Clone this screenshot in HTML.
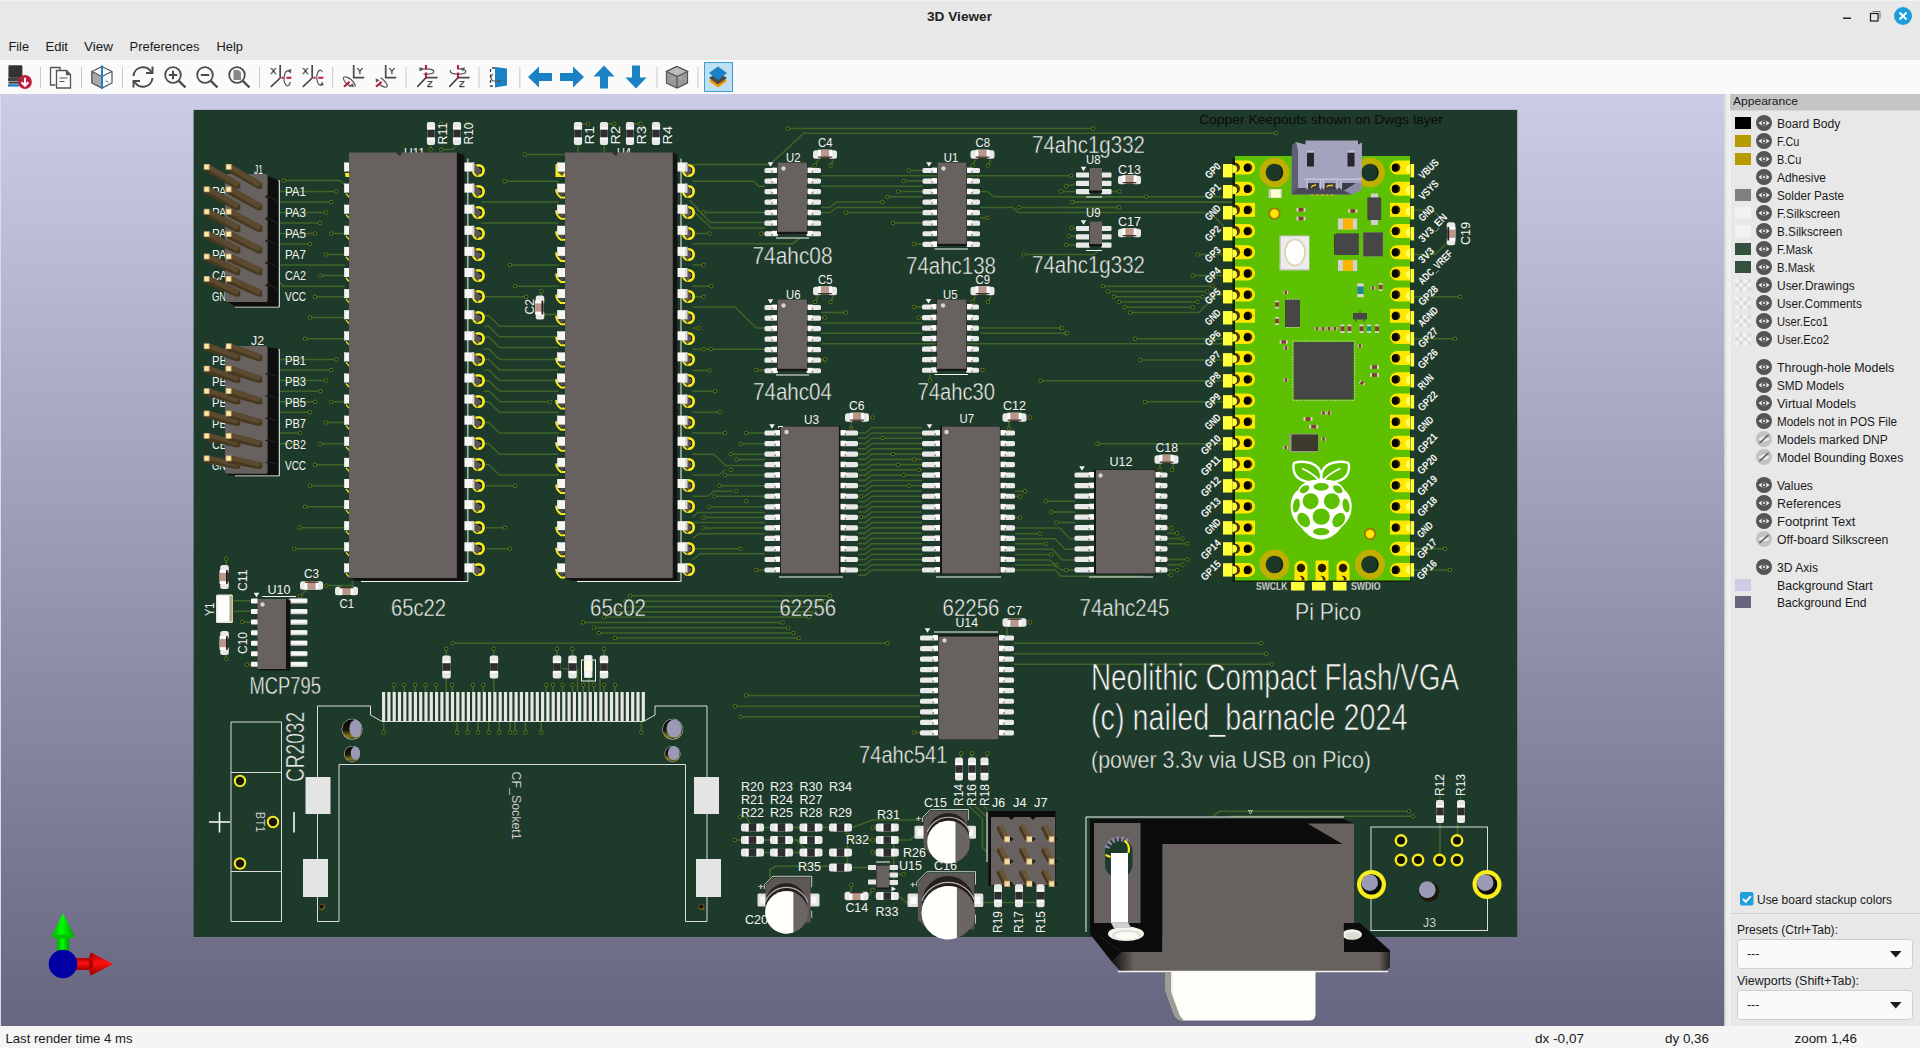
<!DOCTYPE html><html><head><meta charset="utf-8"><title>3D Viewer</title><style>
*{box-sizing:border-box}
html,body{margin:0;padding:0}
body{width:1920px;height:1048px;overflow:hidden;position:relative;background:#e8e8e8;font-family:"Liberation Sans",sans-serif;color:#1e1e1e}
#all{position:absolute;left:0;top:0}
.pt{font-size:12.3px;fill:#1a1a1a;font-family:"Liberation Sans",sans-serif}
.mt{font-size:13.2px;fill:#1a1a1a;font-family:"Liberation Sans",sans-serif}
</style></head><body><svg id="all" width="1920" height="1048" viewBox="0 0 1920 1048"><defs><linearGradient id="bg" x1="0" y1="0" x2="0" y2="1"><stop offset="0" stop-color="#ccccE6"/><stop offset="1" stop-color="#666680"/></linearGradient><clipPath id="cv"><rect x="1" y="94" width="1723.500" height="932"/></clipPath></defs>
<rect x="0" y="0" width="1920" height="60" fill="#e8e8e8"/><rect x="0" y="0" width="1920" height="1" fill="#f2f2f2"/><text x="959.500" y="20.800" text-anchor="middle" font-weight="700" font-size="13px" fill="#222" font-family="Liberation Sans,sans-serif" textLength="65" lengthAdjust="spacingAndGlyphs">3D Viewer</text><rect x="1843" y="17.500" width="8" height="1.400" fill="#1a1a1a"/><rect x="1870.500" y="13.500" width="7.500" height="7.500" fill="none" stroke="#1a1a1a" stroke-width="1.200"/><path d="M1872.500,11.500h7.500v7.500" fill="none" stroke="#555" stroke-width="0.800"/><circle cx="1903" cy="16" r="9" fill="#1f9ede"/><path d="M1899.500,12.500l7,7M1906.500,12.500l-7,7" stroke="#fff" stroke-width="2"/><text x="8.4" y="50.600" class="mt" textLength="20.6" lengthAdjust="spacingAndGlyphs">File</text><text x="45.4" y="50.600" class="mt" textLength="22.6" lengthAdjust="spacingAndGlyphs">Edit</text><text x="84" y="50.600" class="mt" textLength="29" lengthAdjust="spacingAndGlyphs">View</text><text x="129.5" y="50.600" class="mt" textLength="70" lengthAdjust="spacingAndGlyphs">Preferences</text><text x="216.5" y="50.600" class="mt" textLength="26.5" lengthAdjust="spacingAndGlyphs">Help</text><rect x="0" y="60" width="1920" height="34" fill="#fafafa"/><rect x="40.0" y="67" width="1" height="21" fill="#c8c8c8"/><rect x="81.0" y="67" width="1" height="21" fill="#c8c8c8"/><rect x="122.0" y="67" width="1" height="21" fill="#c8c8c8"/><rect x="259.0" y="67" width="1" height="21" fill="#c8c8c8"/><rect x="332.2" y="67" width="1" height="21" fill="#c8c8c8"/><rect x="405.5" y="67" width="1" height="21" fill="#c8c8c8"/><rect x="478.5" y="67" width="1" height="21" fill="#c8c8c8"/><rect x="519.3" y="67" width="1" height="21" fill="#c8c8c8"/><rect x="656.5" y="67" width="1" height="21" fill="#c8c8c8"/><rect x="697.5" y="67" width="1" height="21" fill="#c8c8c8"/><g transform="translate(8,65)"><rect x="0.400" y="0.200" width="14" height="12.500" rx="1.200" fill="#333"/><rect x="0" y="12.500" width="15" height="4" rx="1" fill="#444"/><rect x="0.500" y="17" width="13" height="1.600" fill="#333"/><rect x="0" y="19.200" width="11" height="2.400" fill="#1a81c4"/><circle cx="17" cy="17" r="6.900" fill="#c01c3c"/><path d="M17,12.800v7.500M13.600,17.200l3.400,3.500l3.400,-3.500" stroke="#fff" stroke-width="2" fill="none"/></g><g transform="translate(49,65)" fill="#fafafa" stroke="#555" stroke-width="1.3"><path d="M1.5,2.5h9.5v3M1.5,2.5v17.5h5"/><path d="M7.5,5.5h10l4,4v13.500h-14z"/><path d="M17.5,5.500v4h4" fill="#555"/><path d="M10.500,13h8M10.500,16.500h5" stroke-width="1.2"/></g><g transform="translate(90,65)"><path d="M12,1.500L22,6.500V18L12,23L2,18V6.500Z" fill="#fafafa" stroke="#555" stroke-width="1.2"/><path d="M2,6.500L12,11.500V23L2,18Z" fill="#aaa" stroke="#555" stroke-width="1.2"/><path d="M12,11.500L22,6.500" stroke="#555" stroke-width="1.2"/><path d="M12,0.500V24" stroke="#1a81c4" stroke-width="2"/><path d="M15.500,16l3,1" stroke="#555" stroke-width="0.8"/></g><g transform="translate(131,65)" fill="none" stroke="#4a4a4a" stroke-width="2"><path d="M2.500,11A9.500,9.500 0 0 1 20.500,7.500"/><path d="M21.500,1.500v6.500h-6.500" /><path d="M21.500,13A9.500,9.500 0 0 1 3.500,16.500"/><path d="M2.500,22.500v-6.500h6.500"/></g><g transform="translate(163,65)" fill="none" stroke="#4a4a4a"><circle cx="10" cy="10" r="7.800" stroke-width="1.8"/><path d="M15.800,15.800L22.500,22.500" stroke-width="2.4"/><path d="M10,5.800v8.400M5.800,10h8.400" stroke-width="2"/></g><g transform="translate(195,65)" fill="none" stroke="#4a4a4a"><circle cx="10" cy="10" r="7.800" stroke-width="1.8"/><path d="M15.800,15.800L22.500,22.500" stroke-width="2.4"/><path d="M5.800,10h8.400" stroke-width="2"/></g><g transform="translate(227,65)" fill="none" stroke="#4a4a4a"><circle cx="10" cy="10" r="7.800" stroke-width="1.8"/><path d="M15.800,15.800L22.500,22.500" stroke-width="2.4"/><path d="M6.500,5h5l2.500,2.500v7.500h-7.500z" fill="#888" stroke="none"/></g><g transform="translate(269,65)"><path d="M11.200,0V13L1.800,21.800" stroke="#4a4a4a" stroke-width="1.700" fill="none"/><path d="M12.500,12.800h2.200M17.400,12.800h5" stroke="#c01c3c" stroke-width="1.900"/><path d="M19.800,6.500 A3.300,7.500 0 1 0 21.300,17" stroke="#555" stroke-width="1.200" fill="none"/><path d="M18.300,5.200l3.600,3.400l0.400,-4.600z" fill="#555"/><text x="1.200" y="8.700" font-size="9.300" font-weight="400" fill="#333" stroke="#333" stroke-width="0.250" font-family="Liberation Sans,sans-serif">X</text></g><g transform="translate(301,65)"><path d="M11.200,0V13L1.800,21.800" stroke="#4a4a4a" stroke-width="1.700" fill="none"/><path d="M12.500,12.800h2.200M17.400,12.800h5" stroke="#c01c3c" stroke-width="1.900"/><path d="M21.300,6.800 A3.300,7.500 0 1 0 20.500,19.500" stroke="#555" stroke-width="1.200" fill="none"/><path d="M18.800,20.800l4,-0.600l-1.600,-3.600z" fill="#555"/><text x="1.200" y="8.700" font-size="9.300" font-weight="400" fill="#333" stroke="#333" stroke-width="0.250" font-family="Liberation Sans,sans-serif">X</text></g><g transform="translate(341,65)"><path d="M12.700,0V12.700H23.200" stroke="#4a4a4a" stroke-width="1.700" fill="none"/><ellipse cx="8.300" cy="17" rx="7.300" ry="3" transform="rotate(40 8.300 17)" stroke="#555" stroke-width="1.200" fill="none" stroke-dasharray="34 9" stroke-dashoffset="-4"/><path d="M8.500,20.200l4.200,2.200l-0.400,-4.200z" fill="#555"/><path d="M8.600,16.700L3,21.800" stroke="#c01c3c" stroke-width="2.200"/><text x="15.800" y="8.700" font-size="9.300" font-weight="400" fill="#333" stroke="#333" stroke-width="0.250" font-family="Liberation Sans,sans-serif">Y</text></g><g transform="translate(373,65)"><path d="M12.700,0V12.700H23.200" stroke="#4a4a4a" stroke-width="1.700" fill="none"/><ellipse cx="8.300" cy="17" rx="7.300" ry="3" transform="rotate(40 8.300 17)" stroke="#555" stroke-width="1.200" fill="none" stroke-dasharray="30 13" stroke-dashoffset="-22"/><path d="M2.600,13.200l0.400,4.200l3.600,-2.200z" fill="#555"/><path d="M8.600,16.700L3,21.800" stroke="#c01c3c" stroke-width="2.200"/><text x="15.800" y="8.700" font-size="9.300" font-weight="400" fill="#333" stroke="#333" stroke-width="0.250" font-family="Liberation Sans,sans-serif">Y</text></g><g transform="translate(415,65)"><path d="M11,12.700H22.500M11,12.700L2.300,21.800" stroke="#4a4a4a" stroke-width="1.700" fill="none"/><ellipse cx="11" cy="6.500" rx="7.800" ry="2.700" stroke="#555" stroke-width="1.200" fill="none" stroke-dasharray="36 8" stroke-dashoffset="-19"/><path d="M3.800,2.600l4.400,0.400l-2.200,3.400z" fill="#555"/><path d="M11,0V4.500M11,7.500V13.500" stroke="#c01c3c" stroke-width="2.100"/><text x="12" y="22.400" font-size="9.300" font-weight="400" fill="#333" stroke="#333" stroke-width="0.250" font-family="Liberation Sans,sans-serif">Z</text></g><g transform="translate(447,65)"><path d="M11,12.700H22.500M11,12.700L2.300,21.800" stroke="#4a4a4a" stroke-width="1.700" fill="none"/><ellipse cx="11" cy="6.500" rx="7.800" ry="2.700" stroke="#555" stroke-width="1.200" fill="none" stroke-dasharray="36 8" stroke-dashoffset="-27"/><path d="M18.200,2.600l-4.400,0.400l2.200,3.400z" fill="#555"/><path d="M11,0V4.500M11,7.500V13.500" stroke="#c01c3c" stroke-width="2.100"/><text x="12" y="22.400" font-size="9.300" font-weight="400" fill="#333" stroke="#333" stroke-width="0.250" font-family="Liberation Sans,sans-serif">Z</text></g><g transform="translate(487,65)"><path d="M8,3H3.500V21H8" fill="none" stroke="#444" stroke-width="1.3" stroke-dasharray="3 2.500"/><path d="M8,2L20,3.500V20.500L8,22.500Z" fill="#1a81c4"/><path d="M6,9a4,4 0 0 0 0,7h6" stroke="#555" stroke-width="1.2" fill="none"/><path d="M11,14l3,2l-3,2z" fill="#555"/></g><path d="M528,77l11,-10.500v6.500h13v8h-13v6.500z" fill="#1a81c4"/><path d="M584,77l-11,-10.500v6.500h-13v8h13v6.500z" fill="#1a81c4"/><path d="M604,65.500l10.500,11h-6.500v12h-8v-12h-6.500z" fill="#1a81c4"/><path d="M636,88.500l10.500,-11h-6.500v-12h-8v12h-6.500z" fill="#1a81c4"/><g transform="translate(665,65)"><path d="M12,1.500L22.500,6.500V18L12,23L1.500,18V6.500Z" fill="#999" stroke="#555" stroke-width="1.2"/><path d="M12,1.500L22.500,6.500L12,11.500L1.500,6.500Z" fill="#bbb" stroke="#555" stroke-width="1.2"/><path d="M12,11.500V23" stroke="#555" stroke-width="1.2"/><path d="M12,4v4M7,14l4,-2M17,14l-4,-2" stroke="#ccc" stroke-width="0.6"/></g><rect x="704.500" y="62.500" width="28" height="29" fill="#bde0f3" stroke="#3d9bd6" stroke-width="1"/><g transform="translate(706,65)"><path d="M12,10L21,16L12,22.500L3,16Z" fill="#f29100"/><path d="M12,7L21,13L12,19.500L3,13Z" fill="#4a4a4a"/><path d="M12,1.500L21,8L12,15L3,8Z" fill="#1a81c4"/></g><rect x="1724" y="94" width="196" height="932" fill="#e8e8e8"/><rect x="1724" y="94" width="6" height="932" fill="#ececec"/><rect x="1724.500" y="94" width="1" height="932" fill="#d2d2d2"/><rect x="1729" y="94" width="1.500" height="932" fill="#f4f4f4"/><rect x="1730" y="94" width="190" height="16.500" fill="#c4c4c4"/><text x="1733" y="104.700" font-size="11.5px" fill="#1a1a1a" font-family="Liberation Sans,sans-serif" textLength="65" lengthAdjust="spacingAndGlyphs">Appearance</text><rect x="1735" y="117" width="16" height="12" fill="#000"/><g transform="translate(1764,123)"><circle r="8" fill="#555"/><path d="M-5.6,0 Q0,-5.2 5.6,0 Q0,5.2 -5.6,0Z" fill="#f4f4f4"/><circle r="2.5" fill="#555"/><circle r="1.1" fill="#f4f4f4"/></g><text x="1777" y="127.5" class="pt" textLength="63.4" lengthAdjust="spacingAndGlyphs">Board Body</text><rect x="1735" y="135" width="16" height="12" fill="#b39b00"/><g transform="translate(1764,141)"><circle r="8" fill="#555"/><path d="M-5.6,0 Q0,-5.2 5.6,0 Q0,5.2 -5.6,0Z" fill="#f4f4f4"/><circle r="2.5" fill="#555"/><circle r="1.1" fill="#f4f4f4"/></g><text x="1777" y="145.5" class="pt" textLength="22.2" lengthAdjust="spacingAndGlyphs">F.Cu</text><rect x="1735" y="153" width="16" height="12" fill="#b39b00"/><g transform="translate(1764,159)"><circle r="8" fill="#555"/><path d="M-5.6,0 Q0,-5.2 5.6,0 Q0,5.2 -5.6,0Z" fill="#f4f4f4"/><circle r="2.5" fill="#555"/><circle r="1.1" fill="#f4f4f4"/></g><text x="1777" y="163.5" class="pt" textLength="24.2" lengthAdjust="spacingAndGlyphs">B.Cu</text><g transform="translate(1764,177)"><circle r="8" fill="#555"/><path d="M-5.6,0 Q0,-5.2 5.6,0 Q0,5.2 -5.6,0Z" fill="#f4f4f4"/><circle r="2.5" fill="#555"/><circle r="1.1" fill="#f4f4f4"/></g><text x="1777" y="181.5" class="pt" textLength="49" lengthAdjust="spacingAndGlyphs">Adhesive</text><rect x="1735" y="189" width="16" height="12" fill="#808080"/><g transform="translate(1764,195)"><circle r="8" fill="#555"/><path d="M-5.6,0 Q0,-5.2 5.6,0 Q0,5.2 -5.6,0Z" fill="#f4f4f4"/><circle r="2.5" fill="#555"/><circle r="1.1" fill="#f4f4f4"/></g><text x="1777" y="199.5" class="pt" textLength="67" lengthAdjust="spacingAndGlyphs">Solder Paste</text><rect x="1735" y="207" width="16" height="12" fill="#f2f2f2"/><g transform="translate(1764,213)"><circle r="8" fill="#555"/><path d="M-5.6,0 Q0,-5.2 5.6,0 Q0,5.2 -5.6,0Z" fill="#f4f4f4"/><circle r="2.5" fill="#555"/><circle r="1.1" fill="#f4f4f4"/></g><text x="1777" y="217.5" class="pt" textLength="63.1" lengthAdjust="spacingAndGlyphs">F.Silkscreen</text><rect x="1735" y="225" width="16" height="12" fill="#f2f2f2"/><g transform="translate(1764,231)"><circle r="8" fill="#555"/><path d="M-5.6,0 Q0,-5.2 5.6,0 Q0,5.2 -5.6,0Z" fill="#f4f4f4"/><circle r="2.5" fill="#555"/><circle r="1.1" fill="#f4f4f4"/></g><text x="1777" y="235.5" class="pt" textLength="65.2" lengthAdjust="spacingAndGlyphs">B.Silkscreen</text><rect x="1735" y="243" width="16" height="12" fill="#355241"/><g transform="translate(1764,249)"><circle r="8" fill="#555"/><path d="M-5.6,0 Q0,-5.2 5.6,0 Q0,5.2 -5.6,0Z" fill="#f4f4f4"/><circle r="2.5" fill="#555"/><circle r="1.1" fill="#f4f4f4"/></g><text x="1777" y="253.5" class="pt" textLength="35.6" lengthAdjust="spacingAndGlyphs">F.Mask</text><rect x="1735" y="261" width="16" height="12" fill="#355241"/><g transform="translate(1764,267)"><circle r="8" fill="#555"/><path d="M-5.6,0 Q0,-5.2 5.6,0 Q0,5.2 -5.6,0Z" fill="#f4f4f4"/><circle r="2.5" fill="#555"/><circle r="1.1" fill="#f4f4f4"/></g><text x="1777" y="271.5" class="pt" textLength="37.6" lengthAdjust="spacingAndGlyphs">B.Mask</text><rect x="1735" y="279" width="16" height="12" fill="#f2f2f2"/><rect x="1735" y="283" width="4" height="4" fill="#dcdcdc"/><rect x="1739" y="279" width="4" height="4" fill="#dcdcdc"/><rect x="1739" y="287" width="4" height="4" fill="#dcdcdc"/><rect x="1743" y="283" width="4" height="4" fill="#dcdcdc"/><rect x="1747" y="279" width="4" height="4" fill="#dcdcdc"/><rect x="1747" y="287" width="4" height="4" fill="#dcdcdc"/><g transform="translate(1764,285)"><circle r="8" fill="#555"/><path d="M-5.6,0 Q0,-5.2 5.6,0 Q0,5.2 -5.6,0Z" fill="#f4f4f4"/><circle r="2.5" fill="#555"/><circle r="1.1" fill="#f4f4f4"/></g><text x="1777" y="289.5" class="pt" textLength="77.8" lengthAdjust="spacingAndGlyphs">User.Drawings</text><rect x="1735" y="297" width="16" height="12" fill="#f2f2f2"/><rect x="1735" y="301" width="4" height="4" fill="#dcdcdc"/><rect x="1739" y="297" width="4" height="4" fill="#dcdcdc"/><rect x="1739" y="305" width="4" height="4" fill="#dcdcdc"/><rect x="1743" y="301" width="4" height="4" fill="#dcdcdc"/><rect x="1747" y="297" width="4" height="4" fill="#dcdcdc"/><rect x="1747" y="305" width="4" height="4" fill="#dcdcdc"/><g transform="translate(1764,303)"><circle r="8" fill="#555"/><path d="M-5.6,0 Q0,-5.2 5.6,0 Q0,5.2 -5.6,0Z" fill="#f4f4f4"/><circle r="2.5" fill="#555"/><circle r="1.1" fill="#f4f4f4"/></g><text x="1777" y="307.5" class="pt" textLength="84.8" lengthAdjust="spacingAndGlyphs">User.Comments</text><rect x="1735" y="315" width="16" height="12" fill="#f2f2f2"/><rect x="1735" y="319" width="4" height="4" fill="#dcdcdc"/><rect x="1739" y="315" width="4" height="4" fill="#dcdcdc"/><rect x="1739" y="323" width="4" height="4" fill="#dcdcdc"/><rect x="1743" y="319" width="4" height="4" fill="#dcdcdc"/><rect x="1747" y="315" width="4" height="4" fill="#dcdcdc"/><rect x="1747" y="323" width="4" height="4" fill="#dcdcdc"/><g transform="translate(1764,321)"><circle r="8" fill="#555"/><path d="M-5.6,0 Q0,-5.2 5.6,0 Q0,5.2 -5.6,0Z" fill="#f4f4f4"/><circle r="2.5" fill="#555"/><circle r="1.1" fill="#f4f4f4"/></g><text x="1777" y="325.5" class="pt" textLength="51.3" lengthAdjust="spacingAndGlyphs">User.Eco1</text><rect x="1735" y="333" width="16" height="12" fill="#f2f2f2"/><rect x="1735" y="337" width="4" height="4" fill="#dcdcdc"/><rect x="1739" y="333" width="4" height="4" fill="#dcdcdc"/><rect x="1739" y="341" width="4" height="4" fill="#dcdcdc"/><rect x="1743" y="337" width="4" height="4" fill="#dcdcdc"/><rect x="1747" y="333" width="4" height="4" fill="#dcdcdc"/><rect x="1747" y="341" width="4" height="4" fill="#dcdcdc"/><g transform="translate(1764,339)"><circle r="8" fill="#555"/><path d="M-5.6,0 Q0,-5.2 5.6,0 Q0,5.2 -5.6,0Z" fill="#f4f4f4"/><circle r="2.5" fill="#555"/><circle r="1.1" fill="#f4f4f4"/></g><text x="1777" y="343.5" class="pt" textLength="52" lengthAdjust="spacingAndGlyphs">User.Eco2</text><g transform="translate(1764,367)"><circle r="8" fill="#555"/><path d="M-5.6,0 Q0,-5.2 5.6,0 Q0,5.2 -5.6,0Z" fill="#f4f4f4"/><circle r="2.5" fill="#555"/><circle r="1.1" fill="#f4f4f4"/></g><text x="1777" y="371.5" class="pt" textLength="117.3" lengthAdjust="spacingAndGlyphs">Through-hole Models</text><g transform="translate(1764,385)"><circle r="8" fill="#555"/><path d="M-5.6,0 Q0,-5.2 5.6,0 Q0,5.2 -5.6,0Z" fill="#f4f4f4"/><circle r="2.5" fill="#555"/><circle r="1.1" fill="#f4f4f4"/></g><text x="1777" y="389.5" class="pt" textLength="67" lengthAdjust="spacingAndGlyphs">SMD Models</text><g transform="translate(1764,403)"><circle r="8" fill="#555"/><path d="M-5.6,0 Q0,-5.2 5.6,0 Q0,5.2 -5.6,0Z" fill="#f4f4f4"/><circle r="2.5" fill="#555"/><circle r="1.1" fill="#f4f4f4"/></g><text x="1777" y="407.5" class="pt" textLength="78.9" lengthAdjust="spacingAndGlyphs">Virtual Models</text><g transform="translate(1764,421)"><circle r="8" fill="#555"/><path d="M-5.6,0 Q0,-5.2 5.6,0 Q0,5.2 -5.6,0Z" fill="#f4f4f4"/><circle r="2.5" fill="#555"/><circle r="1.1" fill="#f4f4f4"/></g><text x="1777" y="425.5" class="pt" textLength="120.1" lengthAdjust="spacingAndGlyphs">Models not in POS File</text><g transform="translate(1764,439)"><circle r="8" fill="#c2c2c2"/><path d="M-5.6,0 Q0,-5.2 5.6,0 Q0,5.2 -5.6,0Z" fill="#efefef"/><path d="M-4.6,4.2 L4.6,-4.2" stroke="#666" stroke-width="1.6"/></g><text x="1777" y="443.5" class="pt" textLength="110.8" lengthAdjust="spacingAndGlyphs">Models marked DNP</text><g transform="translate(1764,457)"><circle r="8" fill="#c2c2c2"/><path d="M-5.6,0 Q0,-5.2 5.6,0 Q0,5.2 -5.6,0Z" fill="#efefef"/><path d="M-4.6,4.2 L4.6,-4.2" stroke="#666" stroke-width="1.6"/></g><text x="1777" y="461.5" class="pt" textLength="126.3" lengthAdjust="spacingAndGlyphs">Model Bounding Boxes</text><g transform="translate(1764,485)"><circle r="8" fill="#555"/><path d="M-5.6,0 Q0,-5.2 5.6,0 Q0,5.2 -5.6,0Z" fill="#f4f4f4"/><circle r="2.5" fill="#555"/><circle r="1.1" fill="#f4f4f4"/></g><text x="1777" y="489.5" class="pt" textLength="35.8" lengthAdjust="spacingAndGlyphs">Values</text><g transform="translate(1764,503)"><circle r="8" fill="#555"/><path d="M-5.6,0 Q0,-5.2 5.6,0 Q0,5.2 -5.6,0Z" fill="#f4f4f4"/><circle r="2.5" fill="#555"/><circle r="1.1" fill="#f4f4f4"/></g><text x="1777" y="507.5" class="pt" textLength="63.9" lengthAdjust="spacingAndGlyphs">References</text><g transform="translate(1764,521)"><circle r="8" fill="#555"/><path d="M-5.6,0 Q0,-5.2 5.6,0 Q0,5.2 -5.6,0Z" fill="#f4f4f4"/><circle r="2.5" fill="#555"/><circle r="1.1" fill="#f4f4f4"/></g><text x="1777" y="525.5" class="pt" textLength="78.4" lengthAdjust="spacingAndGlyphs">Footprint Text</text><g transform="translate(1764,539)"><circle r="8" fill="#c2c2c2"/><path d="M-5.6,0 Q0,-5.2 5.6,0 Q0,5.2 -5.6,0Z" fill="#efefef"/><path d="M-4.6,4.2 L4.6,-4.2" stroke="#666" stroke-width="1.6"/></g><text x="1777" y="543.5" class="pt" textLength="111.3" lengthAdjust="spacingAndGlyphs">Off-board Silkscreen</text><g transform="translate(1764,567)"><circle r="8" fill="#555"/><path d="M-5.6,0 Q0,-5.2 5.6,0 Q0,5.2 -5.6,0Z" fill="#f4f4f4"/><circle r="2.5" fill="#555"/><circle r="1.1" fill="#f4f4f4"/></g><text x="1777" y="571.5" class="pt" textLength="41" lengthAdjust="spacingAndGlyphs">3D Axis</text><rect x="1735" y="579" width="16" height="12" fill="#cccce6"/><text x="1777" y="589.5" class="pt" textLength="95.6" lengthAdjust="spacingAndGlyphs">Background Start</text><rect x="1735" y="596" width="16" height="12" fill="#666680"/><text x="1777" y="606.5" class="pt" textLength="89.4" lengthAdjust="spacingAndGlyphs">Background End</text><rect x="1740" y="892" width="13.500" height="13.500" rx="2" fill="#1f9ede"/><path d="M1743,899l2.800,2.800l5,-5.600" stroke="#fff" stroke-width="2" fill="none"/><text x="1757" y="903.500" class="pt" textLength="135" lengthAdjust="spacingAndGlyphs">Use board stackup colors</text><rect x="1730" y="913" width="190" height="1" fill="#d2d2d2"/><text x="1737" y="933.800" class="pt" textLength="101" lengthAdjust="spacingAndGlyphs">Presets (Ctrl+Tab):</text><rect x="1737.500" y="939.500" width="175" height="29" rx="3" fill="#fafafa" stroke="#cfcfcf"/><text x="1747" y="958" class="pt">---</text><path d="M1890,951h11.500l-5.750,6.500z" fill="#1a1a1a"/><text x="1737" y="984.800" class="pt" textLength="122" lengthAdjust="spacingAndGlyphs">Viewports (Shift+Tab):</text><rect x="1737.500" y="990.500" width="175" height="29" rx="3" fill="#fafafa" stroke="#cfcfcf"/><text x="1747" y="1009" class="pt">---</text><path d="M1890,1002h11.500l-5.750,6.500z" fill="#1a1a1a"/><rect x="0" y="1026" width="1920" height="22" fill="#f5f5f5"/><text x="5.500" y="1042.500" class="mt" textLength="127" lengthAdjust="spacingAndGlyphs">Last render time 4 ms</text><text x="1535" y="1042.500" class="mt" textLength="49" lengthAdjust="spacingAndGlyphs">dx -0,07</text><text x="1665" y="1042.500" class="mt" textLength="44" lengthAdjust="spacingAndGlyphs">dy 0,36</text><text x="1794.500" y="1042.500" class="mt" textLength="62.500" lengthAdjust="spacingAndGlyphs">zoom 1,46</text>
<rect x="0" y="94" width="1" height="932" fill="#dcdcdc"/>
<g clip-path="url(#cv)" font-family="Liberation Sans,sans-serif">
<rect x="1" y="94" width="1723.500" height="932" fill="url(#bg)"/>
<rect x="193.6" y="109.9" width="1323.6" height="827.1" fill="#1e3a2b" />
<path d="M283.75,180.5 L340,180.5 L345,185" fill="none" stroke="#3f6428" stroke-width="1.6" stroke-linejoin="round"/><circle cx="283.75" cy="180.5" r="2.2" fill="#4f6b22" /><circle cx="283.75" cy="180.5" r="1.1" fill="#0c0c04" /><path d="M280,191.5 L336.25,191.5" fill="none" stroke="#3f6428" stroke-width="1.6" stroke-linejoin="round"/><circle cx="336.25" cy="191.5" r="2.2" fill="#4f6b22" /><circle cx="336.25" cy="191.5" r="1.1" fill="#0c0c04" /><path d="M280,202 L331.25,202" fill="none" stroke="#3f6428" stroke-width="1.6" stroke-linejoin="round"/><circle cx="331.25" cy="202" r="2.2" fill="#4f6b22" /><circle cx="331.25" cy="202" r="1.1" fill="#0c0c04" /><path d="M280,212.5 L326.25,212.5" fill="none" stroke="#3f6428" stroke-width="1.6" stroke-linejoin="round"/><circle cx="326.25" cy="212.5" r="2.2" fill="#4f6b22" /><circle cx="326.25" cy="212.5" r="1.1" fill="#0c0c04" /><path d="M280,223 L320,223" fill="none" stroke="#3f6428" stroke-width="1.6" stroke-linejoin="round"/><circle cx="320" cy="223" r="2.2" fill="#4f6b22" /><circle cx="320" cy="223" r="1.1" fill="#0c0c04" /><path d="M280,233.5 L315,233.5" fill="none" stroke="#3f6428" stroke-width="1.6" stroke-linejoin="round"/><circle cx="315" cy="233.5" r="2.2" fill="#4f6b22" /><circle cx="315" cy="233.5" r="1.1" fill="#0c0c04" /><path d="M280,244 L310,244" fill="none" stroke="#3f6428" stroke-width="1.6" stroke-linejoin="round"/><circle cx="310" cy="244" r="2.2" fill="#4f6b22" /><circle cx="310" cy="244" r="1.1" fill="#0c0c04" /><path d="M331.25,233.5 L345,233.5" fill="none" stroke="#3f6428" stroke-width="1.6" stroke-linejoin="round"/><circle cx="331.25" cy="233.5" r="2.2" fill="#4f6b22" /><circle cx="331.25" cy="233.5" r="1.1" fill="#0c0c04" /><path d="M325.75,254.5 L345,254.5" fill="none" stroke="#3f6428" stroke-width="1.6" stroke-linejoin="round"/><circle cx="325.75" cy="254.5" r="2.2" fill="#4f6b22" /><circle cx="325.75" cy="254.5" r="1.1" fill="#0c0c04" /><path d="M320,275.5 L345,275.5" fill="none" stroke="#3f6428" stroke-width="1.6" stroke-linejoin="round"/><circle cx="320" cy="275.5" r="2.2" fill="#4f6b22" /><circle cx="320" cy="275.5" r="1.1" fill="#0c0c04" /><path d="M315,296.75 L345,296.75" fill="none" stroke="#3f6428" stroke-width="1.6" stroke-linejoin="round"/><circle cx="315" cy="296.75" r="2.2" fill="#4f6b22" /><circle cx="315" cy="296.75" r="1.1" fill="#0c0c04" /><path d="M310,317.5 L345,317.5" fill="none" stroke="#3f6428" stroke-width="1.6" stroke-linejoin="round"/><circle cx="310" cy="317.5" r="2.2" fill="#4f6b22" /><circle cx="310" cy="317.5" r="1.1" fill="#0c0c04" /><path d="M305,338.75 L345,338.75" fill="none" stroke="#3f6428" stroke-width="1.6" stroke-linejoin="round"/><circle cx="305" cy="338.75" r="2.2" fill="#4f6b22" /><circle cx="305" cy="338.75" r="1.1" fill="#0c0c04" /><path d="M280,265 L345,265" fill="none" stroke="#3f6428" stroke-width="1.6" stroke-linejoin="round"/><path d="M280,282.5 L283,286.25 L345,286.25" fill="none" stroke="#3f6428" stroke-width="1.6" stroke-linejoin="round"/><path d="M525,154.5 L566.25,154.5" fill="none" stroke="#3f6428" stroke-width="1.6" stroke-linejoin="round"/><circle cx="525" cy="154.5" r="2.2" fill="#4f6b22" /><circle cx="525" cy="154.5" r="1.1" fill="#0c0c04" /><path d="M504.5,181.25 L558.75,181.25" fill="none" stroke="#3f6428" stroke-width="1.6" stroke-linejoin="round"/><circle cx="504.5" cy="181.25" r="2.2" fill="#4f6b22" /><circle cx="504.5" cy="181.25" r="1.1" fill="#0c0c04" /><path d="M481.25,202 L558.75,202" fill="none" stroke="#3f6428" stroke-width="1.6" stroke-linejoin="round"/><path d="M481.25,223 L558.75,223" fill="none" stroke="#3f6428" stroke-width="1.6" stroke-linejoin="round"/><path d="M510,265 L558.75,265" fill="none" stroke="#3f6428" stroke-width="1.6" stroke-linejoin="round"/><circle cx="510" cy="265" r="2.2" fill="#4f6b22" /><circle cx="510" cy="265" r="1.1" fill="#0c0c04" /><path d="M515,286.25 L558.75,286.25" fill="none" stroke="#3f6428" stroke-width="1.6" stroke-linejoin="round"/><circle cx="515" cy="286.25" r="2.2" fill="#4f6b22" /><circle cx="515" cy="286.25" r="1.1" fill="#0c0c04" /><path d="M483.75,296.75 L526.25,296.75" fill="none" stroke="#3f6428" stroke-width="1.6" stroke-linejoin="round"/><circle cx="526.25" cy="296.75" r="2.2" fill="#4f6b22" /><circle cx="526.25" cy="296.75" r="1.1" fill="#0c0c04" /><path d="M541.25,291.25 L541.25,297.5" fill="none" stroke="#3f6428" stroke-width="1.6" stroke-linejoin="round"/><circle cx="541.25" cy="291.25" r="2.2" fill="#4f6b22" /><circle cx="541.25" cy="291.25" r="1.1" fill="#0c0c04" /><path d="M543.75,314.5 L558.75,314.5" fill="none" stroke="#3f6428" stroke-width="1.6" stroke-linejoin="round"/><path d="M430.75,149.5 L430.75,145" fill="none" stroke="#3f6428" stroke-width="1.6" stroke-linejoin="round"/><circle cx="430.75" cy="149.5" r="2.2" fill="#4f6b22" /><circle cx="430.75" cy="149.5" r="1.1" fill="#0c0c04" /><path d="M441.25,149.5 L452.5,149.5 L456.75,145" fill="none" stroke="#3f6428" stroke-width="1.6" stroke-linejoin="round"/><circle cx="441.25" cy="149.5" r="2.2" fill="#4f6b22" /><circle cx="441.25" cy="149.5" r="1.1" fill="#0c0c04" /><path d="M441.25,123.75 L441.25,123.75" fill="none" stroke="#3f6428" stroke-width="1.6" stroke-linejoin="round"/><circle cx="441.25" cy="123.75" r="2.2" fill="#4f6b22" /><circle cx="441.25" cy="123.75" r="1.1" fill="#0c0c04" /><path d="M467.5,123.75 L467.5,123.75" fill="none" stroke="#3f6428" stroke-width="1.6" stroke-linejoin="round"/><circle cx="467.5" cy="123.75" r="2.2" fill="#4f6b22" /><circle cx="467.5" cy="123.75" r="1.1" fill="#0c0c04" /><path d="M588,123.75 L578,123.75" fill="none" stroke="#3f6428" stroke-width="1.6" stroke-linejoin="round"/><circle cx="588" cy="123.75" r="2.2" fill="#4f6b22" /><circle cx="588" cy="123.75" r="1.1" fill="#0c0c04" /><path d="M614.25,123.75 L604.25,123.75" fill="none" stroke="#3f6428" stroke-width="1.6" stroke-linejoin="round"/><circle cx="614.25" cy="123.75" r="2.2" fill="#4f6b22" /><circle cx="614.25" cy="123.75" r="1.1" fill="#0c0c04" /><path d="M640.5,123.75 L630.5,123.75" fill="none" stroke="#3f6428" stroke-width="1.6" stroke-linejoin="round"/><circle cx="640.5" cy="123.75" r="2.2" fill="#4f6b22" /><circle cx="640.5" cy="123.75" r="1.1" fill="#0c0c04" /><path d="M578,145 L578,152.5" fill="none" stroke="#3f6428" stroke-width="1.6" stroke-linejoin="round"/><path d="M604.25,145 L604.25,152.5" fill="none" stroke="#3f6428" stroke-width="1.6" stroke-linejoin="round"/><path d="M483.75,315.75 L488.75,315.75 L499.5,326.25 L558.75,326.25" fill="none" stroke="#3f6428" stroke-width="1.6" stroke-linejoin="round"/><path d="M483.75,326.25 L488.75,326.25 L499.5,336.75 L558.75,336.75" fill="none" stroke="#3f6428" stroke-width="1.6" stroke-linejoin="round"/><path d="M483.75,337 L488.75,337 L499.5,347.5 L558.75,347.5" fill="none" stroke="#3f6428" stroke-width="1.6" stroke-linejoin="round"/><path d="M483.75,349 L488.75,349 L499.5,359.5 L558.75,359.5" fill="none" stroke="#3f6428" stroke-width="1.6" stroke-linejoin="round"/><path d="M483.75,359.5 L488.75,359.5 L499.5,370 L558.75,370" fill="none" stroke="#3f6428" stroke-width="1.6" stroke-linejoin="round"/><path d="M483.75,370 L488.75,370 L499.5,380.5 L558.75,380.5" fill="none" stroke="#3f6428" stroke-width="1.6" stroke-linejoin="round"/><path d="M483.75,380.75 L488.75,380.75 L499.5,391.25 L558.75,391.25" fill="none" stroke="#3f6428" stroke-width="1.6" stroke-linejoin="round"/><path d="M483.75,401.75 L488.75,401.75 L499.5,412.25 L558.75,412.25" fill="none" stroke="#3f6428" stroke-width="1.6" stroke-linejoin="round"/><path d="M483.75,422.5 L488.75,422.5 L499.5,433 L558.75,433" fill="none" stroke="#3f6428" stroke-width="1.6" stroke-linejoin="round"/><path d="M483.75,443.75 L488.75,443.75 L499.5,454.25 L558.75,454.25" fill="none" stroke="#3f6428" stroke-width="1.6" stroke-linejoin="round"/><path d="M483.75,464.5 L488.75,464.5 L499.5,475 L558.75,475" fill="none" stroke="#3f6428" stroke-width="1.6" stroke-linejoin="round"/><path d="M483.75,391.25 L489.5,391.25 L500,401.75 L550,401.75" fill="none" stroke="#3f6428" stroke-width="1.6" stroke-linejoin="round"/><circle cx="550" cy="401.75" r="2.2" fill="#4f6b22" /><circle cx="550" cy="401.75" r="1.1" fill="#0c0c04" /><path d="M486.25,485.75 L515,485.75" fill="none" stroke="#3f6428" stroke-width="1.6" stroke-linejoin="round"/><circle cx="515" cy="485.75" r="2.2" fill="#4f6b22" /><circle cx="515" cy="485.75" r="1.1" fill="#0c0c04" /><path d="M486.25,527.75 L505,527.75" fill="none" stroke="#3f6428" stroke-width="1.6" stroke-linejoin="round"/><circle cx="505" cy="527.75" r="2.2" fill="#4f6b22" /><circle cx="505" cy="527.75" r="1.1" fill="#0c0c04" /><path d="M486.25,548.75 L510,548.75" fill="none" stroke="#3f6428" stroke-width="1.6" stroke-linejoin="round"/><circle cx="510" cy="548.75" r="2.2" fill="#4f6b22" /><circle cx="510" cy="548.75" r="1.1" fill="#0c0c04" /><path d="M280,359.5 L336.25,359.5" fill="none" stroke="#3f6428" stroke-width="1.6" stroke-linejoin="round"/><circle cx="336.25" cy="359.5" r="2.2" fill="#4f6b22" /><circle cx="336.25" cy="359.5" r="1.1" fill="#0c0c04" /><path d="M280,370 L331.25,370" fill="none" stroke="#3f6428" stroke-width="1.6" stroke-linejoin="round"/><circle cx="331.25" cy="370" r="2.2" fill="#4f6b22" /><circle cx="331.25" cy="370" r="1.1" fill="#0c0c04" /><path d="M280,380.5 L326.25,380.5" fill="none" stroke="#3f6428" stroke-width="1.6" stroke-linejoin="round"/><circle cx="326.25" cy="380.5" r="2.2" fill="#4f6b22" /><circle cx="326.25" cy="380.5" r="1.1" fill="#0c0c04" /><path d="M280,391.25 L320.5,391.25" fill="none" stroke="#3f6428" stroke-width="1.6" stroke-linejoin="round"/><circle cx="320.5" cy="391.25" r="2.2" fill="#4f6b22" /><circle cx="320.5" cy="391.25" r="1.1" fill="#0c0c04" /><path d="M280,401.75 L315,401.75" fill="none" stroke="#3f6428" stroke-width="1.6" stroke-linejoin="round"/><circle cx="315" cy="401.75" r="2.2" fill="#4f6b22" /><circle cx="315" cy="401.75" r="1.1" fill="#0c0c04" /><path d="M280,412.25 L310,412.25" fill="none" stroke="#3f6428" stroke-width="1.6" stroke-linejoin="round"/><circle cx="310" cy="412.25" r="2.2" fill="#4f6b22" /><circle cx="310" cy="412.25" r="1.1" fill="#0c0c04" /><path d="M280,433 L300,433" fill="none" stroke="#3f6428" stroke-width="1.6" stroke-linejoin="round"/><circle cx="300" cy="433" r="2.2" fill="#4f6b22" /><circle cx="300" cy="433" r="1.1" fill="#0c0c04" /><path d="M280,443.75 L294.25,443.75" fill="none" stroke="#3f6428" stroke-width="1.6" stroke-linejoin="round"/><circle cx="294.25" cy="443.75" r="2.2" fill="#4f6b22" /><circle cx="294.25" cy="443.75" r="1.1" fill="#0c0c04" /><path d="M331.25,401.75 L345,401.75" fill="none" stroke="#3f6428" stroke-width="1.6" stroke-linejoin="round"/><circle cx="331.25" cy="401.75" r="2.2" fill="#4f6b22" /><circle cx="331.25" cy="401.75" r="1.1" fill="#0c0c04" /><path d="M325.75,422.5 L345,422.5" fill="none" stroke="#3f6428" stroke-width="1.6" stroke-linejoin="round"/><circle cx="325.75" cy="422.5" r="2.2" fill="#4f6b22" /><circle cx="325.75" cy="422.5" r="1.1" fill="#0c0c04" /><path d="M320,443.75 L345,443.75" fill="none" stroke="#3f6428" stroke-width="1.6" stroke-linejoin="round"/><circle cx="320" cy="443.75" r="2.2" fill="#4f6b22" /><circle cx="320" cy="443.75" r="1.1" fill="#0c0c04" /><path d="M315,464.75 L345,464.75" fill="none" stroke="#3f6428" stroke-width="1.6" stroke-linejoin="round"/><circle cx="315" cy="464.75" r="2.2" fill="#4f6b22" /><circle cx="315" cy="464.75" r="1.1" fill="#0c0c04" /><path d="M310,485.75 L345,485.75" fill="none" stroke="#3f6428" stroke-width="1.6" stroke-linejoin="round"/><circle cx="310" cy="485.75" r="2.2" fill="#4f6b22" /><circle cx="310" cy="485.75" r="1.1" fill="#0c0c04" /><path d="M305,506.75 L345,506.75" fill="none" stroke="#3f6428" stroke-width="1.6" stroke-linejoin="round"/><circle cx="305" cy="506.75" r="2.2" fill="#4f6b22" /><circle cx="305" cy="506.75" r="1.1" fill="#0c0c04" /><path d="M299.5,527.75 L345,527.75" fill="none" stroke="#3f6428" stroke-width="1.6" stroke-linejoin="round"/><circle cx="299.5" cy="527.75" r="2.2" fill="#4f6b22" /><circle cx="299.5" cy="527.75" r="1.1" fill="#0c0c04" /><path d="M294.25,548.75 L345,548.75" fill="none" stroke="#3f6428" stroke-width="1.6" stroke-linejoin="round"/><circle cx="294.25" cy="548.75" r="2.2" fill="#4f6b22" /><circle cx="294.25" cy="548.75" r="1.1" fill="#0c0c04" /><path d="M226.25,558.75 L226.25,565.5" fill="none" stroke="#3f6428" stroke-width="1.6" stroke-linejoin="round"/><circle cx="226.25" cy="558.75" r="2.2" fill="#4f6b22" /><circle cx="226.25" cy="558.75" r="1.1" fill="#0c0c04" /><path d="M320,585.5 L352.5,585.5 L352.5,581.25" fill="none" stroke="#3f6428" stroke-width="1.6" stroke-linejoin="round"/><path d="M300,596.25 L307.5,588.75 L320,586.25" fill="none" stroke="#3f6428" stroke-width="1.6" stroke-linejoin="round"/><circle cx="300" cy="596.25" r="2.2" fill="#4f6b22" /><circle cx="300" cy="596.25" r="1.1" fill="#0c0c04" /><path d="M326.25,585.5 L326.25,585.5" fill="none" stroke="#3f6428" stroke-width="1.6" stroke-linejoin="round"/><circle cx="326.25" cy="585.5" r="2.2" fill="#4f6b22" /><circle cx="326.25" cy="585.5" r="1.1" fill="#0c0c04" /><path d="M233.75,600.75 L252.5,600.75" fill="none" stroke="#3f6428" stroke-width="1.6" stroke-linejoin="round"/><path d="M233.75,611.25 L252.5,611.25" fill="none" stroke="#3f6428" stroke-width="1.6" stroke-linejoin="round"/><path d="M242,622 L252.5,622" fill="none" stroke="#3f6428" stroke-width="1.6" stroke-linejoin="round"/><circle cx="242" cy="622" r="2.2" fill="#4f6b22" /><circle cx="242" cy="622" r="1.1" fill="#0c0c04" /><path d="M226.25,658.75 L226.25,653.75" fill="none" stroke="#3f6428" stroke-width="1.6" stroke-linejoin="round"/><circle cx="226.25" cy="658.75" r="2.2" fill="#4f6b22" /><circle cx="226.25" cy="658.75" r="1.1" fill="#0c0c04" /><path d="M247,664.5 L252.5,664.5" fill="none" stroke="#3f6428" stroke-width="1.6" stroke-linejoin="round"/><circle cx="247" cy="664.5" r="2.2" fill="#4f6b22" /><circle cx="247" cy="664.5" r="1.1" fill="#0c0c04" /><path d="M788,128.5 L1093,128.5" fill="none" stroke="#3f6428" stroke-width="1.6" stroke-linejoin="round"/><circle cx="788" cy="128.5" r="2.2" fill="#4f6b22" /><circle cx="788" cy="128.5" r="1.1" fill="#0c0c04" /><circle cx="1093" cy="128.5" r="2.2" fill="#4f6b22" /><circle cx="1093" cy="128.5" r="1.1" fill="#0c0c04" /><path d="M692.5,164.5 L770,164.5 L803.75,133.25 L1276.25,133.25" fill="none" stroke="#3f6428" stroke-width="1.6" stroke-linejoin="round"/><circle cx="1276.25" cy="133.25" r="2.2" fill="#4f6b22" /><circle cx="1276.25" cy="133.25" r="1.1" fill="#0c0c04" /><path d="M692.5,181.25 L753.75,181.25 L758.75,186.25 L765,186.25" fill="none" stroke="#3f6428" stroke-width="1.6" stroke-linejoin="round"/><path d="M689.5,200 L710,222.5 L765,222.5" fill="none" stroke="#3f6428" stroke-width="1.6" stroke-linejoin="round"/><path d="M689.5,207.5 L711.25,228 L765,228" fill="none" stroke="#3f6428" stroke-width="1.6" stroke-linejoin="round"/><path d="M703.75,212.5 L765,212.5" fill="none" stroke="#3f6428" stroke-width="1.6" stroke-linejoin="round"/><circle cx="703.75" cy="212.5" r="2.2" fill="#4f6b22" /><circle cx="703.75" cy="212.5" r="1.1" fill="#0c0c04" /><path d="M692.5,233.5 L709.5,233.5" fill="none" stroke="#3f6428" stroke-width="1.6" stroke-linejoin="round"/><circle cx="709.5" cy="233.5" r="2.2" fill="#4f6b22" /><circle cx="709.5" cy="233.5" r="1.1" fill="#0c0c04" /><path d="M761.25,233.5 L765,233.5" fill="none" stroke="#3f6428" stroke-width="1.6" stroke-linejoin="round"/><circle cx="761.25" cy="233.5" r="2.2" fill="#4f6b22" /><circle cx="761.25" cy="233.5" r="1.1" fill="#0c0c04" /><path d="M692.5,243.75 L792.5,243.75 L800,238" fill="none" stroke="#3f6428" stroke-width="1.6" stroke-linejoin="round"/><path d="M692.5,265 L703.75,265" fill="none" stroke="#3f6428" stroke-width="1.6" stroke-linejoin="round"/><circle cx="703.75" cy="265" r="2.2" fill="#4f6b22" /><circle cx="703.75" cy="265" r="1.1" fill="#0c0c04" /><path d="M692.5,286.25 L711.25,286.25" fill="none" stroke="#3f6428" stroke-width="1.6" stroke-linejoin="round"/><circle cx="711.25" cy="286.25" r="2.2" fill="#4f6b22" /><circle cx="711.25" cy="286.25" r="1.1" fill="#0c0c04" /><path d="M692.5,296.75 L703.75,296.75" fill="none" stroke="#3f6428" stroke-width="1.6" stroke-linejoin="round"/><circle cx="703.75" cy="296.75" r="2.2" fill="#4f6b22" /><circle cx="703.75" cy="296.75" r="1.1" fill="#0c0c04" /><path d="M692.5,307 L735,307 L756.25,328 L765,328" fill="none" stroke="#3f6428" stroke-width="1.6" stroke-linejoin="round"/><path d="M692.5,328 L698.75,328" fill="none" stroke="#3f6428" stroke-width="1.6" stroke-linejoin="round"/><circle cx="698.75" cy="328" r="2.2" fill="#4f6b22" /><circle cx="698.75" cy="328" r="1.1" fill="#0c0c04" /><path d="M692.5,349.25 L765,349.25" fill="none" stroke="#3f6428" stroke-width="1.6" stroke-linejoin="round"/><path d="M703.75,349.25 L703.75,349.25" fill="none" stroke="#3f6428" stroke-width="1.6" stroke-linejoin="round"/><circle cx="703.75" cy="349.25" r="2.2" fill="#4f6b22" /><circle cx="703.75" cy="349.25" r="1.1" fill="#0c0c04" /><path d="M710.75,349.25 L710.75,349.25" fill="none" stroke="#3f6428" stroke-width="1.6" stroke-linejoin="round"/><circle cx="710.75" cy="349.25" r="2.2" fill="#4f6b22" /><circle cx="710.75" cy="349.25" r="1.1" fill="#0c0c04" /><path d="M821.25,175.75 L1071.25,175.75" fill="none" stroke="#3f6428" stroke-width="1.6" stroke-linejoin="round"/><circle cx="1071.25" cy="175.75" r="2.2" fill="#4f6b22" /><circle cx="1071.25" cy="175.75" r="1.1" fill="#0c0c04" /><path d="M821.25,186.25 L922.5,186.25" fill="none" stroke="#3f6428" stroke-width="1.6" stroke-linejoin="round"/><path d="M908.75,170.5 L922.5,170.5" fill="none" stroke="#3f6428" stroke-width="1.6" stroke-linejoin="round"/><circle cx="908.75" cy="170.5" r="2.2" fill="#4f6b22" /><circle cx="908.75" cy="170.5" r="1.1" fill="#0c0c04" /><path d="M903.75,181 L922.5,181" fill="none" stroke="#3f6428" stroke-width="1.6" stroke-linejoin="round"/><circle cx="903.75" cy="181" r="2.2" fill="#4f6b22" /><circle cx="903.75" cy="181" r="1.1" fill="#0c0c04" /><path d="M898.25,191.5 L922.5,191.5" fill="none" stroke="#3f6428" stroke-width="1.6" stroke-linejoin="round"/><circle cx="898.25" cy="191.5" r="2.2" fill="#4f6b22" /><circle cx="898.25" cy="191.5" r="1.1" fill="#0c0c04" /><path d="M887.5,196.75 L922.5,196.75" fill="none" stroke="#3f6428" stroke-width="1.6" stroke-linejoin="round"/><circle cx="887.5" cy="196.75" r="2.2" fill="#4f6b22" /><circle cx="887.5" cy="196.75" r="1.1" fill="#0c0c04" /><path d="M845.75,212.5 L922.5,212.5" fill="none" stroke="#3f6428" stroke-width="1.6" stroke-linejoin="round"/><circle cx="845.75" cy="212.5" r="2.2" fill="#4f6b22" /><circle cx="845.75" cy="212.5" r="1.1" fill="#0c0c04" /><path d="M893,223 L922.5,223" fill="none" stroke="#3f6428" stroke-width="1.6" stroke-linejoin="round"/><circle cx="893" cy="223" r="2.2" fill="#4f6b22" /><circle cx="893" cy="223" r="1.1" fill="#0c0c04" /><path d="M913.75,244 L922.5,244" fill="none" stroke="#3f6428" stroke-width="1.6" stroke-linejoin="round"/><circle cx="913.75" cy="244" r="2.2" fill="#4f6b22" /><circle cx="913.75" cy="244" r="1.1" fill="#0c0c04" /><path d="M821.25,207.5 L830,207.5 L836.25,202 L882.5,202" fill="none" stroke="#3f6428" stroke-width="1.6" stroke-linejoin="round"/><circle cx="882.5" cy="202" r="2.2" fill="#4f6b22" /><circle cx="882.5" cy="202" r="1.1" fill="#0c0c04" /><path d="M821.25,212.5 L830,212.5 L836.25,207.5 L922.5,207.5" fill="none" stroke="#3f6428" stroke-width="1.6" stroke-linejoin="round"/><path d="M815,165.5 L818,160" fill="none" stroke="#3f6428" stroke-width="1.6" stroke-linejoin="round"/><circle cx="815" cy="165.5" r="2.2" fill="#4f6b22" /><circle cx="815" cy="165.5" r="1.1" fill="#0c0c04" /><path d="M830.5,165.5 L833.5,160" fill="none" stroke="#3f6428" stroke-width="1.6" stroke-linejoin="round"/><circle cx="830.5" cy="165.5" r="2.2" fill="#4f6b22" /><circle cx="830.5" cy="165.5" r="1.1" fill="#0c0c04" /><path d="M972.5,165.5 L975.5,160" fill="none" stroke="#3f6428" stroke-width="1.6" stroke-linejoin="round"/><circle cx="972.5" cy="165.5" r="2.2" fill="#4f6b22" /><circle cx="972.5" cy="165.5" r="1.1" fill="#0c0c04" /><path d="M988,165.5 L991,160" fill="none" stroke="#3f6428" stroke-width="1.6" stroke-linejoin="round"/><circle cx="988" cy="165.5" r="2.2" fill="#4f6b22" /><circle cx="988" cy="165.5" r="1.1" fill="#0c0c04" /><path d="M815,302 L818,296.5" fill="none" stroke="#3f6428" stroke-width="1.6" stroke-linejoin="round"/><circle cx="815" cy="302" r="2.2" fill="#4f6b22" /><circle cx="815" cy="302" r="1.1" fill="#0c0c04" /><path d="M830.5,302 L833.5,296.5" fill="none" stroke="#3f6428" stroke-width="1.6" stroke-linejoin="round"/><circle cx="830.5" cy="302" r="2.2" fill="#4f6b22" /><circle cx="830.5" cy="302" r="1.1" fill="#0c0c04" /><path d="M972.5,302 L975.5,296.5" fill="none" stroke="#3f6428" stroke-width="1.6" stroke-linejoin="round"/><circle cx="972.5" cy="302" r="2.2" fill="#4f6b22" /><circle cx="972.5" cy="302" r="1.1" fill="#0c0c04" /><path d="M988,302 L991,296.5" fill="none" stroke="#3f6428" stroke-width="1.6" stroke-linejoin="round"/><circle cx="988" cy="302" r="2.2" fill="#4f6b22" /><circle cx="988" cy="302" r="1.1" fill="#0c0c04" /><path d="M980,191.5 L987.5,191.5 L993.75,196.75 L1290,196.75" fill="none" stroke="#3f6428" stroke-width="1.6" stroke-linejoin="round"/><path d="M980,207.5 L1012.5,207.5 L1018.75,212.5 L1210,212.5 L1225,227.5 L1250,227.5" fill="none" stroke="#3f6428" stroke-width="1.6" stroke-linejoin="round"/><path d="M1019.25,207.5 L1118.75,207.5" fill="none" stroke="#3f6428" stroke-width="1.6" stroke-linejoin="round"/><circle cx="1019.25" cy="207.5" r="2.2" fill="#4f6b22" /><circle cx="1019.25" cy="207.5" r="1.1" fill="#0c0c04" /><circle cx="1118.75" cy="207.5" r="2.2" fill="#4f6b22" /><circle cx="1118.75" cy="207.5" r="1.1" fill="#0c0c04" /><path d="M1072.5,202 L1250,202" fill="none" stroke="#3f6428" stroke-width="1.6" stroke-linejoin="round"/><circle cx="1072.5" cy="202" r="2.2" fill="#4f6b22" /><circle cx="1072.5" cy="202" r="1.1" fill="#0c0c04" /><path d="M987.5,217.75 L980,217.75" fill="none" stroke="#3f6428" stroke-width="1.6" stroke-linejoin="round"/><circle cx="987.5" cy="217.75" r="2.2" fill="#4f6b22" /><circle cx="987.5" cy="217.75" r="1.1" fill="#0c0c04" /><path d="M1066.25,186.25 L1076.25,183.75" fill="none" stroke="#3f6428" stroke-width="1.6" stroke-linejoin="round"/><circle cx="1066.25" cy="186.25" r="2.2" fill="#4f6b22" /><circle cx="1066.25" cy="186.25" r="1.1" fill="#0c0c04" /><path d="M1061.25,191.5 L1076.25,191.5" fill="none" stroke="#3f6428" stroke-width="1.6" stroke-linejoin="round"/><circle cx="1061.25" cy="191.5" r="2.2" fill="#4f6b22" /><circle cx="1061.25" cy="191.5" r="1.1" fill="#0c0c04" /><path d="M1119.5,191.5 L1110,191.5" fill="none" stroke="#3f6428" stroke-width="1.6" stroke-linejoin="round"/><circle cx="1119.5" cy="191.5" r="2.2" fill="#4f6b22" /><circle cx="1119.5" cy="191.5" r="1.1" fill="#0c0c04" /><path d="M1071.75,228.25 L1077,228.25" fill="none" stroke="#3f6428" stroke-width="1.6" stroke-linejoin="round"/><circle cx="1071.75" cy="228.25" r="2.2" fill="#4f6b22" /><circle cx="1071.75" cy="228.25" r="1.1" fill="#0c0c04" /><path d="M1069.25,236.25 L1077,236.25" fill="none" stroke="#3f6428" stroke-width="1.6" stroke-linejoin="round"/><circle cx="1069.25" cy="236.25" r="2.2" fill="#4f6b22" /><circle cx="1069.25" cy="236.25" r="1.1" fill="#0c0c04" /><path d="M1066.25,245 L1077,245" fill="none" stroke="#3f6428" stroke-width="1.6" stroke-linejoin="round"/><circle cx="1066.25" cy="245" r="2.2" fill="#4f6b22" /><circle cx="1066.25" cy="245" r="1.1" fill="#0c0c04" /><path d="M1023.75,254.5 L1093.75,254.5 L1100,249.25" fill="none" stroke="#3f6428" stroke-width="1.6" stroke-linejoin="round"/><circle cx="1023.75" cy="254.5" r="2.2" fill="#4f6b22" /><circle cx="1023.75" cy="254.5" r="1.1" fill="#0c0c04" /><path d="M821.25,312.5 L845.75,312.5" fill="none" stroke="#3f6428" stroke-width="1.6" stroke-linejoin="round"/><circle cx="845.75" cy="312.5" r="2.2" fill="#4f6b22" /><circle cx="845.75" cy="312.5" r="1.1" fill="#0c0c04" /><path d="M821.25,317.5 L825,317.5" fill="none" stroke="#3f6428" stroke-width="1.6" stroke-linejoin="round"/><circle cx="825" cy="317.5" r="2.2" fill="#4f6b22" /><circle cx="825" cy="317.5" r="1.1" fill="#0c0c04" /><path d="M821.25,323 L922.5,323" fill="none" stroke="#3f6428" stroke-width="1.6" stroke-linejoin="round"/><path d="M821.25,333.25 L922.5,333.25" fill="none" stroke="#3f6428" stroke-width="1.6" stroke-linejoin="round"/><path d="M821.25,343.75 L1223.75,343.75" fill="none" stroke="#3f6428" stroke-width="1.6" stroke-linejoin="round"/><path d="M821.25,360 L825,360" fill="none" stroke="#3f6428" stroke-width="1.6" stroke-linejoin="round"/><circle cx="825" cy="360" r="2.2" fill="#4f6b22" /><circle cx="825" cy="360" r="1.1" fill="#0c0c04" /><path d="M913.75,307 L922.5,307" fill="none" stroke="#3f6428" stroke-width="1.6" stroke-linejoin="round"/><circle cx="913.75" cy="307" r="2.2" fill="#4f6b22" /><circle cx="913.75" cy="307" r="1.1" fill="#0c0c04" /><path d="M918.75,317.5 L922.5,317.5" fill="none" stroke="#3f6428" stroke-width="1.6" stroke-linejoin="round"/><circle cx="918.75" cy="317.5" r="2.2" fill="#4f6b22" /><circle cx="918.75" cy="317.5" r="1.1" fill="#0c0c04" /><path d="M980,328 L1061.25,328" fill="none" stroke="#3f6428" stroke-width="1.6" stroke-linejoin="round"/><circle cx="1061.25" cy="328" r="2.2" fill="#4f6b22" /><circle cx="1061.25" cy="328" r="1.1" fill="#0c0c04" /><path d="M980,333.25 L1066.25,333.25" fill="none" stroke="#3f6428" stroke-width="1.6" stroke-linejoin="round"/><circle cx="1066.25" cy="333.25" r="2.2" fill="#4f6b22" /><circle cx="1066.25" cy="333.25" r="1.1" fill="#0c0c04" /><path d="M1060,196.75 L1146.25,196.75" fill="none" stroke="#3f6428" stroke-width="1.6" stroke-linejoin="round"/><circle cx="1146.25" cy="196.75" r="2.2" fill="#4f6b22" /><circle cx="1146.25" cy="196.75" r="1.1" fill="#0c0c04" /><path d="M1060,207.5 L1119.25,207.5" fill="none" stroke="#3f6428" stroke-width="1.6" stroke-linejoin="round"/><circle cx="1119.25" cy="207.5" r="2.2" fill="#4f6b22" /><circle cx="1119.25" cy="207.5" r="1.1" fill="#0c0c04" /><path d="M1072,202 L1232.5,202" fill="none" stroke="#3f6428" stroke-width="1.6" stroke-linejoin="round"/><circle cx="1072" cy="202" r="2.2" fill="#4f6b22" /><circle cx="1072" cy="202" r="1.1" fill="#0c0c04" /><path d="M1197.5,254.5 L1223.75,254.5" fill="none" stroke="#3f6428" stroke-width="1.6" stroke-linejoin="round"/><circle cx="1197.5" cy="254.5" r="2.2" fill="#4f6b22" /><circle cx="1197.5" cy="254.5" r="1.1" fill="#0c0c04" /><path d="M1192.5,275.5 L1223.75,275.5" fill="none" stroke="#3f6428" stroke-width="1.6" stroke-linejoin="round"/><circle cx="1192.5" cy="275.5" r="2.2" fill="#4f6b22" /><circle cx="1192.5" cy="275.5" r="1.1" fill="#0c0c04" /><path d="M1103,286.25 L1212.5,286.25" fill="none" stroke="#3f6428" stroke-width="1.6" stroke-linejoin="round"/><circle cx="1103" cy="286.25" r="2.2" fill="#4f6b22" /><circle cx="1103" cy="286.25" r="1.1" fill="#0c0c04" /><circle cx="1212.5" cy="286.25" r="2.2" fill="#4f6b22" /><circle cx="1212.5" cy="286.25" r="1.1" fill="#0c0c04" /><path d="M1108.25,291.5 L1207.5,291.5" fill="none" stroke="#3f6428" stroke-width="1.6" stroke-linejoin="round"/><circle cx="1108.25" cy="291.5" r="2.2" fill="#4f6b22" /><circle cx="1108.25" cy="291.5" r="1.1" fill="#0c0c04" /><circle cx="1207.5" cy="291.5" r="2.2" fill="#4f6b22" /><circle cx="1207.5" cy="291.5" r="1.1" fill="#0c0c04" /><path d="M1113.75,296.75 L1202.5,296.75" fill="none" stroke="#3f6428" stroke-width="1.6" stroke-linejoin="round"/><circle cx="1113.75" cy="296.75" r="2.2" fill="#4f6b22" /><circle cx="1113.75" cy="296.75" r="1.1" fill="#0c0c04" /><circle cx="1202.5" cy="296.75" r="2.2" fill="#4f6b22" /><circle cx="1202.5" cy="296.75" r="1.1" fill="#0c0c04" /><path d="M1119.25,302 L1197.5,302" fill="none" stroke="#3f6428" stroke-width="1.6" stroke-linejoin="round"/><circle cx="1119.25" cy="302" r="2.2" fill="#4f6b22" /><circle cx="1119.25" cy="302" r="1.1" fill="#0c0c04" /><circle cx="1197.5" cy="302" r="2.2" fill="#4f6b22" /><circle cx="1197.5" cy="302" r="1.1" fill="#0c0c04" /><path d="M1124.5,307.25 L1192.5,307.25" fill="none" stroke="#3f6428" stroke-width="1.6" stroke-linejoin="round"/><circle cx="1124.5" cy="307.25" r="2.2" fill="#4f6b22" /><circle cx="1124.5" cy="307.25" r="1.1" fill="#0c0c04" /><circle cx="1192.5" cy="307.25" r="2.2" fill="#4f6b22" /><circle cx="1192.5" cy="307.25" r="1.1" fill="#0c0c04" /><path d="M1130,312.5 L1198.75,312.5 L1216.25,295 L1223.75,295" fill="none" stroke="#3f6428" stroke-width="1.6" stroke-linejoin="round"/><circle cx="1130" cy="312.5" r="2.2" fill="#4f6b22" /><circle cx="1130" cy="312.5" r="1.1" fill="#0c0c04" /><path d="M1135,338.75 L1223.75,338.75" fill="none" stroke="#3f6428" stroke-width="1.6" stroke-linejoin="round"/><circle cx="1135" cy="338.75" r="2.2" fill="#4f6b22" /><circle cx="1135" cy="338.75" r="1.1" fill="#0c0c04" /><path d="M1140,360 L1223.75,360" fill="none" stroke="#3f6428" stroke-width="1.6" stroke-linejoin="round"/><circle cx="1140" cy="360" r="2.2" fill="#4f6b22" /><circle cx="1140" cy="360" r="1.1" fill="#0c0c04" /><path d="M1062,328 L1062,328" fill="none" stroke="#3f6428" stroke-width="1.6" stroke-linejoin="round"/><circle cx="1062" cy="328" r="2.2" fill="#4f6b22" /><circle cx="1062" cy="328" r="1.1" fill="#0c0c04" /><path d="M1067,333.25 L1067,333.25" fill="none" stroke="#3f6428" stroke-width="1.6" stroke-linejoin="round"/><circle cx="1067" cy="333.25" r="2.2" fill="#4f6b22" /><circle cx="1067" cy="333.25" r="1.1" fill="#0c0c04" /><path d="M1413.75,210 L1432.5,210 L1440,217.5" fill="none" stroke="#3f6428" stroke-width="1.6" stroke-linejoin="round"/><path d="M1413.75,254.5 L1435,254.5 L1451.25,238.75" fill="none" stroke="#3f6428" stroke-width="1.6" stroke-linejoin="round"/><path d="M1413.75,296.75 L1460,296.75" fill="none" stroke="#3f6428" stroke-width="1.6" stroke-linejoin="round"/><circle cx="1460" cy="296.75" r="2.2" fill="#4f6b22" /><circle cx="1460" cy="296.75" r="1.1" fill="#0c0c04" /><path d="M1413.75,338.75 L1455,338.75" fill="none" stroke="#3f6428" stroke-width="1.6" stroke-linejoin="round"/><circle cx="1455" cy="338.75" r="2.2" fill="#4f6b22" /><circle cx="1455" cy="338.75" r="1.1" fill="#0c0c04" /><path d="M692.5,370.5 L709.5,370.5" fill="none" stroke="#3f6428" stroke-width="1.6" stroke-linejoin="round"/><circle cx="709.5" cy="370.5" r="2.2" fill="#4f6b22" /><circle cx="709.5" cy="370.5" r="1.1" fill="#0c0c04" /><path d="M692.5,391.25 L715,391.25" fill="none" stroke="#3f6428" stroke-width="1.6" stroke-linejoin="round"/><circle cx="715" cy="391.25" r="2.2" fill="#4f6b22" /><circle cx="715" cy="391.25" r="1.1" fill="#0c0c04" /><path d="M692.5,412.25 L720,412.25" fill="none" stroke="#3f6428" stroke-width="1.6" stroke-linejoin="round"/><circle cx="720" cy="412.25" r="2.2" fill="#4f6b22" /><circle cx="720" cy="412.25" r="1.1" fill="#0c0c04" /><path d="M692.5,433 L725,433" fill="none" stroke="#3f6428" stroke-width="1.6" stroke-linejoin="round"/><circle cx="725" cy="433" r="2.2" fill="#4f6b22" /><circle cx="725" cy="433" r="1.1" fill="#0c0c04" /><path d="M692.5,548.75 L740.5,548.75" fill="none" stroke="#3f6428" stroke-width="1.6" stroke-linejoin="round"/><circle cx="740.5" cy="548.75" r="2.2" fill="#4f6b22" /><circle cx="740.5" cy="548.75" r="1.1" fill="#0c0c04" /><path d="M746.25,433 L765,433" fill="none" stroke="#3f6428" stroke-width="1.6" stroke-linejoin="round"/><circle cx="746.25" cy="433" r="2.2" fill="#4f6b22" /><circle cx="746.25" cy="433" r="1.1" fill="#0c0c04" /><path d="M740.5,443.75 L765,443.75" fill="none" stroke="#3f6428" stroke-width="1.6" stroke-linejoin="round"/><circle cx="740.5" cy="443.75" r="2.2" fill="#4f6b22" /><circle cx="740.5" cy="443.75" r="1.1" fill="#0c0c04" /><path d="M730.75,454.25 L765,454.25" fill="none" stroke="#3f6428" stroke-width="1.6" stroke-linejoin="round"/><circle cx="730.75" cy="454.25" r="2.2" fill="#4f6b22" /><circle cx="730.75" cy="454.25" r="1.1" fill="#0c0c04" /><path d="M736.25,459.5 L765,459.5" fill="none" stroke="#3f6428" stroke-width="1.6" stroke-linejoin="round"/><circle cx="736.25" cy="459.5" r="2.2" fill="#4f6b22" /><circle cx="736.25" cy="459.5" r="1.1" fill="#0c0c04" /><path d="M692.5,454.25 L713.75,454.25 L725.5,465.5 L765,465.5" fill="none" stroke="#3f6428" stroke-width="1.6" stroke-linejoin="round"/><path d="M692.5,475 L718.75,475 L725.5,469.5" fill="none" stroke="#3f6428" stroke-width="1.6" stroke-linejoin="round"/><path d="M730.75,470 L730.75,470" fill="none" stroke="#3f6428" stroke-width="1.6" stroke-linejoin="round"/><circle cx="730.75" cy="470" r="2.2" fill="#4f6b22" /><circle cx="730.75" cy="470" r="1.1" fill="#0c0c04" /><path d="M725,475 L765,475" fill="none" stroke="#3f6428" stroke-width="1.6" stroke-linejoin="round"/><circle cx="725" cy="475" r="2.2" fill="#4f6b22" /><circle cx="725" cy="475" r="1.1" fill="#0c0c04" /><path d="M719.5,485.75 L765,485.75" fill="none" stroke="#3f6428" stroke-width="1.6" stroke-linejoin="round"/><circle cx="719.5" cy="485.75" r="2.2" fill="#4f6b22" /><circle cx="719.5" cy="485.75" r="1.1" fill="#0c0c04" /><path d="M736.25,491.25 L736.25,491.25" fill="none" stroke="#3f6428" stroke-width="1.6" stroke-linejoin="round"/><circle cx="736.25" cy="491.25" r="2.2" fill="#4f6b22" /><circle cx="736.25" cy="491.25" r="1.1" fill="#0c0c04" /><path d="M692.5,496.25 L707.5,496.25 L713.75,491.25 L732.5,491.25" fill="none" stroke="#3f6428" stroke-width="1.6" stroke-linejoin="round"/><path d="M714.5,496.25 L765,496.25" fill="none" stroke="#3f6428" stroke-width="1.6" stroke-linejoin="round"/><circle cx="714.5" cy="496.25" r="2.2" fill="#4f6b22" /><circle cx="714.5" cy="496.25" r="1.1" fill="#0c0c04" /><path d="M746.25,501.25 L746.25,501.25" fill="none" stroke="#3f6428" stroke-width="1.6" stroke-linejoin="round"/><circle cx="746.25" cy="501.25" r="2.2" fill="#4f6b22" /><circle cx="746.25" cy="501.25" r="1.1" fill="#0c0c04" /><path d="M709.25,506.75 L765,506.75" fill="none" stroke="#3f6428" stroke-width="1.6" stroke-linejoin="round"/><circle cx="709.25" cy="506.75" r="2.2" fill="#4f6b22" /><circle cx="709.25" cy="506.75" r="1.1" fill="#0c0c04" /><path d="M692.5,517.5 L697.5,512.5 L765,512.5" fill="none" stroke="#3f6428" stroke-width="1.6" stroke-linejoin="round"/><path d="M703.75,517.5 L765,517.5" fill="none" stroke="#3f6428" stroke-width="1.6" stroke-linejoin="round"/><circle cx="703.75" cy="517.5" r="2.2" fill="#4f6b22" /><circle cx="703.75" cy="517.5" r="1.1" fill="#0c0c04" /><path d="M692.5,522.5 L765,522.5" fill="none" stroke="#3f6428" stroke-width="1.6" stroke-linejoin="round"/><path d="M703.75,528 L765,528" fill="none" stroke="#3f6428" stroke-width="1.6" stroke-linejoin="round"/><circle cx="703.75" cy="528" r="2.2" fill="#4f6b22" /><circle cx="703.75" cy="528" r="1.1" fill="#0c0c04" /><path d="M692.5,538.75 L698.75,533.75 L765,533.75" fill="none" stroke="#3f6428" stroke-width="1.6" stroke-linejoin="round"/><path d="M692.5,560 L700,553.75 L765,553.75" fill="none" stroke="#3f6428" stroke-width="1.6" stroke-linejoin="round"/><path d="M756.25,570 L765,570" fill="none" stroke="#3f6428" stroke-width="1.6" stroke-linejoin="round"/><circle cx="756.25" cy="570" r="2.2" fill="#4f6b22" /><circle cx="756.25" cy="570" r="1.1" fill="#0c0c04" /><path d="M756.25,370 L765,370" fill="none" stroke="#3f6428" stroke-width="1.6" stroke-linejoin="round"/><circle cx="756.25" cy="370" r="2.2" fill="#4f6b22" /><circle cx="756.25" cy="370" r="1.1" fill="#0c0c04" /><path d="M825,359.5 L821.25,359.5" fill="none" stroke="#3f6428" stroke-width="1.6" stroke-linejoin="round"/><circle cx="825" cy="359.5" r="2.2" fill="#4f6b22" /><circle cx="825" cy="359.5" r="1.1" fill="#0c0c04" /><path d="M982.5,370 L978.75,370" fill="none" stroke="#3f6428" stroke-width="1.6" stroke-linejoin="round"/><circle cx="982.5" cy="370" r="2.2" fill="#4f6b22" /><circle cx="982.5" cy="370" r="1.1" fill="#0c0c04" /><path d="M930,380.5 L930,373.75" fill="none" stroke="#3f6428" stroke-width="1.6" stroke-linejoin="round"/><circle cx="930" cy="380.5" r="2.2" fill="#4f6b22" /><circle cx="930" cy="380.5" r="1.1" fill="#0c0c04" /><path d="M858,433 L865.5,433 L871.5,427.75 L922,427.75" fill="none" stroke="#3f6428" stroke-width="1.6" stroke-linejoin="round"/><path d="M858,438.25 L865.5,438.25 L871.5,433 L922,433" fill="none" stroke="#3f6428" stroke-width="1.6" stroke-linejoin="round"/><path d="M858,443.54 L865.5,443.54 L871.5,438.29 L922,438.29" fill="none" stroke="#3f6428" stroke-width="1.6" stroke-linejoin="round"/><path d="M858,448.79 L865.5,448.79 L871.5,443.54 L922,443.54" fill="none" stroke="#3f6428" stroke-width="1.6" stroke-linejoin="round"/><path d="M858,454.08 L865.5,454.08 L871.5,448.83 L922,448.83" fill="none" stroke="#3f6428" stroke-width="1.6" stroke-linejoin="round"/><path d="M858,459.33 L865.5,459.33 L871.5,454.08 L922,454.08" fill="none" stroke="#3f6428" stroke-width="1.6" stroke-linejoin="round"/><path d="M858,464.62 L865.5,464.62 L871.5,459.37 L922,459.37" fill="none" stroke="#3f6428" stroke-width="1.6" stroke-linejoin="round"/><path d="M858,469.87 L865.5,469.87 L871.5,464.62 L922,464.62" fill="none" stroke="#3f6428" stroke-width="1.6" stroke-linejoin="round"/><path d="M858,475.16 L865.5,475.16 L871.5,469.91 L922,469.91" fill="none" stroke="#3f6428" stroke-width="1.6" stroke-linejoin="round"/><path d="M858,480.41 L865.5,480.41 L871.5,475.16 L922,475.16" fill="none" stroke="#3f6428" stroke-width="1.6" stroke-linejoin="round"/><path d="M858,485.7 L865.5,485.7 L871.5,480.45 L922,480.45" fill="none" stroke="#3f6428" stroke-width="1.6" stroke-linejoin="round"/><path d="M858,490.95 L865.5,490.95 L871.5,485.7 L922,485.7" fill="none" stroke="#3f6428" stroke-width="1.6" stroke-linejoin="round"/><path d="M858,496.24 L865.5,496.24 L871.5,490.99 L922,490.99" fill="none" stroke="#3f6428" stroke-width="1.6" stroke-linejoin="round"/><path d="M858,501.49 L865.5,501.49 L871.5,496.24 L922,496.24" fill="none" stroke="#3f6428" stroke-width="1.6" stroke-linejoin="round"/><path d="M858,506.78 L865.5,506.78 L871.5,501.53 L922,501.53" fill="none" stroke="#3f6428" stroke-width="1.6" stroke-linejoin="round"/><path d="M858,512.03 L865.5,512.03 L871.5,506.78 L922,506.78" fill="none" stroke="#3f6428" stroke-width="1.6" stroke-linejoin="round"/><path d="M858,517.32 L865.5,517.32 L871.5,512.07 L922,512.07" fill="none" stroke="#3f6428" stroke-width="1.6" stroke-linejoin="round"/><path d="M858,522.57 L865.5,522.57 L871.5,517.32 L922,517.32" fill="none" stroke="#3f6428" stroke-width="1.6" stroke-linejoin="round"/><path d="M858,527.86 L865.5,527.86 L871.5,522.61 L922,522.61" fill="none" stroke="#3f6428" stroke-width="1.6" stroke-linejoin="round"/><path d="M858,533.11 L865.5,533.11 L871.5,527.86 L922,527.86" fill="none" stroke="#3f6428" stroke-width="1.6" stroke-linejoin="round"/><path d="M858,538.4 L865.5,538.4 L871.5,533.15 L922,533.15" fill="none" stroke="#3f6428" stroke-width="1.6" stroke-linejoin="round"/><path d="M858,543.65 L865.5,543.65 L871.5,538.4 L922,538.4" fill="none" stroke="#3f6428" stroke-width="1.6" stroke-linejoin="round"/><path d="M858,548.94 L865.5,548.94 L871.5,543.69 L922,543.69" fill="none" stroke="#3f6428" stroke-width="1.6" stroke-linejoin="round"/><path d="M858,554.19 L865.5,554.19 L871.5,548.94 L922,548.94" fill="none" stroke="#3f6428" stroke-width="1.6" stroke-linejoin="round"/><path d="M858,559.48 L865.5,559.48 L871.5,554.23 L922,554.23" fill="none" stroke="#3f6428" stroke-width="1.6" stroke-linejoin="round"/><path d="M858,564.73 L865.5,564.73 L871.5,559.48 L922,559.48" fill="none" stroke="#3f6428" stroke-width="1.6" stroke-linejoin="round"/><path d="M858,570.02 L865.5,570.02 L871.5,564.77 L922,564.77" fill="none" stroke="#3f6428" stroke-width="1.6" stroke-linejoin="round"/><path d="M858,575.27 L865.5,575.27 L871.5,570.02 L922,570.02" fill="none" stroke="#3f6428" stroke-width="1.6" stroke-linejoin="round"/><path d="M882.5,438 L882.5,438" fill="none" stroke="#3f6428" stroke-width="1.6" stroke-linejoin="round"/><circle cx="882.5" cy="438" r="2.2" fill="#4f6b22" /><circle cx="882.5" cy="438" r="1.1" fill="#0c0c04" /><path d="M893,454.25 L893,454.25" fill="none" stroke="#3f6428" stroke-width="1.6" stroke-linejoin="round"/><circle cx="893" cy="454.25" r="2.2" fill="#4f6b22" /><circle cx="893" cy="454.25" r="1.1" fill="#0c0c04" /><path d="M898.25,465 L898.25,465" fill="none" stroke="#3f6428" stroke-width="1.6" stroke-linejoin="round"/><circle cx="898.25" cy="465" r="2.2" fill="#4f6b22" /><circle cx="898.25" cy="465" r="1.1" fill="#0c0c04" /><path d="M903.75,475 L903.75,475" fill="none" stroke="#3f6428" stroke-width="1.6" stroke-linejoin="round"/><circle cx="903.75" cy="475" r="2.2" fill="#4f6b22" /><circle cx="903.75" cy="475" r="1.1" fill="#0c0c04" /><path d="M909.25,485.75 L909.25,485.75" fill="none" stroke="#3f6428" stroke-width="1.6" stroke-linejoin="round"/><circle cx="909.25" cy="485.75" r="2.2" fill="#4f6b22" /><circle cx="909.25" cy="485.75" r="1.1" fill="#0c0c04" /><path d="M914.25,459.5 L914.25,459.5" fill="none" stroke="#3f6428" stroke-width="1.6" stroke-linejoin="round"/><circle cx="914.25" cy="459.5" r="2.2" fill="#4f6b22" /><circle cx="914.25" cy="459.5" r="1.1" fill="#0c0c04" /><path d="M918.75,470 L918.75,470" fill="none" stroke="#3f6428" stroke-width="1.6" stroke-linejoin="round"/><circle cx="918.75" cy="470" r="2.2" fill="#4f6b22" /><circle cx="918.75" cy="470" r="1.1" fill="#0c0c04" /><path d="M861.25,496.25 L861.25,496.25" fill="none" stroke="#3f6428" stroke-width="1.6" stroke-linejoin="round"/><circle cx="861.25" cy="496.25" r="2.2" fill="#4f6b22" /><circle cx="861.25" cy="496.25" r="1.1" fill="#0c0c04" /><path d="M861.25,517 L861.25,517" fill="none" stroke="#3f6428" stroke-width="1.6" stroke-linejoin="round"/><circle cx="861.25" cy="517" r="2.2" fill="#4f6b22" /><circle cx="861.25" cy="517" r="1.1" fill="#0c0c04" /><path d="M872.5,417.5 L872.5,417.5" fill="none" stroke="#3f6428" stroke-width="1.6" stroke-linejoin="round"/><circle cx="872.5" cy="417.5" r="2.2" fill="#4f6b22" /><circle cx="872.5" cy="417.5" r="1.1" fill="#0c0c04" /><path d="M1030,417.5 L1030,417.5" fill="none" stroke="#3f6428" stroke-width="1.6" stroke-linejoin="round"/><circle cx="1030" cy="417.5" r="2.2" fill="#4f6b22" /><circle cx="1030" cy="417.5" r="1.1" fill="#0c0c04" /><path d="M851.25,428 L851.25,428" fill="none" stroke="#3f6428" stroke-width="1.6" stroke-linejoin="round"/><circle cx="851.25" cy="428" r="2.2" fill="#4f6b22" /><circle cx="851.25" cy="428" r="1.1" fill="#0c0c04" /><path d="M1008.75,428 L1008.75,428" fill="none" stroke="#3f6428" stroke-width="1.6" stroke-linejoin="round"/><circle cx="1008.75" cy="428" r="2.2" fill="#4f6b22" /><circle cx="1008.75" cy="428" r="1.1" fill="#0c0c04" /><path d="M851.25,428 L851.25,421.25" fill="none" stroke="#3f6428" stroke-width="1.6" stroke-linejoin="round"/><path d="M1008.75,428 L1008.75,421.25" fill="none" stroke="#3f6428" stroke-width="1.6" stroke-linejoin="round"/><path d="M1015,491.25 L1025,491.25" fill="none" stroke="#3f6428" stroke-width="1.6" stroke-linejoin="round"/><circle cx="1025" cy="491.25" r="2.2" fill="#4f6b22" /><circle cx="1025" cy="491.25" r="1.1" fill="#0c0c04" /><path d="M1015,496.25 L1020,496.25" fill="none" stroke="#3f6428" stroke-width="1.6" stroke-linejoin="round"/><circle cx="1020" cy="496.25" r="2.2" fill="#4f6b22" /><circle cx="1020" cy="496.25" r="1.1" fill="#0c0c04" /><path d="M1015,517.5 L1020,517.5" fill="none" stroke="#3f6428" stroke-width="1.6" stroke-linejoin="round"/><circle cx="1020" cy="517.5" r="2.2" fill="#4f6b22" /><circle cx="1020" cy="517.5" r="1.1" fill="#0c0c04" /><path d="M1015,533.75 L1040,533.75" fill="none" stroke="#3f6428" stroke-width="1.6" stroke-linejoin="round"/><circle cx="1040" cy="533.75" r="2.2" fill="#4f6b22" /><circle cx="1040" cy="533.75" r="1.1" fill="#0c0c04" /><path d="M1015,543.75 L1046.25,543.75" fill="none" stroke="#3f6428" stroke-width="1.6" stroke-linejoin="round"/><circle cx="1046.25" cy="543.75" r="2.2" fill="#4f6b22" /><circle cx="1046.25" cy="543.75" r="1.1" fill="#0c0c04" /><path d="M1015,554.5 L1051.25,554.5" fill="none" stroke="#3f6428" stroke-width="1.6" stroke-linejoin="round"/><circle cx="1051.25" cy="554.5" r="2.2" fill="#4f6b22" /><circle cx="1051.25" cy="554.5" r="1.1" fill="#0c0c04" /><path d="M1015,565 L1056.25,565" fill="none" stroke="#3f6428" stroke-width="1.6" stroke-linejoin="round"/><circle cx="1056.25" cy="565" r="2.2" fill="#4f6b22" /><circle cx="1056.25" cy="565" r="1.1" fill="#0c0c04" /><path d="M1015,528 L1060,528 L1070,538.75 L1075,538.75" fill="none" stroke="#3f6428" stroke-width="1.6" stroke-linejoin="round"/><path d="M1015,538.75 L1055,538.75 L1065,549.25 L1075,549.25" fill="none" stroke="#3f6428" stroke-width="1.6" stroke-linejoin="round"/><path d="M1015,549.25 L1052.5,549.25 L1062.5,560 L1075,560" fill="none" stroke="#3f6428" stroke-width="1.6" stroke-linejoin="round"/><path d="M1015,560 L1050,560 L1061.25,570 L1075,570" fill="none" stroke="#3f6428" stroke-width="1.6" stroke-linejoin="round"/><path d="M1015,570 L1055,570 L1061.25,576.25 L1142.5,576.25" fill="none" stroke="#3f6428" stroke-width="1.6" stroke-linejoin="round"/><path d="M1066.25,570 L1066.25,570" fill="none" stroke="#3f6428" stroke-width="1.6" stroke-linejoin="round"/><circle cx="1066.25" cy="570" r="2.2" fill="#4f6b22" /><circle cx="1066.25" cy="570" r="1.1" fill="#0c0c04" /><path d="M1045.75,501.25 L1075,501.25" fill="none" stroke="#3f6428" stroke-width="1.6" stroke-linejoin="round"/><circle cx="1045.75" cy="501.25" r="2.2" fill="#4f6b22" /><circle cx="1045.75" cy="501.25" r="1.1" fill="#0c0c04" /><path d="M1051.25,512 L1075,512" fill="none" stroke="#3f6428" stroke-width="1.6" stroke-linejoin="round"/><circle cx="1051.25" cy="512" r="2.2" fill="#4f6b22" /><circle cx="1051.25" cy="512" r="1.1" fill="#0c0c04" /><path d="M1056.25,522.5 L1075,522.5" fill="none" stroke="#3f6428" stroke-width="1.6" stroke-linejoin="round"/><circle cx="1056.25" cy="522.5" r="2.2" fill="#4f6b22" /><circle cx="1056.25" cy="522.5" r="1.1" fill="#0c0c04" /><path d="M1040.5,380.75 L1223.75,380.75" fill="none" stroke="#3f6428" stroke-width="1.6" stroke-linejoin="round"/><circle cx="1040.5" cy="380.75" r="2.2" fill="#4f6b22" /><circle cx="1040.5" cy="380.75" r="1.1" fill="#0c0c04" /><path d="M1098,443.75 L1098,443.75" fill="none" stroke="#3f6428" stroke-width="1.6" stroke-linejoin="round"/><circle cx="1098" cy="443.75" r="2.2" fill="#4f6b22" /><circle cx="1098" cy="443.75" r="1.1" fill="#0c0c04" /><path d="M1145,401.75 L1223.75,401.75" fill="none" stroke="#3f6428" stroke-width="1.6" stroke-linejoin="round"/><circle cx="1145" cy="401.75" r="2.2" fill="#4f6b22" /><circle cx="1145" cy="401.75" r="1.1" fill="#0c0c04" /><path d="M1097.5,443.75 L1223.75,443.75" fill="none" stroke="#3f6428" stroke-width="1.6" stroke-linejoin="round"/><circle cx="1097.5" cy="443.75" r="2.2" fill="#4f6b22" /><circle cx="1097.5" cy="443.75" r="1.1" fill="#0c0c04" /><path d="M1167.5,528 L1171.25,528" fill="none" stroke="#3f6428" stroke-width="1.6" stroke-linejoin="round"/><circle cx="1171.25" cy="528" r="2.2" fill="#4f6b22" /><circle cx="1171.25" cy="528" r="1.1" fill="#0c0c04" /><path d="M1167.5,533.25 L1177,533.25" fill="none" stroke="#3f6428" stroke-width="1.6" stroke-linejoin="round"/><circle cx="1177" cy="533.25" r="2.2" fill="#4f6b22" /><circle cx="1177" cy="533.25" r="1.1" fill="#0c0c04" /><path d="M1167.5,538.5 L1182.5,538.5" fill="none" stroke="#3f6428" stroke-width="1.6" stroke-linejoin="round"/><circle cx="1182.5" cy="538.5" r="2.2" fill="#4f6b22" /><circle cx="1182.5" cy="538.5" r="1.1" fill="#0c0c04" /><path d="M1167.5,543.75 L1187.5,543.75" fill="none" stroke="#3f6428" stroke-width="1.6" stroke-linejoin="round"/><circle cx="1187.5" cy="543.75" r="2.2" fill="#4f6b22" /><circle cx="1187.5" cy="543.75" r="1.1" fill="#0c0c04" /><path d="M1167.5,559.5 L1187.5,559.5" fill="none" stroke="#3f6428" stroke-width="1.6" stroke-linejoin="round"/><circle cx="1187.5" cy="559.5" r="2.2" fill="#4f6b22" /><circle cx="1187.5" cy="559.5" r="1.1" fill="#0c0c04" /><path d="M1167.5,564.75 L1182.5,564.75" fill="none" stroke="#3f6428" stroke-width="1.6" stroke-linejoin="round"/><circle cx="1182.5" cy="564.75" r="2.2" fill="#4f6b22" /><circle cx="1182.5" cy="564.75" r="1.1" fill="#0c0c04" /><path d="M1167.5,570 L1177,570" fill="none" stroke="#3f6428" stroke-width="1.6" stroke-linejoin="round"/><circle cx="1177" cy="570" r="2.2" fill="#4f6b22" /><circle cx="1177" cy="570" r="1.1" fill="#0c0c04" /><path d="M1167.5,575 L1171.25,575" fill="none" stroke="#3f6428" stroke-width="1.6" stroke-linejoin="round"/><circle cx="1171.25" cy="575" r="2.2" fill="#4f6b22" /><circle cx="1171.25" cy="575" r="1.1" fill="#0c0c04" /><path d="M1160,470 L1160,463.75" fill="none" stroke="#3f6428" stroke-width="1.6" stroke-linejoin="round"/><circle cx="1160" cy="470" r="2.2" fill="#4f6b22" /><circle cx="1160" cy="470" r="1.1" fill="#0c0c04" /><path d="M1172,470 L1173.75,463.75" fill="none" stroke="#3f6428" stroke-width="1.6" stroke-linejoin="round"/><circle cx="1172" cy="470" r="2.2" fill="#4f6b22" /><circle cx="1172" cy="470" r="1.1" fill="#0c0c04" /><path d="M1413.75,548.75 L1445,548.75" fill="none" stroke="#3f6428" stroke-width="1.6" stroke-linejoin="round"/><circle cx="1445" cy="548.75" r="2.2" fill="#4f6b22" /><circle cx="1445" cy="548.75" r="1.1" fill="#0c0c04" /><path d="M1413.75,570 L1450,570" fill="none" stroke="#3f6428" stroke-width="1.6" stroke-linejoin="round"/><circle cx="1450" cy="570" r="2.2" fill="#4f6b22" /><circle cx="1450" cy="570" r="1.1" fill="#0c0c04" /><path d="M1066.25,570 L1073.75,570" fill="none" stroke="#3f6428" stroke-width="1.6" stroke-linejoin="round"/><circle cx="1066.25" cy="570" r="2.2" fill="#4f6b22" /><circle cx="1066.25" cy="570" r="1.1" fill="#0c0c04" /><path d="M630,595.8 L830,595.8" fill="none" stroke="#3f6428" stroke-width="1.6" stroke-linejoin="round"/><circle cx="630" cy="595.8" r="2.2" fill="#4f6b22" /><circle cx="630" cy="595.8" r="1.1" fill="#0c0c04" /><circle cx="830" cy="595.8" r="2.2" fill="#4f6b22" /><circle cx="830" cy="595.8" r="1.1" fill="#0c0c04" /><path d="M625.4,601.25 L825,601.25" fill="none" stroke="#3f6428" stroke-width="1.6" stroke-linejoin="round"/><circle cx="625.4" cy="601.25" r="2.2" fill="#4f6b22" /><circle cx="625.4" cy="601.25" r="1.1" fill="#0c0c04" /><circle cx="825" cy="601.25" r="2.2" fill="#4f6b22" /><circle cx="825" cy="601.25" r="1.1" fill="#0c0c04" /><path d="M620,606.7 L820,606.7" fill="none" stroke="#3f6428" stroke-width="1.6" stroke-linejoin="round"/><circle cx="620" cy="606.7" r="2.2" fill="#4f6b22" /><circle cx="620" cy="606.7" r="1.1" fill="#0c0c04" /><circle cx="820" cy="606.7" r="2.2" fill="#4f6b22" /><circle cx="820" cy="606.7" r="1.1" fill="#0c0c04" /><path d="M609,611.9 L814.6,611.9" fill="none" stroke="#3f6428" stroke-width="1.6" stroke-linejoin="round"/><circle cx="609" cy="611.9" r="2.2" fill="#4f6b22" /><circle cx="609" cy="611.9" r="1.1" fill="#0c0c04" /><circle cx="814.6" cy="611.9" r="2.2" fill="#4f6b22" /><circle cx="814.6" cy="611.9" r="1.1" fill="#0c0c04" /><path d="M604,617 L809,617" fill="none" stroke="#3f6428" stroke-width="1.6" stroke-linejoin="round"/><circle cx="604" cy="617" r="2.2" fill="#4f6b22" /><circle cx="604" cy="617" r="1.1" fill="#0c0c04" /><circle cx="809" cy="617" r="2.2" fill="#4f6b22" /><circle cx="809" cy="617" r="1.1" fill="#0c0c04" /><path d="M583,622.5 L782.7,622.5" fill="none" stroke="#3f6428" stroke-width="1.6" stroke-linejoin="round"/><circle cx="583" cy="622.5" r="2.2" fill="#4f6b22" /><circle cx="583" cy="622.5" r="1.1" fill="#0c0c04" /><circle cx="782.7" cy="622.5" r="2.2" fill="#4f6b22" /><circle cx="782.7" cy="622.5" r="1.1" fill="#0c0c04" /><path d="M593.75,627.7 L788,627.7" fill="none" stroke="#3f6428" stroke-width="1.6" stroke-linejoin="round"/><circle cx="593.75" cy="627.7" r="2.2" fill="#4f6b22" /><circle cx="593.75" cy="627.7" r="1.1" fill="#0c0c04" /><circle cx="788" cy="627.7" r="2.2" fill="#4f6b22" /><circle cx="788" cy="627.7" r="1.1" fill="#0c0c04" /><path d="M599,633 L793.5,633" fill="none" stroke="#3f6428" stroke-width="1.6" stroke-linejoin="round"/><circle cx="599" cy="633" r="2.2" fill="#4f6b22" /><circle cx="599" cy="633" r="1.1" fill="#0c0c04" /><circle cx="793.5" cy="633" r="2.2" fill="#4f6b22" /><circle cx="793.5" cy="633" r="1.1" fill="#0c0c04" /><path d="M615,638 L798.75,638" fill="none" stroke="#3f6428" stroke-width="1.6" stroke-linejoin="round"/><circle cx="615" cy="638" r="2.2" fill="#4f6b22" /><circle cx="615" cy="638" r="1.1" fill="#0c0c04" /><circle cx="798.75" cy="638" r="2.2" fill="#4f6b22" /><circle cx="798.75" cy="638" r="1.1" fill="#0c0c04" /><path d="M452.5,643.25 L887.5,643.25" fill="none" stroke="#3f6428" stroke-width="1.6" stroke-linejoin="round"/><circle cx="452.5" cy="643.25" r="2.2" fill="#4f6b22" /><circle cx="452.5" cy="643.25" r="1.1" fill="#0c0c04" /><circle cx="887.5" cy="643.25" r="2.2" fill="#4f6b22" /><circle cx="887.5" cy="643.25" r="1.1" fill="#0c0c04" /><path d="M746.25,695.5 L920,695.5" fill="none" stroke="#3f6428" stroke-width="1.6" stroke-linejoin="round"/><circle cx="746.25" cy="695.5" r="2.2" fill="#4f6b22" /><circle cx="746.25" cy="695.5" r="1.1" fill="#0c0c04" /><path d="M735,706.25 L920,706.25" fill="none" stroke="#3f6428" stroke-width="1.6" stroke-linejoin="round"/><circle cx="735" cy="706.25" r="2.2" fill="#4f6b22" /><circle cx="735" cy="706.25" r="1.1" fill="#0c0c04" /><path d="M740.5,716.75 L920,716.75" fill="none" stroke="#3f6428" stroke-width="1.6" stroke-linejoin="round"/><circle cx="740.5" cy="716.75" r="2.2" fill="#4f6b22" /><circle cx="740.5" cy="716.75" r="1.1" fill="#0c0c04" /><path d="M913.75,732.5 L920,732.5" fill="none" stroke="#3f6428" stroke-width="1.6" stroke-linejoin="round"/><circle cx="913.75" cy="732.5" r="2.2" fill="#4f6b22" /><circle cx="913.75" cy="732.5" r="1.1" fill="#0c0c04" /><path d="M1013.75,643.25 L1261.25,643.25" fill="none" stroke="#3f6428" stroke-width="1.6" stroke-linejoin="round"/><circle cx="1261.25" cy="643.25" r="2.2" fill="#4f6b22" /><circle cx="1261.25" cy="643.25" r="1.1" fill="#0c0c04" /><path d="M1013.75,653.75 L1266.25,653.75" fill="none" stroke="#3f6428" stroke-width="1.6" stroke-linejoin="round"/><circle cx="1266.25" cy="653.75" r="2.2" fill="#4f6b22" /><circle cx="1266.25" cy="653.75" r="1.1" fill="#0c0c04" /><path d="M1013.75,664.25 L1271.75,664.25" fill="none" stroke="#3f6428" stroke-width="1.6" stroke-linejoin="round"/><circle cx="1271.75" cy="664.25" r="2.2" fill="#4f6b22" /><circle cx="1271.75" cy="664.25" r="1.1" fill="#0c0c04" /><path d="M1007,627.5 L1007,635.5" fill="none" stroke="#3f6428" stroke-width="1.6" stroke-linejoin="round"/><path d="M1030,622.5 L1030,622.5" fill="none" stroke="#3f6428" stroke-width="1.6" stroke-linejoin="round"/><circle cx="1030" cy="622.5" r="2.2" fill="#4f6b22" /><circle cx="1030" cy="622.5" r="1.1" fill="#0c0c04" /><path d="M961.25,753.25 L959.25,763.75" fill="none" stroke="#3f6428" stroke-width="1.6" stroke-linejoin="round"/><circle cx="961.25" cy="753.25" r="2.2" fill="#4f6b22" /><circle cx="961.25" cy="753.25" r="1.1" fill="#0c0c04" /><path d="M972,753.25 L970,763.75" fill="none" stroke="#3f6428" stroke-width="1.6" stroke-linejoin="round"/><circle cx="972" cy="753.25" r="2.2" fill="#4f6b22" /><circle cx="972" cy="753.25" r="1.1" fill="#0c0c04" /><path d="M987.5,753.25 L985.5,763.75" fill="none" stroke="#3f6428" stroke-width="1.6" stroke-linejoin="round"/><circle cx="987.5" cy="753.25" r="2.2" fill="#4f6b22" /><circle cx="987.5" cy="753.25" r="1.1" fill="#0c0c04" /><path d="M446.25,648.75 L446.25,656.25" fill="none" stroke="#3f6428" stroke-width="1.6" stroke-linejoin="round"/><circle cx="446.25" cy="648.75" r="2.2" fill="#4f6b22" /><circle cx="446.25" cy="648.75" r="1.1" fill="#0c0c04" /><path d="M493.75,648.75 L493.75,656.25" fill="none" stroke="#3f6428" stroke-width="1.6" stroke-linejoin="round"/><circle cx="493.75" cy="648.75" r="2.2" fill="#4f6b22" /><circle cx="493.75" cy="648.75" r="1.1" fill="#0c0c04" /><path d="M557,648.75 L557,656.25" fill="none" stroke="#3f6428" stroke-width="1.6" stroke-linejoin="round"/><circle cx="557" cy="648.75" r="2.2" fill="#4f6b22" /><circle cx="557" cy="648.75" r="1.1" fill="#0c0c04" /><path d="M572.5,648.75 L572.5,656.25" fill="none" stroke="#3f6428" stroke-width="1.6" stroke-linejoin="round"/><circle cx="572.5" cy="648.75" r="2.2" fill="#4f6b22" /><circle cx="572.5" cy="648.75" r="1.1" fill="#0c0c04" /><path d="M604.25,648.75 L604.25,656.25" fill="none" stroke="#3f6428" stroke-width="1.6" stroke-linejoin="round"/><circle cx="604.25" cy="648.75" r="2.2" fill="#4f6b22" /><circle cx="604.25" cy="648.75" r="1.1" fill="#0c0c04" /><path d="M446.25,677.5 L446.25,692" fill="none" stroke="#3f6428" stroke-width="1.6" stroke-linejoin="round"/><path d="M493.75,677.5 L493.75,692" fill="none" stroke="#3f6428" stroke-width="1.6" stroke-linejoin="round"/><path d="M562.5,668.75 L570,668.75" fill="none" stroke="#3f6428" stroke-width="1.6" stroke-linejoin="round"/><path d="M577.5,668.75 L577.5,692" fill="none" stroke="#3f6428" stroke-width="1.6" stroke-linejoin="round"/><path d="M588.75,677.5 L588.75,692" fill="none" stroke="#3f6428" stroke-width="1.6" stroke-linejoin="round"/><path d="M600,677.5 L600,692" fill="none" stroke="#3f6428" stroke-width="1.6" stroke-linejoin="round"/><path d="M393.75,685 L393.75,692" fill="none" stroke="#3f6428" stroke-width="1.6" stroke-linejoin="round"/><circle cx="393.75" cy="685" r="2.2" fill="#4f6b22" /><circle cx="393.75" cy="685" r="1.1" fill="#0c0c04" /><path d="M404.25,685 L404.25,692" fill="none" stroke="#3f6428" stroke-width="1.6" stroke-linejoin="round"/><circle cx="404.25" cy="685" r="2.2" fill="#4f6b22" /><circle cx="404.25" cy="685" r="1.1" fill="#0c0c04" /><path d="M415,685 L415,692" fill="none" stroke="#3f6428" stroke-width="1.6" stroke-linejoin="round"/><circle cx="415" cy="685" r="2.2" fill="#4f6b22" /><circle cx="415" cy="685" r="1.1" fill="#0c0c04" /><path d="M425.5,685 L425.5,692" fill="none" stroke="#3f6428" stroke-width="1.6" stroke-linejoin="round"/><circle cx="425.5" cy="685" r="2.2" fill="#4f6b22" /><circle cx="425.5" cy="685" r="1.1" fill="#0c0c04" /><path d="M436.25,685 L436.25,692" fill="none" stroke="#3f6428" stroke-width="1.6" stroke-linejoin="round"/><circle cx="436.25" cy="685" r="2.2" fill="#4f6b22" /><circle cx="436.25" cy="685" r="1.1" fill="#0c0c04" /><path d="M452,685 L452,692" fill="none" stroke="#3f6428" stroke-width="1.6" stroke-linejoin="round"/><circle cx="452" cy="685" r="2.2" fill="#4f6b22" /><circle cx="452" cy="685" r="1.1" fill="#0c0c04" /><path d="M473,685 L473,692" fill="none" stroke="#3f6428" stroke-width="1.6" stroke-linejoin="round"/><circle cx="473" cy="685" r="2.2" fill="#4f6b22" /><circle cx="473" cy="685" r="1.1" fill="#0c0c04" /><path d="M483.25,685 L483.25,692" fill="none" stroke="#3f6428" stroke-width="1.6" stroke-linejoin="round"/><circle cx="483.25" cy="685" r="2.2" fill="#4f6b22" /><circle cx="483.25" cy="685" r="1.1" fill="#0c0c04" /><path d="M546.25,685 L546.25,692" fill="none" stroke="#3f6428" stroke-width="1.6" stroke-linejoin="round"/><circle cx="546.25" cy="685" r="2.2" fill="#4f6b22" /><circle cx="546.25" cy="685" r="1.1" fill="#0c0c04" /><path d="M553,685 L553,692" fill="none" stroke="#3f6428" stroke-width="1.6" stroke-linejoin="round"/><circle cx="553" cy="685" r="2.2" fill="#4f6b22" /><circle cx="553" cy="685" r="1.1" fill="#0c0c04" /><path d="M562.5,685 L562.5,692" fill="none" stroke="#3f6428" stroke-width="1.6" stroke-linejoin="round"/><circle cx="562.5" cy="685" r="2.2" fill="#4f6b22" /><circle cx="562.5" cy="685" r="1.1" fill="#0c0c04" /><path d="M572.5,685 L572.5,692" fill="none" stroke="#3f6428" stroke-width="1.6" stroke-linejoin="round"/><circle cx="572.5" cy="685" r="2.2" fill="#4f6b22" /><circle cx="572.5" cy="685" r="1.1" fill="#0c0c04" /><path d="M583.25,685 L583.25,692" fill="none" stroke="#3f6428" stroke-width="1.6" stroke-linejoin="round"/><circle cx="583.25" cy="685" r="2.2" fill="#4f6b22" /><circle cx="583.25" cy="685" r="1.1" fill="#0c0c04" /><path d="M593.75,685 L593.75,692" fill="none" stroke="#3f6428" stroke-width="1.6" stroke-linejoin="round"/><circle cx="593.75" cy="685" r="2.2" fill="#4f6b22" /><circle cx="593.75" cy="685" r="1.1" fill="#0c0c04" /><path d="M604.25,685 L604.25,692" fill="none" stroke="#3f6428" stroke-width="1.6" stroke-linejoin="round"/><circle cx="604.25" cy="685" r="2.2" fill="#4f6b22" /><circle cx="604.25" cy="685" r="1.1" fill="#0c0c04" /><path d="M615,685 L615,692" fill="none" stroke="#3f6428" stroke-width="1.6" stroke-linejoin="round"/><circle cx="615" cy="685" r="2.2" fill="#4f6b22" /><circle cx="615" cy="685" r="1.1" fill="#0c0c04" /><path d="M383.75,732.5 L383.75,721.25" fill="none" stroke="#3f6428" stroke-width="1.6" stroke-linejoin="round"/><circle cx="383.75" cy="732.5" r="2.2" fill="#4f6b22" /><circle cx="383.75" cy="732.5" r="1.1" fill="#0c0c04" /><path d="M457,732.5 L457,721.25" fill="none" stroke="#3f6428" stroke-width="1.6" stroke-linejoin="round"/><circle cx="457" cy="732.5" r="2.2" fill="#4f6b22" /><circle cx="457" cy="732.5" r="1.1" fill="#0c0c04" /><path d="M467.5,732.5 L467.5,721.25" fill="none" stroke="#3f6428" stroke-width="1.6" stroke-linejoin="round"/><circle cx="467.5" cy="732.5" r="2.2" fill="#4f6b22" /><circle cx="467.5" cy="732.5" r="1.1" fill="#0c0c04" /><path d="M478,732.5 L478,721.25" fill="none" stroke="#3f6428" stroke-width="1.6" stroke-linejoin="round"/><circle cx="478" cy="732.5" r="2.2" fill="#4f6b22" /><circle cx="478" cy="732.5" r="1.1" fill="#0c0c04" /><path d="M488.75,732.5 L488.75,721.25" fill="none" stroke="#3f6428" stroke-width="1.6" stroke-linejoin="round"/><circle cx="488.75" cy="732.5" r="2.2" fill="#4f6b22" /><circle cx="488.75" cy="732.5" r="1.1" fill="#0c0c04" /><path d="M499.25,732.5 L499.25,721.25" fill="none" stroke="#3f6428" stroke-width="1.6" stroke-linejoin="round"/><circle cx="499.25" cy="732.5" r="2.2" fill="#4f6b22" /><circle cx="499.25" cy="732.5" r="1.1" fill="#0c0c04" /><path d="M510,732.5 L510,721.25" fill="none" stroke="#3f6428" stroke-width="1.6" stroke-linejoin="round"/><circle cx="510" cy="732.5" r="2.2" fill="#4f6b22" /><circle cx="510" cy="732.5" r="1.1" fill="#0c0c04" /><path d="M515,732.5 L515,721.25" fill="none" stroke="#3f6428" stroke-width="1.6" stroke-linejoin="round"/><circle cx="515" cy="732.5" r="2.2" fill="#4f6b22" /><circle cx="515" cy="732.5" r="1.1" fill="#0c0c04" /><path d="M525.5,732.5 L525.5,721.25" fill="none" stroke="#3f6428" stroke-width="1.6" stroke-linejoin="round"/><circle cx="525.5" cy="732.5" r="2.2" fill="#4f6b22" /><circle cx="525.5" cy="732.5" r="1.1" fill="#0c0c04" /><path d="M541.25,732.5 L541.25,721.25" fill="none" stroke="#3f6428" stroke-width="1.6" stroke-linejoin="round"/><circle cx="541.25" cy="732.5" r="2.2" fill="#4f6b22" /><circle cx="541.25" cy="732.5" r="1.1" fill="#0c0c04" /><path d="M641.25,732.5 L641.25,721.25" fill="none" stroke="#3f6428" stroke-width="1.6" stroke-linejoin="round"/><circle cx="641.25" cy="732.5" r="2.2" fill="#4f6b22" /><circle cx="641.25" cy="732.5" r="1.1" fill="#0c0c04" /><path d="M1212.5,816.25 L1220,811.25 L1408.75,811.25" fill="none" stroke="#3f6428" stroke-width="1.6" stroke-linejoin="round"/><circle cx="1408.75" cy="811.25" r="2.2" fill="#4f6b22" /><circle cx="1408.75" cy="811.25" r="1.1" fill="#0c0c04" /><path d="M1230,816.25 L1413,816.25" fill="none" stroke="#3f6428" stroke-width="1.6" stroke-linejoin="round"/><circle cx="1413" cy="816.25" r="2.2" fill="#4f6b22" /><circle cx="1413" cy="816.25" r="1.1" fill="#0c0c04" /><path d="M1440,796.25 L1440,806.25" fill="none" stroke="#3f6428" stroke-width="1.6" stroke-linejoin="round"/><path d="M1460.75,796.25 L1460.75,806.25" fill="none" stroke="#3f6428" stroke-width="1.6" stroke-linejoin="round"/><path d="M1440,823.5 L1440,860.25" fill="none" stroke="#3f6428" stroke-width="1.6" stroke-linejoin="round"/><path d="M1457.5,823.5 L1457.5,840.5" fill="none" stroke="#3f6428" stroke-width="1.6" stroke-linejoin="round"/><path d="M740,817 L746.25,817 L750,823.75" fill="none" stroke="#3f6428" stroke-width="1.6" stroke-linejoin="round"/><circle cx="740" cy="817" r="2.2" fill="#4f6b22" /><circle cx="740" cy="817" r="1.1" fill="#0c0c04" /><path d="M735,840 L741.25,840" fill="none" stroke="#3f6428" stroke-width="1.6" stroke-linejoin="round"/><circle cx="735" cy="840" r="2.2" fill="#4f6b22" /><circle cx="735" cy="840" r="1.1" fill="#0c0c04" /><path d="M763.75,827.5 L770,827.5" fill="none" stroke="#3f6428" stroke-width="1.6" stroke-linejoin="round"/><path d="M792.5,827.5 L800,827.5" fill="none" stroke="#3f6428" stroke-width="1.6" stroke-linejoin="round"/><path d="M763.75,840 L770,840" fill="none" stroke="#3f6428" stroke-width="1.6" stroke-linejoin="round"/><path d="M792.5,840 L800,840" fill="none" stroke="#3f6428" stroke-width="1.6" stroke-linejoin="round"/><path d="M763.75,852.5 L770,852.5" fill="none" stroke="#3f6428" stroke-width="1.6" stroke-linejoin="round"/><path d="M792.5,852.5 L800,852.5" fill="none" stroke="#3f6428" stroke-width="1.6" stroke-linejoin="round"/><path d="M822.5,827.5 L830,827.5" fill="none" stroke="#3f6428" stroke-width="1.6" stroke-linejoin="round"/><path d="M792.5,840 L796.25,840 L803.75,847.5 L810,852.5" fill="none" stroke="#3f6428" stroke-width="1.6" stroke-linejoin="round"/><path d="M852.5,827.5 L872.5,820 L900,820 L907.5,820 L917.5,820" fill="none" stroke="#3f6428" stroke-width="1.6" stroke-linejoin="round"/><path d="M872.5,827.5 L876.25,827.5" fill="none" stroke="#3f6428" stroke-width="1.6" stroke-linejoin="round"/><circle cx="872.5" cy="827.5" r="2.2" fill="#4f6b22" /><circle cx="872.5" cy="827.5" r="1.1" fill="#0c0c04" /><path d="M847.5,835 L852.5,840 L875,840" fill="none" stroke="#3f6428" stroke-width="1.6" stroke-linejoin="round"/><circle cx="847.5" cy="835" r="2.2" fill="#4f6b22" /><circle cx="847.5" cy="835" r="1.1" fill="#0c0c04" /><path d="M872.5,840 L872.5,840" fill="none" stroke="#3f6428" stroke-width="1.6" stroke-linejoin="round"/><circle cx="872.5" cy="840" r="2.2" fill="#4f6b22" /><circle cx="872.5" cy="840" r="1.1" fill="#0c0c04" /><path d="M872.5,852.5 L876.25,852.5" fill="none" stroke="#3f6428" stroke-width="1.6" stroke-linejoin="round"/><circle cx="872.5" cy="852.5" r="2.2" fill="#4f6b22" /><circle cx="872.5" cy="852.5" r="1.1" fill="#0c0c04" /><path d="M898.75,840 L910,840 L917.5,833.75" fill="none" stroke="#3f6428" stroke-width="1.6" stroke-linejoin="round"/><path d="M847.5,835 L847.5,867.5" fill="none" stroke="#3f6428" stroke-width="1.6" stroke-linejoin="round"/><path d="M770,877.5 L770,870 L775,866.25 L830,866.25" fill="none" stroke="#3f6428" stroke-width="1.6" stroke-linejoin="round"/><path d="M852.5,867.5 L868.75,867.5" fill="none" stroke="#3f6428" stroke-width="1.6" stroke-linejoin="round"/><path d="M893.75,842.5 L893.75,890" fill="none" stroke="#3f6428" stroke-width="1.6" stroke-linejoin="round"/><path d="M903.75,874.25 L896.25,874.25" fill="none" stroke="#3f6428" stroke-width="1.6" stroke-linejoin="round"/><circle cx="903.75" cy="874.25" r="2.2" fill="#4f6b22" /><circle cx="903.75" cy="874.25" r="1.1" fill="#0c0c04" /><path d="M851.25,885 L851.25,891.25" fill="none" stroke="#3f6428" stroke-width="1.6" stroke-linejoin="round"/><circle cx="851.25" cy="885" r="2.2" fill="#4f6b22" /><circle cx="851.25" cy="885" r="1.1" fill="#0c0c04" /><path d="M872.5,890 L868.75,896.25" fill="none" stroke="#3f6428" stroke-width="1.6" stroke-linejoin="round"/><circle cx="872.5" cy="890" r="2.2" fill="#4f6b22" /><circle cx="872.5" cy="890" r="1.1" fill="#0c0c04" /><path d="M898.75,896.25 L906.25,902.5 L910,902.5" fill="none" stroke="#3f6428" stroke-width="1.6" stroke-linejoin="round"/><path d="M982.5,902.5 L1045,902.5" fill="none" stroke="#3f6428" stroke-width="1.6" stroke-linejoin="round"/><path d="M968.75,806.25 L982.5,818.75 L982.5,847.5 L987.5,852.5" fill="none" stroke="#3f6428" stroke-width="1.6" stroke-linejoin="round"/><path d="M975,806.25 L986.25,816.25" fill="none" stroke="#3f6428" stroke-width="1.6" stroke-linejoin="round"/><path d="M984.25,806.25 L987.5,810" fill="none" stroke="#3f6428" stroke-width="1.6" stroke-linejoin="round"/><text x="1091" y="690.3" font-size="36.03" textLength="368" lengthAdjust="spacingAndGlyphs" stroke="#1e3a2b" stroke-width="0.72" fill="#f4f4f4">Neolithic Compact Flash/VGA</text><text x="1091" y="730.3" font-size="36.03" textLength="316.5" lengthAdjust="spacingAndGlyphs" stroke="#1e3a2b" stroke-width="0.72" fill="#f4f4f4">(c) nailed_barnacle 2024</text><text x="1091" y="767.5" font-size="24.44" textLength="280" lengthAdjust="spacingAndGlyphs" stroke="#1e3a2b" stroke-width="0.49" fill="#f4f4f4">(power 3.3v via USB on Pico)</text><text x="1199" y="124" font-size="12.01" textLength="244" lengthAdjust="spacingAndGlyphs" fill="#0c0c0c">Copper Keepouts shown on Dwgs layer</text><text x="212" y="196" font-size="12.57" textLength="21" lengthAdjust="spacingAndGlyphs" fill="#f4f4f4">PA0</text><text x="212" y="217.05" font-size="12.57" textLength="21" lengthAdjust="spacingAndGlyphs" fill="#f4f4f4">PA2</text><text x="212" y="238.1" font-size="12.57" textLength="21" lengthAdjust="spacingAndGlyphs" fill="#f4f4f4">PA4</text><text x="212" y="259.15" font-size="12.57" textLength="21" lengthAdjust="spacingAndGlyphs" fill="#f4f4f4">PA6</text><text x="212" y="280.2" font-size="12.57" textLength="21" lengthAdjust="spacingAndGlyphs" fill="#f4f4f4">CA1</text><text x="212" y="301.25" font-size="12.57" textLength="21" lengthAdjust="spacingAndGlyphs" fill="#f4f4f4">GND</text><text x="285" y="196" font-size="12.57" textLength="21" lengthAdjust="spacingAndGlyphs" fill="#f4f4f4">PA1</text><text x="285" y="217.05" font-size="12.57" textLength="21" lengthAdjust="spacingAndGlyphs" fill="#f4f4f4">PA3</text><text x="285" y="238.1" font-size="12.57" textLength="21" lengthAdjust="spacingAndGlyphs" fill="#f4f4f4">PA5</text><text x="285" y="259.15" font-size="12.57" textLength="21" lengthAdjust="spacingAndGlyphs" fill="#f4f4f4">PA7</text><text x="285" y="280.2" font-size="12.57" textLength="21" lengthAdjust="spacingAndGlyphs" fill="#f4f4f4">CA2</text><text x="285" y="301.25" font-size="12.57" textLength="21" lengthAdjust="spacingAndGlyphs" fill="#f4f4f4">VCC</text><text x="212" y="364.5" font-size="12.57" textLength="21" lengthAdjust="spacingAndGlyphs" fill="#f4f4f4">PB0</text><text x="212" y="385.55" font-size="12.57" textLength="21" lengthAdjust="spacingAndGlyphs" fill="#f4f4f4">PB2</text><text x="212" y="406.6" font-size="12.57" textLength="21" lengthAdjust="spacingAndGlyphs" fill="#f4f4f4">PB4</text><text x="212" y="427.65" font-size="12.57" textLength="21" lengthAdjust="spacingAndGlyphs" fill="#f4f4f4">PB6</text><text x="212" y="448.7" font-size="12.57" textLength="21" lengthAdjust="spacingAndGlyphs" fill="#f4f4f4">CB1</text><text x="212" y="469.75" font-size="12.57" textLength="21" lengthAdjust="spacingAndGlyphs" fill="#f4f4f4">GND</text><text x="285" y="364.5" font-size="12.57" textLength="21" lengthAdjust="spacingAndGlyphs" fill="#f4f4f4">PB1</text><text x="285" y="385.55" font-size="12.57" textLength="21" lengthAdjust="spacingAndGlyphs" fill="#f4f4f4">PB3</text><text x="285" y="406.6" font-size="12.57" textLength="21" lengthAdjust="spacingAndGlyphs" fill="#f4f4f4">PB5</text><text x="285" y="427.65" font-size="12.57" textLength="21" lengthAdjust="spacingAndGlyphs" fill="#f4f4f4">PB7</text><text x="285" y="448.7" font-size="12.57" textLength="21" lengthAdjust="spacingAndGlyphs" fill="#f4f4f4">CB2</text><text x="285" y="469.75" font-size="12.57" textLength="21" lengthAdjust="spacingAndGlyphs" fill="#f4f4f4">VCC</text><text x="254" y="174" font-size="12.57" textLength="9" lengthAdjust="spacingAndGlyphs" fill="#f4f4f4">J1</text><text x="251" y="344.5" font-size="12.57" textLength="13" lengthAdjust="spacingAndGlyphs" fill="#f4f4f4">J2</text><text x="404" y="157" font-size="12.57" textLength="21" lengthAdjust="spacingAndGlyphs" fill="#f4f4f4">U11</text><text x="617" y="157" font-size="12.57" textLength="14" lengthAdjust="spacingAndGlyphs" fill="#f4f4f4">U4</text><path d="M275.5,180.5 L279.3,180.5 L279.3,307 L235,307" fill="none" stroke="#f4f4f4" stroke-width="1" /><polygon points="267.5,176 278.3,180 278.3,306.5 235.8,306.5 225,301 267.5,302" fill="#0e0e0e" /><rect x="225" y="174" width="42.5" height="128" fill="#67615f" rx="2"/><polygon points="265,197.14 267.5,194.23 267.5,198.07" fill="#0c0c0c" /><path d="M267.5,195.66 L278.3,201.84" fill="none" stroke="#2c2a28" stroke-width="0.8" /><polygon points="265,219.28 267.5,216.47 267.5,220.14" fill="#0c0c0c" /><path d="M267.5,217.83 L278.3,223.69" fill="none" stroke="#2c2a28" stroke-width="0.8" /><polygon points="265,241.42 267.5,238.7 267.5,242.2" fill="#0c0c0c" /><path d="M267.5,239.99 L278.3,245.55" fill="none" stroke="#2c2a28" stroke-width="0.8" /><polygon points="265,263.56 267.5,260.94 267.5,264.27" fill="#0c0c0c" /><path d="M267.5,262.15 L278.3,267.4" fill="none" stroke="#2c2a28" stroke-width="0.8" /><polygon points="265,285.7 267.5,283.17 267.5,286.34" fill="#0c0c0c" /><path d="M267.5,284.31 L278.3,289.26" fill="none" stroke="#2c2a28" stroke-width="0.8" /><polygon points="205.25,169.5 209.25,164.2 240.25,182.8 240.25,188.6 236.25,189.1 205.25,171.5" fill="#46391f" /><polygon points="205.25,167.8 209.25,164.2 240.25,182.8 236.25,186.8" fill="#5b4a30" /><rect x="203.75" y="164" width="5.8" height="5.8" fill="#c9a868" /><rect x="204.55" y="164.8" width="4.2" height="4.2" fill="#ffe7ae" /><polygon points="227.25,169.5 231.25,164.2 262.25,182.8 262.25,188.6 258.25,189.1 227.25,171.5" fill="#46391f" /><polygon points="227.25,167.8 231.25,164.2 262.25,182.8 258.25,186.8" fill="#5b4a30" /><rect x="225.75" y="164" width="5.8" height="5.8" fill="#c9a868" /><rect x="226.55" y="164.8" width="4.2" height="4.2" fill="#ffe7ae" /><polygon points="205.25,191.9 209.25,186.6 240.25,204.32 240.25,210.12 236.25,210.62 205.25,193.9" fill="#46391f" /><polygon points="205.25,190.2 209.25,186.6 240.25,204.32 236.25,208.32" fill="#5b4a30" /><rect x="203.75" y="186.4" width="5.8" height="5.8" fill="#c9a868" /><rect x="204.55" y="187.2" width="4.2" height="4.2" fill="#ffe7ae" /><polygon points="227.25,191.9 231.25,186.6 262.25,204.32 262.25,210.12 258.25,210.62 227.25,193.9" fill="#46391f" /><polygon points="227.25,190.2 231.25,186.6 262.25,204.32 258.25,208.32" fill="#5b4a30" /><rect x="225.75" y="186.4" width="5.8" height="5.8" fill="#c9a868" /><rect x="226.55" y="187.2" width="4.2" height="4.2" fill="#ffe7ae" /><polygon points="205.25,214.3 209.25,209 240.25,225.84 240.25,231.64 236.25,232.14 205.25,216.3" fill="#46391f" /><polygon points="205.25,212.6 209.25,209 240.25,225.84 236.25,229.84" fill="#5b4a30" /><rect x="203.75" y="208.8" width="5.8" height="5.8" fill="#c9a868" /><rect x="204.55" y="209.6" width="4.2" height="4.2" fill="#ffe7ae" /><polygon points="227.25,214.3 231.25,209 262.25,225.84 262.25,231.64 258.25,232.14 227.25,216.3" fill="#46391f" /><polygon points="227.25,212.6 231.25,209 262.25,225.84 258.25,229.84" fill="#5b4a30" /><rect x="225.75" y="208.8" width="5.8" height="5.8" fill="#c9a868" /><rect x="226.55" y="209.6" width="4.2" height="4.2" fill="#ffe7ae" /><polygon points="205.25,236.7 209.25,231.4 240.25,247.35 240.25,253.15 236.25,253.65 205.25,238.7" fill="#46391f" /><polygon points="205.25,235 209.25,231.4 240.25,247.35 236.25,251.35" fill="#5b4a30" /><rect x="203.75" y="231.2" width="5.8" height="5.8" fill="#c9a868" /><rect x="204.55" y="232" width="4.2" height="4.2" fill="#ffe7ae" /><polygon points="227.25,236.7 231.25,231.4 262.25,247.35 262.25,253.15 258.25,253.65 227.25,238.7" fill="#46391f" /><polygon points="227.25,235 231.25,231.4 262.25,247.35 258.25,251.35" fill="#5b4a30" /><rect x="225.75" y="231.2" width="5.8" height="5.8" fill="#c9a868" /><rect x="226.55" y="232" width="4.2" height="4.2" fill="#ffe7ae" /><polygon points="205.25,259.1 209.25,253.8 240.25,268.87 240.25,274.67 236.25,275.17 205.25,261.1" fill="#46391f" /><polygon points="205.25,257.4 209.25,253.8 240.25,268.87 236.25,272.87" fill="#5b4a30" /><rect x="203.75" y="253.6" width="5.8" height="5.8" fill="#c9a868" /><rect x="204.55" y="254.4" width="4.2" height="4.2" fill="#ffe7ae" /><polygon points="227.25,259.1 231.25,253.8 262.25,268.87 262.25,274.67 258.25,275.17 227.25,261.1" fill="#46391f" /><polygon points="227.25,257.4 231.25,253.8 262.25,268.87 258.25,272.87" fill="#5b4a30" /><rect x="225.75" y="253.6" width="5.8" height="5.8" fill="#c9a868" /><rect x="226.55" y="254.4" width="4.2" height="4.2" fill="#ffe7ae" /><polygon points="205.25,281.5 209.25,276.2 240.25,290.39 240.25,296.19 236.25,296.69 205.25,283.5" fill="#46391f" /><polygon points="205.25,279.8 209.25,276.2 240.25,290.39 236.25,294.39" fill="#5b4a30" /><rect x="203.75" y="276" width="5.8" height="5.8" fill="#c9a868" /><rect x="204.55" y="276.8" width="4.2" height="4.2" fill="#ffe7ae" /><polygon points="227.25,281.5 231.25,276.2 262.25,290.39 262.25,296.19 258.25,296.69 227.25,283.5" fill="#46391f" /><polygon points="227.25,279.8 231.25,276.2 262.25,290.39 258.25,294.39" fill="#5b4a30" /><rect x="225.75" y="276" width="5.8" height="5.8" fill="#c9a868" /><rect x="226.55" y="276.8" width="4.2" height="4.2" fill="#ffe7ae" /><path d="M275.5,349.5 L279.3,349.5 L279.3,475.8 L235,475.8" fill="none" stroke="#f4f4f4" stroke-width="1" /><polygon points="267.5,347 278.3,349 278.3,475.3 228.84,475.3 225,472.7 267.5,473.7" fill="#0e0e0e" /><rect x="225" y="346" width="42.5" height="127.7" fill="#67615f" rx="2"/><polygon points="265,374.38 267.5,372.24 267.5,374.74" fill="#0c0c0c" /><path d="M267.5,373.1 L278.3,376.81" fill="none" stroke="#2c2a28" stroke-width="0.8" /><polygon points="265,396.55 267.5,394.5 267.5,396.84" fill="#0c0c0c" /><path d="M267.5,395.29 L278.3,398.69" fill="none" stroke="#2c2a28" stroke-width="0.8" /><polygon points="265,418.72 267.5,416.76 267.5,418.94" fill="#0c0c0c" /><path d="M267.5,417.48 L278.3,420.58" fill="none" stroke="#2c2a28" stroke-width="0.8" /><polygon points="265,440.89 267.5,439.03 267.5,441.03" fill="#0c0c0c" /><path d="M267.5,439.67 L278.3,442.46" fill="none" stroke="#2c2a28" stroke-width="0.8" /><polygon points="265,463.06 267.5,461.29 267.5,463.13" fill="#0c0c0c" /><path d="M267.5,461.87 L278.3,464.35" fill="none" stroke="#2c2a28" stroke-width="0.8" /><polygon points="205.25,348.8 209.25,343.5 240.25,355.04 240.25,360.84 236.25,361.34 205.25,350.8" fill="#46391f" /><polygon points="205.25,347.1 209.25,343.5 240.25,355.04 236.25,359.04" fill="#5b4a30" /><rect x="203.75" y="343.3" width="5.8" height="5.8" fill="#c9a868" /><rect x="204.55" y="344.1" width="4.2" height="4.2" fill="#ffe7ae" /><polygon points="227.25,348.8 231.25,343.5 262.25,355.04 262.25,360.84 258.25,361.34 227.25,350.8" fill="#46391f" /><polygon points="227.25,347.1 231.25,343.5 262.25,355.04 258.25,359.04" fill="#5b4a30" /><rect x="225.75" y="343.3" width="5.8" height="5.8" fill="#c9a868" /><rect x="226.55" y="344.1" width="4.2" height="4.2" fill="#ffe7ae" /><polygon points="205.25,371.23 209.25,365.93 240.25,376.59 240.25,382.39 236.25,382.89 205.25,373.23" fill="#46391f" /><polygon points="205.25,369.53 209.25,365.93 240.25,376.59 236.25,380.59" fill="#5b4a30" /><rect x="203.75" y="365.73" width="5.8" height="5.8" fill="#c9a868" /><rect x="204.55" y="366.53" width="4.2" height="4.2" fill="#ffe7ae" /><polygon points="227.25,371.23 231.25,365.93 262.25,376.59 262.25,382.39 258.25,382.89 227.25,373.23" fill="#46391f" /><polygon points="227.25,369.53 231.25,365.93 262.25,376.59 258.25,380.59" fill="#5b4a30" /><rect x="225.75" y="365.73" width="5.8" height="5.8" fill="#c9a868" /><rect x="226.55" y="366.53" width="4.2" height="4.2" fill="#ffe7ae" /><polygon points="205.25,393.66 209.25,388.36 240.25,398.13 240.25,403.93 236.25,404.43 205.25,395.66" fill="#46391f" /><polygon points="205.25,391.96 209.25,388.36 240.25,398.13 236.25,402.13" fill="#5b4a30" /><rect x="203.75" y="388.16" width="5.8" height="5.8" fill="#c9a868" /><rect x="204.55" y="388.96" width="4.2" height="4.2" fill="#ffe7ae" /><polygon points="227.25,393.66 231.25,388.36 262.25,398.13 262.25,403.93 258.25,404.43 227.25,395.66" fill="#46391f" /><polygon points="227.25,391.96 231.25,388.36 262.25,398.13 258.25,402.13" fill="#5b4a30" /><rect x="225.75" y="388.16" width="5.8" height="5.8" fill="#c9a868" /><rect x="226.55" y="388.96" width="4.2" height="4.2" fill="#ffe7ae" /><polygon points="205.25,416.09 209.25,410.79 240.25,419.68 240.25,425.48 236.25,425.98 205.25,418.09" fill="#46391f" /><polygon points="205.25,414.39 209.25,410.79 240.25,419.68 236.25,423.68" fill="#5b4a30" /><rect x="203.75" y="410.59" width="5.8" height="5.8" fill="#c9a868" /><rect x="204.55" y="411.39" width="4.2" height="4.2" fill="#ffe7ae" /><polygon points="227.25,416.09 231.25,410.79 262.25,419.68 262.25,425.48 258.25,425.98 227.25,418.09" fill="#46391f" /><polygon points="227.25,414.39 231.25,410.79 262.25,419.68 258.25,423.68" fill="#5b4a30" /><rect x="225.75" y="410.59" width="5.8" height="5.8" fill="#c9a868" /><rect x="226.55" y="411.39" width="4.2" height="4.2" fill="#ffe7ae" /><polygon points="205.25,438.52 209.25,433.22 240.25,441.23 240.25,447.03 236.25,447.53 205.25,440.52" fill="#46391f" /><polygon points="205.25,436.82 209.25,433.22 240.25,441.23 236.25,445.23" fill="#5b4a30" /><rect x="203.75" y="433.02" width="5.8" height="5.8" fill="#c9a868" /><rect x="204.55" y="433.82" width="4.2" height="4.2" fill="#ffe7ae" /><polygon points="227.25,438.52 231.25,433.22 262.25,441.23 262.25,447.03 258.25,447.53 227.25,440.52" fill="#46391f" /><polygon points="227.25,436.82 231.25,433.22 262.25,441.23 258.25,445.23" fill="#5b4a30" /><rect x="225.75" y="433.02" width="5.8" height="5.8" fill="#c9a868" /><rect x="226.55" y="433.82" width="4.2" height="4.2" fill="#ffe7ae" /><polygon points="205.25,460.95 209.25,455.65 240.25,462.78 240.25,468.58 236.25,469.08 205.25,462.95" fill="#46391f" /><polygon points="205.25,459.25 209.25,455.65 240.25,462.78 236.25,466.78" fill="#5b4a30" /><rect x="203.75" y="455.45" width="5.8" height="5.8" fill="#c9a868" /><rect x="204.55" y="456.25" width="4.2" height="4.2" fill="#ffe7ae" /><polygon points="227.25,460.95 231.25,455.65 262.25,462.78 262.25,468.58 258.25,469.08 227.25,462.95" fill="#46391f" /><polygon points="227.25,459.25 231.25,455.65 262.25,462.78 258.25,466.78" fill="#5b4a30" /><rect x="225.75" y="455.45" width="5.8" height="5.8" fill="#c9a868" /><rect x="226.55" y="456.25" width="4.2" height="4.2" fill="#ffe7ae" /><rect x="426.9" y="122" width="8.2" height="8.5" fill="#e8e8e8" rx="2"/><rect x="426.9" y="136.5" width="8.2" height="8.5" fill="#e8e8e8" rx="2"/><rect x="427.3" y="127.3" width="7.4" height="12.4" fill="#fbfbfb" /><rect x="427.3" y="129.7" width="7.4" height="7.6" fill="#2e2e2e" /><text x="447" y="144.5" font-size="12.57" textLength="22" lengthAdjust="spacingAndGlyphs" transform="rotate(-90 447 144.5)" fill="#f4f4f4">R11</text><rect x="452.9" y="122" width="8.2" height="8.5" fill="#e8e8e8" rx="2"/><rect x="452.9" y="136.5" width="8.2" height="8.5" fill="#e8e8e8" rx="2"/><rect x="453.3" y="127.3" width="7.4" height="12.4" fill="#fbfbfb" /><rect x="453.3" y="129.7" width="7.4" height="7.6" fill="#2e2e2e" /><text x="473" y="144.5" font-size="12.57" textLength="22" lengthAdjust="spacingAndGlyphs" transform="rotate(-90 473 144.5)" fill="#f4f4f4">R10</text><rect x="573.9" y="122" width="8.2" height="8.5" fill="#e8e8e8" rx="2"/><rect x="573.9" y="136.5" width="8.2" height="8.5" fill="#e8e8e8" rx="2"/><rect x="574.3" y="127.3" width="7.4" height="12.4" fill="#fbfbfb" /><rect x="574.3" y="129.7" width="7.4" height="7.6" fill="#2e2e2e" /><text x="594" y="144.5" font-size="12.57" textLength="18.5" lengthAdjust="spacingAndGlyphs" transform="rotate(-90 594 144.5)" fill="#f4f4f4">R1</text><rect x="599.9" y="122" width="8.2" height="8.5" fill="#e8e8e8" rx="2"/><rect x="599.9" y="136.5" width="8.2" height="8.5" fill="#e8e8e8" rx="2"/><rect x="600.3" y="127.3" width="7.4" height="12.4" fill="#fbfbfb" /><rect x="600.3" y="129.7" width="7.4" height="7.6" fill="#2e2e2e" /><text x="620" y="144.5" font-size="12.57" textLength="18.5" lengthAdjust="spacingAndGlyphs" transform="rotate(-90 620 144.5)" fill="#f4f4f4">R2</text><rect x="625.9" y="122" width="8.2" height="8.5" fill="#e8e8e8" rx="2"/><rect x="625.9" y="136.5" width="8.2" height="8.5" fill="#e8e8e8" rx="2"/><rect x="626.3" y="127.3" width="7.4" height="12.4" fill="#fbfbfb" /><rect x="626.3" y="129.7" width="7.4" height="7.6" fill="#2e2e2e" /><text x="646" y="144.5" font-size="12.57" textLength="18.5" lengthAdjust="spacingAndGlyphs" transform="rotate(-90 646 144.5)" fill="#f4f4f4">R3</text><rect x="651.9" y="122" width="8.2" height="8.5" fill="#e8e8e8" rx="2"/><rect x="651.9" y="136.5" width="8.2" height="8.5" fill="#e8e8e8" rx="2"/><rect x="652.3" y="127.3" width="7.4" height="12.4" fill="#fbfbfb" /><rect x="652.3" y="129.7" width="7.4" height="7.6" fill="#2e2e2e" /><text x="672" y="144.5" font-size="12.57" textLength="18.5" lengthAdjust="spacingAndGlyphs" transform="rotate(-90 672 144.5)" fill="#f4f4f4">R4</text><rect x="535.7" y="295.5" width="8.6" height="8.5" fill="#e8e8e8" rx="2.5"/><rect x="535.7" y="311" width="8.6" height="8.5" fill="#e8e8e8" rx="2.5"/><rect x="535.1" y="300.5" width="8.2" height="14" fill="#fdfdfd" /><rect x="535.1" y="303.4" width="8.2" height="8.2" fill="#b9978a" /><rect x="541.5" y="300.7" width="1.8" height="13.6" fill="#2a1c18" /><text x="533.5" y="314.5" font-size="12.57" textLength="15.5" lengthAdjust="spacingAndGlyphs" transform="rotate(-90 533.5 314.5)" fill="#f4f4f4">C2</text><polygon points="345,173 349,173 349,177 345.5,177" fill="#f7ec1d" /><rect x="344" y="162.5" width="5.5" height="9" fill="#f6f6f4" /><rect x="344" y="162.5" width="1" height="9" fill="#dcdad4" /><path d="M346,193.6 L349,197.1" fill="none" stroke="#f7ec1d" stroke-width="1.3" /><rect x="344" y="183.6" width="5.5" height="9" fill="#f6f6f4" /><rect x="344" y="183.6" width="1" height="9" fill="#dcdad4" /><path d="M346,214.7 L349,218.2" fill="none" stroke="#f7ec1d" stroke-width="1.3" /><rect x="344" y="204.7" width="5.5" height="9" fill="#f6f6f4" /><rect x="344" y="204.7" width="1" height="9" fill="#dcdad4" /><path d="M346,235.8 L349,239.3" fill="none" stroke="#f7ec1d" stroke-width="1.3" /><rect x="344" y="225.8" width="5.5" height="9" fill="#f6f6f4" /><rect x="344" y="225.8" width="1" height="9" fill="#dcdad4" /><path d="M346,256.9 L349,260.4" fill="none" stroke="#f7ec1d" stroke-width="1.3" /><rect x="344" y="246.9" width="5.5" height="9" fill="#f6f6f4" /><rect x="344" y="246.9" width="1" height="9" fill="#dcdad4" /><path d="M346,278 L349,281.5" fill="none" stroke="#f7ec1d" stroke-width="1.3" /><rect x="344" y="268" width="5.5" height="9" fill="#f6f6f4" /><rect x="344" y="268" width="1" height="9" fill="#dcdad4" /><path d="M346,299.1 L349,302.6" fill="none" stroke="#f7ec1d" stroke-width="1.3" /><rect x="344" y="289.1" width="5.5" height="9" fill="#f6f6f4" /><rect x="344" y="289.1" width="1" height="9" fill="#dcdad4" /><path d="M346,320.2 L349,323.7" fill="none" stroke="#f7ec1d" stroke-width="1.3" /><rect x="344" y="310.2" width="5.5" height="9" fill="#f6f6f4" /><rect x="344" y="310.2" width="1" height="9" fill="#dcdad4" /><path d="M346,341.3 L349,344.8" fill="none" stroke="#f7ec1d" stroke-width="1.3" /><rect x="344" y="331.3" width="5.5" height="9" fill="#f6f6f4" /><rect x="344" y="331.3" width="1" height="9" fill="#dcdad4" /><path d="M346,362.4 L349,365.9" fill="none" stroke="#f7ec1d" stroke-width="1.3" /><rect x="344" y="352.4" width="5.5" height="9" fill="#f6f6f4" /><rect x="344" y="352.4" width="1" height="9" fill="#dcdad4" /><path d="M346,383.5 L349,387" fill="none" stroke="#f7ec1d" stroke-width="1.3" /><rect x="344" y="373.5" width="5.5" height="9" fill="#f6f6f4" /><rect x="344" y="373.5" width="1" height="9" fill="#dcdad4" /><path d="M346,404.6 L349,408.1" fill="none" stroke="#f7ec1d" stroke-width="1.3" /><rect x="344" y="394.6" width="5.5" height="9" fill="#f6f6f4" /><rect x="344" y="394.6" width="1" height="9" fill="#dcdad4" /><path d="M346,425.7 L349,429.2" fill="none" stroke="#f7ec1d" stroke-width="1.3" /><rect x="344" y="415.7" width="5.5" height="9" fill="#f6f6f4" /><rect x="344" y="415.7" width="1" height="9" fill="#dcdad4" /><path d="M346,446.8 L349,450.3" fill="none" stroke="#f7ec1d" stroke-width="1.3" /><rect x="344" y="436.8" width="5.5" height="9" fill="#f6f6f4" /><rect x="344" y="436.8" width="1" height="9" fill="#dcdad4" /><path d="M346,467.9 L349,471.4" fill="none" stroke="#f7ec1d" stroke-width="1.3" /><rect x="344" y="457.9" width="5.5" height="9" fill="#f6f6f4" /><rect x="344" y="457.9" width="1" height="9" fill="#dcdad4" /><path d="M346,489 L349,492.5" fill="none" stroke="#f7ec1d" stroke-width="1.3" /><rect x="344" y="479" width="5.5" height="9" fill="#f6f6f4" /><rect x="344" y="479" width="1" height="9" fill="#dcdad4" /><path d="M346,510.1 L349,513.6" fill="none" stroke="#f7ec1d" stroke-width="1.3" /><rect x="344" y="500.1" width="5.5" height="9" fill="#f6f6f4" /><rect x="344" y="500.1" width="1" height="9" fill="#dcdad4" /><path d="M346,531.2 L349,534.7" fill="none" stroke="#f7ec1d" stroke-width="1.3" /><rect x="344" y="521.2" width="5.5" height="9" fill="#f6f6f4" /><rect x="344" y="521.2" width="1" height="9" fill="#dcdad4" /><path d="M346,552.3 L349,555.8" fill="none" stroke="#f7ec1d" stroke-width="1.3" /><rect x="344" y="542.3" width="5.5" height="9" fill="#f6f6f4" /><rect x="344" y="542.3" width="1" height="9" fill="#dcdad4" /><path d="M346,573.4 L349,576.9" fill="none" stroke="#f7ec1d" stroke-width="1.3" /><rect x="344" y="563.4" width="5.5" height="9" fill="#f6f6f4" /><rect x="344" y="563.4" width="1" height="9" fill="#dcdad4" /><circle cx="478.4" cy="170.5" r="5.1" fill="none" stroke="#f7ec1d" stroke-width="2.9"/><circle cx="478.4" cy="170.5" r="3.8" fill="#18180c" /><polygon points="473.9,163.5 481.9,170.5 477.4,176.5 473.9,171.5" fill="#595553" /><rect x="463.9" y="162.5" width="10.3" height="9" fill="#f6f6f4" /><rect x="472.2" y="162.5" width="2" height="9" fill="#d8d6d0" /><circle cx="478.4" cy="191.5" r="5.1" fill="none" stroke="#f7ec1d" stroke-width="2.9"/><circle cx="478.4" cy="191.5" r="3.8" fill="#18180c" /><polygon points="473.9,184.6 481.9,191.5 477.4,197.5 473.9,192.6" fill="#595553" /><rect x="463.9" y="183.6" width="10.3" height="9" fill="#f6f6f4" /><rect x="472.2" y="183.6" width="2" height="9" fill="#d8d6d0" /><circle cx="478.4" cy="212.5" r="5.1" fill="none" stroke="#f7ec1d" stroke-width="2.9"/><circle cx="478.4" cy="212.5" r="3.8" fill="#18180c" /><polygon points="473.9,205.7 481.9,212.5 477.4,218.5 473.9,213.7" fill="#595553" /><rect x="463.9" y="204.7" width="10.3" height="9" fill="#f6f6f4" /><rect x="472.2" y="204.7" width="2" height="9" fill="#d8d6d0" /><circle cx="478.4" cy="233.5" r="5.1" fill="none" stroke="#f7ec1d" stroke-width="2.9"/><circle cx="478.4" cy="233.5" r="3.8" fill="#18180c" /><polygon points="473.9,226.8 481.9,233.5 477.4,239.5 473.9,234.8" fill="#595553" /><rect x="463.9" y="225.8" width="10.3" height="9" fill="#f6f6f4" /><rect x="472.2" y="225.8" width="2" height="9" fill="#d8d6d0" /><circle cx="478.4" cy="254.5" r="5.1" fill="none" stroke="#f7ec1d" stroke-width="2.9"/><circle cx="478.4" cy="254.5" r="3.8" fill="#18180c" /><polygon points="473.9,247.9 481.9,254.5 477.4,260.5 473.9,255.9" fill="#595553" /><rect x="463.9" y="246.9" width="10.3" height="9" fill="#f6f6f4" /><rect x="472.2" y="246.9" width="2" height="9" fill="#d8d6d0" /><circle cx="478.4" cy="275.5" r="5.1" fill="none" stroke="#f7ec1d" stroke-width="2.9"/><circle cx="478.4" cy="275.5" r="3.8" fill="#18180c" /><polygon points="473.9,269 481.9,275.5 477.4,281.5 473.9,277" fill="#595553" /><rect x="463.9" y="268" width="10.3" height="9" fill="#f6f6f4" /><rect x="472.2" y="268" width="2" height="9" fill="#d8d6d0" /><circle cx="478.4" cy="296.5" r="5.1" fill="none" stroke="#f7ec1d" stroke-width="2.9"/><circle cx="478.4" cy="296.5" r="3.8" fill="#18180c" /><polygon points="473.9,290.1 481.9,296.5 477.4,302.5 473.9,298.1" fill="#595553" /><rect x="463.9" y="289.1" width="10.3" height="9" fill="#f6f6f4" /><rect x="472.2" y="289.1" width="2" height="9" fill="#d8d6d0" /><circle cx="478.4" cy="317.5" r="5.1" fill="none" stroke="#f7ec1d" stroke-width="2.9"/><circle cx="478.4" cy="317.5" r="3.8" fill="#18180c" /><polygon points="473.9,311.2 481.9,317.5 477.4,323.5 473.9,319.2" fill="#595553" /><rect x="463.9" y="310.2" width="10.3" height="9" fill="#f6f6f4" /><rect x="472.2" y="310.2" width="2" height="9" fill="#d8d6d0" /><circle cx="478.4" cy="338.5" r="5.1" fill="none" stroke="#f7ec1d" stroke-width="2.9"/><circle cx="478.4" cy="338.5" r="3.8" fill="#18180c" /><polygon points="473.9,332.3 481.9,338.5 477.4,344.5 473.9,340.3" fill="#595553" /><rect x="463.9" y="331.3" width="10.3" height="9" fill="#f6f6f4" /><rect x="472.2" y="331.3" width="2" height="9" fill="#d8d6d0" /><circle cx="478.4" cy="359.5" r="5.1" fill="none" stroke="#f7ec1d" stroke-width="2.9"/><circle cx="478.4" cy="359.5" r="3.8" fill="#18180c" /><polygon points="473.9,353.4 481.9,359.5 477.4,365.5 473.9,361.4" fill="#595553" /><rect x="463.9" y="352.4" width="10.3" height="9" fill="#f6f6f4" /><rect x="472.2" y="352.4" width="2" height="9" fill="#d8d6d0" /><circle cx="478.4" cy="380.5" r="5.1" fill="none" stroke="#f7ec1d" stroke-width="2.9"/><circle cx="478.4" cy="380.5" r="3.8" fill="#18180c" /><polygon points="473.9,374.5 481.9,380.5 477.4,386.5 473.9,382.5" fill="#595553" /><rect x="463.9" y="373.5" width="10.3" height="9" fill="#f6f6f4" /><rect x="472.2" y="373.5" width="2" height="9" fill="#d8d6d0" /><circle cx="478.4" cy="401.5" r="5.1" fill="none" stroke="#f7ec1d" stroke-width="2.9"/><circle cx="478.4" cy="401.5" r="3.8" fill="#18180c" /><polygon points="473.9,395.6 481.9,401.5 477.4,407.5 473.9,403.6" fill="#595553" /><rect x="463.9" y="394.6" width="10.3" height="9" fill="#f6f6f4" /><rect x="472.2" y="394.6" width="2" height="9" fill="#d8d6d0" /><circle cx="478.4" cy="422.5" r="5.1" fill="none" stroke="#f7ec1d" stroke-width="2.9"/><circle cx="478.4" cy="422.5" r="3.8" fill="#18180c" /><polygon points="473.9,416.7 481.9,422.5 477.4,428.5 473.9,424.7" fill="#595553" /><rect x="463.9" y="415.7" width="10.3" height="9" fill="#f6f6f4" /><rect x="472.2" y="415.7" width="2" height="9" fill="#d8d6d0" /><circle cx="478.4" cy="443.5" r="5.1" fill="none" stroke="#f7ec1d" stroke-width="2.9"/><circle cx="478.4" cy="443.5" r="3.8" fill="#18180c" /><polygon points="473.9,437.8 481.9,443.5 477.4,449.5 473.9,445.8" fill="#595553" /><rect x="463.9" y="436.8" width="10.3" height="9" fill="#f6f6f4" /><rect x="472.2" y="436.8" width="2" height="9" fill="#d8d6d0" /><circle cx="478.4" cy="464.5" r="5.1" fill="none" stroke="#f7ec1d" stroke-width="2.9"/><circle cx="478.4" cy="464.5" r="3.8" fill="#18180c" /><polygon points="473.9,458.9 481.9,464.5 477.4,470.5 473.9,466.9" fill="#595553" /><rect x="463.9" y="457.9" width="10.3" height="9" fill="#f6f6f4" /><rect x="472.2" y="457.9" width="2" height="9" fill="#d8d6d0" /><circle cx="478.4" cy="485.5" r="5.1" fill="none" stroke="#f7ec1d" stroke-width="2.9"/><circle cx="478.4" cy="485.5" r="3.8" fill="#18180c" /><polygon points="473.9,480 481.9,485.5 477.4,491.5 473.9,488" fill="#595553" /><rect x="463.9" y="479" width="10.3" height="9" fill="#f6f6f4" /><rect x="472.2" y="479" width="2" height="9" fill="#d8d6d0" /><circle cx="478.4" cy="506.5" r="5.1" fill="none" stroke="#f7ec1d" stroke-width="2.9"/><circle cx="478.4" cy="506.5" r="3.8" fill="#18180c" /><polygon points="473.9,501.1 481.9,506.5 477.4,512.5 473.9,509.1" fill="#595553" /><rect x="463.9" y="500.1" width="10.3" height="9" fill="#f6f6f4" /><rect x="472.2" y="500.1" width="2" height="9" fill="#d8d6d0" /><circle cx="478.4" cy="527.5" r="5.1" fill="none" stroke="#f7ec1d" stroke-width="2.9"/><circle cx="478.4" cy="527.5" r="3.8" fill="#18180c" /><polygon points="473.9,522.2 481.9,527.5 477.4,533.5 473.9,530.2" fill="#595553" /><rect x="463.9" y="521.2" width="10.3" height="9" fill="#f6f6f4" /><rect x="472.2" y="521.2" width="2" height="9" fill="#d8d6d0" /><circle cx="478.4" cy="548.5" r="5.1" fill="none" stroke="#f7ec1d" stroke-width="2.9"/><circle cx="478.4" cy="548.5" r="3.8" fill="#18180c" /><polygon points="473.9,543.3 481.9,548.5 477.4,554.5 473.9,551.3" fill="#595553" /><rect x="463.9" y="542.3" width="10.3" height="9" fill="#f6f6f4" /><rect x="472.2" y="542.3" width="2" height="9" fill="#d8d6d0" /><circle cx="478.4" cy="569.5" r="5.1" fill="none" stroke="#f7ec1d" stroke-width="2.9"/><circle cx="478.4" cy="569.5" r="3.8" fill="#18180c" /><polygon points="473.9,564.4 481.9,569.5 477.4,575.5 473.9,572.4" fill="#595553" /><rect x="463.9" y="563.4" width="10.3" height="9" fill="#f6f6f4" /><rect x="472.2" y="563.4" width="2" height="9" fill="#d8d6d0" /><path d="M467.9,158.5 L467.9,581.5 L361,581.5" fill="none" stroke="#f4f4f4" stroke-width="1" /><polygon points="456.8,152.5 464.4,155 464.4,581 356,581 349,578 456.8,578" fill="#121212" /><rect x="349" y="152.5" width="107.8" height="425.5" fill="#67615f" /><polygon points="396,152.5 402,152.5 400,156" fill="#2a2826" /><rect x="555.5" y="164" width="10" height="13" fill="#f7ec1d" /><rect x="557" y="162.5" width="8.5" height="9" fill="#f6f6f4" /><rect x="557" y="162.5" width="1.2" height="9" fill="#dcdad4" /><polygon points="557.5,171.7 565,171.7 562,176" fill="#504c4a" /><path d="M565,197.6 L561,197.6 Q556,194.1 556.2,189.1" stroke="#f7ec1d" stroke-width="2" fill="none"/><rect x="557" y="183.6" width="8.5" height="9" fill="#f6f6f4" /><rect x="557" y="183.6" width="1.2" height="9" fill="#dcdad4" /><polygon points="557.5,192.8 565,192.8 562,197.1" fill="#504c4a" /><path d="M565,218.7 L561,218.7 Q556,215.2 556.2,210.2" stroke="#f7ec1d" stroke-width="2" fill="none"/><rect x="557" y="204.7" width="8.5" height="9" fill="#f6f6f4" /><rect x="557" y="204.7" width="1.2" height="9" fill="#dcdad4" /><polygon points="557.5,213.9 565,213.9 562,218.2" fill="#504c4a" /><path d="M565,239.8 L561,239.8 Q556,236.3 556.2,231.3" stroke="#f7ec1d" stroke-width="2" fill="none"/><rect x="557" y="225.8" width="8.5" height="9" fill="#f6f6f4" /><rect x="557" y="225.8" width="1.2" height="9" fill="#dcdad4" /><polygon points="557.5,235 565,235 562,239.3" fill="#504c4a" /><path d="M565,260.9 L561,260.9 Q556,257.4 556.2,252.4" stroke="#f7ec1d" stroke-width="2" fill="none"/><rect x="557" y="246.9" width="8.5" height="9" fill="#f6f6f4" /><rect x="557" y="246.9" width="1.2" height="9" fill="#dcdad4" /><polygon points="557.5,256.1 565,256.1 562,260.4" fill="#504c4a" /><path d="M565,282 L561,282 Q556,278.5 556.2,273.5" stroke="#f7ec1d" stroke-width="2" fill="none"/><rect x="557" y="268" width="8.5" height="9" fill="#f6f6f4" /><rect x="557" y="268" width="1.2" height="9" fill="#dcdad4" /><polygon points="557.5,277.2 565,277.2 562,281.5" fill="#504c4a" /><path d="M565,303.1 L561,303.1 Q556,299.6 556.2,294.6" stroke="#f7ec1d" stroke-width="2" fill="none"/><rect x="557" y="289.1" width="8.5" height="9" fill="#f6f6f4" /><rect x="557" y="289.1" width="1.2" height="9" fill="#dcdad4" /><polygon points="557.5,298.3 565,298.3 562,302.6" fill="#504c4a" /><path d="M565,324.2 L561,324.2 Q556,320.7 556.2,315.7" stroke="#f7ec1d" stroke-width="2" fill="none"/><rect x="557" y="310.2" width="8.5" height="9" fill="#f6f6f4" /><rect x="557" y="310.2" width="1.2" height="9" fill="#dcdad4" /><polygon points="557.5,319.4 565,319.4 562,323.7" fill="#504c4a" /><path d="M565,345.3 L561,345.3 Q556,341.8 556.2,336.8" stroke="#f7ec1d" stroke-width="2" fill="none"/><rect x="557" y="331.3" width="8.5" height="9" fill="#f6f6f4" /><rect x="557" y="331.3" width="1.2" height="9" fill="#dcdad4" /><polygon points="557.5,340.5 565,340.5 562,344.8" fill="#504c4a" /><path d="M565,366.4 L561,366.4 Q556,362.9 556.2,357.9" stroke="#f7ec1d" stroke-width="2" fill="none"/><rect x="557" y="352.4" width="8.5" height="9" fill="#f6f6f4" /><rect x="557" y="352.4" width="1.2" height="9" fill="#dcdad4" /><polygon points="557.5,361.6 565,361.6 562,365.9" fill="#504c4a" /><path d="M565,387.5 L561,387.5 Q556,384 556.2,379" stroke="#f7ec1d" stroke-width="2" fill="none"/><rect x="557" y="373.5" width="8.5" height="9" fill="#f6f6f4" /><rect x="557" y="373.5" width="1.2" height="9" fill="#dcdad4" /><polygon points="557.5,382.7 565,382.7 562,387" fill="#504c4a" /><path d="M565,408.6 L561,408.6 Q556,405.1 556.2,400.1" stroke="#f7ec1d" stroke-width="2" fill="none"/><rect x="557" y="394.6" width="8.5" height="9" fill="#f6f6f4" /><rect x="557" y="394.6" width="1.2" height="9" fill="#dcdad4" /><polygon points="557.5,403.8 565,403.8 562,408.1" fill="#504c4a" /><path d="M565,429.7 L561,429.7 Q556,426.2 556.2,421.2" stroke="#f7ec1d" stroke-width="2" fill="none"/><rect x="557" y="415.7" width="8.5" height="9" fill="#f6f6f4" /><rect x="557" y="415.7" width="1.2" height="9" fill="#dcdad4" /><polygon points="557.5,424.9 565,424.9 562,429.2" fill="#504c4a" /><path d="M565,450.8 L561,450.8 Q556,447.3 556.2,442.3" stroke="#f7ec1d" stroke-width="2" fill="none"/><rect x="557" y="436.8" width="8.5" height="9" fill="#f6f6f4" /><rect x="557" y="436.8" width="1.2" height="9" fill="#dcdad4" /><polygon points="557.5,446 565,446 562,450.3" fill="#504c4a" /><path d="M565,471.9 L561,471.9 Q556,468.4 556.2,463.4" stroke="#f7ec1d" stroke-width="2" fill="none"/><rect x="557" y="457.9" width="8.5" height="9" fill="#f6f6f4" /><rect x="557" y="457.9" width="1.2" height="9" fill="#dcdad4" /><polygon points="557.5,467.1 565,467.1 562,471.4" fill="#504c4a" /><path d="M565,493 L561,493 Q556,489.5 556.2,484.5" stroke="#f7ec1d" stroke-width="2" fill="none"/><rect x="557" y="479" width="8.5" height="9" fill="#f6f6f4" /><rect x="557" y="479" width="1.2" height="9" fill="#dcdad4" /><polygon points="557.5,488.2 565,488.2 562,492.5" fill="#504c4a" /><path d="M565,514.1 L561,514.1 Q556,510.6 556.2,505.6" stroke="#f7ec1d" stroke-width="2" fill="none"/><rect x="557" y="500.1" width="8.5" height="9" fill="#f6f6f4" /><rect x="557" y="500.1" width="1.2" height="9" fill="#dcdad4" /><polygon points="557.5,509.3 565,509.3 562,513.6" fill="#504c4a" /><path d="M565,535.2 L561,535.2 Q556,531.7 556.2,526.7" stroke="#f7ec1d" stroke-width="2" fill="none"/><rect x="557" y="521.2" width="8.5" height="9" fill="#f6f6f4" /><rect x="557" y="521.2" width="1.2" height="9" fill="#dcdad4" /><polygon points="557.5,530.4 565,530.4 562,534.7" fill="#504c4a" /><path d="M565,556.3 L561,556.3 Q556,552.8 556.2,547.8" stroke="#f7ec1d" stroke-width="2" fill="none"/><rect x="557" y="542.3" width="8.5" height="9" fill="#f6f6f4" /><rect x="557" y="542.3" width="1.2" height="9" fill="#dcdad4" /><polygon points="557.5,551.5 565,551.5 562,555.8" fill="#504c4a" /><path d="M565,577.4 L561,577.4 Q556,573.9 556.2,568.9" stroke="#f7ec1d" stroke-width="2" fill="none"/><rect x="557" y="563.4" width="8.5" height="9" fill="#f6f6f4" /><rect x="557" y="563.4" width="1.2" height="9" fill="#dcdad4" /><polygon points="557.5,572.6 565,572.6 562,576.9" fill="#504c4a" /><circle cx="688.5" cy="170.5" r="5.1" fill="none" stroke="#f7ec1d" stroke-width="2.9"/><circle cx="688.5" cy="170.5" r="3.8" fill="#18180c" /><polygon points="687,163.5 692,170.5 687.5,176.5 684,171.5" fill="#595553" /><rect x="677" y="162.5" width="10.3" height="9" fill="#f6f6f4" /><rect x="685.3" y="162.5" width="2" height="9" fill="#d8d6d0" /><circle cx="688.5" cy="191.5" r="5.1" fill="none" stroke="#f7ec1d" stroke-width="2.9"/><circle cx="688.5" cy="191.5" r="3.8" fill="#18180c" /><polygon points="687,184.6 692,191.5 687.5,197.5 684,192.6" fill="#595553" /><rect x="677" y="183.6" width="10.3" height="9" fill="#f6f6f4" /><rect x="685.3" y="183.6" width="2" height="9" fill="#d8d6d0" /><circle cx="688.5" cy="212.5" r="5.1" fill="none" stroke="#f7ec1d" stroke-width="2.9"/><circle cx="688.5" cy="212.5" r="3.8" fill="#18180c" /><polygon points="687,205.7 692,212.5 687.5,218.5 684,213.7" fill="#595553" /><rect x="677" y="204.7" width="10.3" height="9" fill="#f6f6f4" /><rect x="685.3" y="204.7" width="2" height="9" fill="#d8d6d0" /><circle cx="688.5" cy="233.5" r="5.1" fill="none" stroke="#f7ec1d" stroke-width="2.9"/><circle cx="688.5" cy="233.5" r="3.8" fill="#18180c" /><polygon points="687,226.8 692,233.5 687.5,239.5 684,234.8" fill="#595553" /><rect x="677" y="225.8" width="10.3" height="9" fill="#f6f6f4" /><rect x="685.3" y="225.8" width="2" height="9" fill="#d8d6d0" /><circle cx="688.5" cy="254.5" r="5.1" fill="none" stroke="#f7ec1d" stroke-width="2.9"/><circle cx="688.5" cy="254.5" r="3.8" fill="#18180c" /><polygon points="687,247.9 692,254.5 687.5,260.5 684,255.9" fill="#595553" /><rect x="677" y="246.9" width="10.3" height="9" fill="#f6f6f4" /><rect x="685.3" y="246.9" width="2" height="9" fill="#d8d6d0" /><circle cx="688.5" cy="275.5" r="5.1" fill="none" stroke="#f7ec1d" stroke-width="2.9"/><circle cx="688.5" cy="275.5" r="3.8" fill="#18180c" /><polygon points="687,269 692,275.5 687.5,281.5 684,277" fill="#595553" /><rect x="677" y="268" width="10.3" height="9" fill="#f6f6f4" /><rect x="685.3" y="268" width="2" height="9" fill="#d8d6d0" /><circle cx="688.5" cy="296.5" r="5.1" fill="none" stroke="#f7ec1d" stroke-width="2.9"/><circle cx="688.5" cy="296.5" r="3.8" fill="#18180c" /><polygon points="687,290.1 692,296.5 687.5,302.5 684,298.1" fill="#595553" /><rect x="677" y="289.1" width="10.3" height="9" fill="#f6f6f4" /><rect x="685.3" y="289.1" width="2" height="9" fill="#d8d6d0" /><circle cx="688.5" cy="317.5" r="5.1" fill="none" stroke="#f7ec1d" stroke-width="2.9"/><circle cx="688.5" cy="317.5" r="3.8" fill="#18180c" /><polygon points="687,311.2 692,317.5 687.5,323.5 684,319.2" fill="#595553" /><rect x="677" y="310.2" width="10.3" height="9" fill="#f6f6f4" /><rect x="685.3" y="310.2" width="2" height="9" fill="#d8d6d0" /><circle cx="688.5" cy="338.5" r="5.1" fill="none" stroke="#f7ec1d" stroke-width="2.9"/><circle cx="688.5" cy="338.5" r="3.8" fill="#18180c" /><polygon points="687,332.3 692,338.5 687.5,344.5 684,340.3" fill="#595553" /><rect x="677" y="331.3" width="10.3" height="9" fill="#f6f6f4" /><rect x="685.3" y="331.3" width="2" height="9" fill="#d8d6d0" /><circle cx="688.5" cy="359.5" r="5.1" fill="none" stroke="#f7ec1d" stroke-width="2.9"/><circle cx="688.5" cy="359.5" r="3.8" fill="#18180c" /><polygon points="687,353.4 692,359.5 687.5,365.5 684,361.4" fill="#595553" /><rect x="677" y="352.4" width="10.3" height="9" fill="#f6f6f4" /><rect x="685.3" y="352.4" width="2" height="9" fill="#d8d6d0" /><circle cx="688.5" cy="380.5" r="5.1" fill="none" stroke="#f7ec1d" stroke-width="2.9"/><circle cx="688.5" cy="380.5" r="3.8" fill="#18180c" /><polygon points="687,374.5 692,380.5 687.5,386.5 684,382.5" fill="#595553" /><rect x="677" y="373.5" width="10.3" height="9" fill="#f6f6f4" /><rect x="685.3" y="373.5" width="2" height="9" fill="#d8d6d0" /><circle cx="688.5" cy="401.5" r="5.1" fill="none" stroke="#f7ec1d" stroke-width="2.9"/><circle cx="688.5" cy="401.5" r="3.8" fill="#18180c" /><polygon points="687,395.6 692,401.5 687.5,407.5 684,403.6" fill="#595553" /><rect x="677" y="394.6" width="10.3" height="9" fill="#f6f6f4" /><rect x="685.3" y="394.6" width="2" height="9" fill="#d8d6d0" /><circle cx="688.5" cy="422.5" r="5.1" fill="none" stroke="#f7ec1d" stroke-width="2.9"/><circle cx="688.5" cy="422.5" r="3.8" fill="#18180c" /><polygon points="687,416.7 692,422.5 687.5,428.5 684,424.7" fill="#595553" /><rect x="677" y="415.7" width="10.3" height="9" fill="#f6f6f4" /><rect x="685.3" y="415.7" width="2" height="9" fill="#d8d6d0" /><circle cx="688.5" cy="443.5" r="5.1" fill="none" stroke="#f7ec1d" stroke-width="2.9"/><circle cx="688.5" cy="443.5" r="3.8" fill="#18180c" /><polygon points="687,437.8 692,443.5 687.5,449.5 684,445.8" fill="#595553" /><rect x="677" y="436.8" width="10.3" height="9" fill="#f6f6f4" /><rect x="685.3" y="436.8" width="2" height="9" fill="#d8d6d0" /><circle cx="688.5" cy="464.5" r="5.1" fill="none" stroke="#f7ec1d" stroke-width="2.9"/><circle cx="688.5" cy="464.5" r="3.8" fill="#18180c" /><polygon points="687,458.9 692,464.5 687.5,470.5 684,466.9" fill="#595553" /><rect x="677" y="457.9" width="10.3" height="9" fill="#f6f6f4" /><rect x="685.3" y="457.9" width="2" height="9" fill="#d8d6d0" /><circle cx="688.5" cy="485.5" r="5.1" fill="none" stroke="#f7ec1d" stroke-width="2.9"/><circle cx="688.5" cy="485.5" r="3.8" fill="#18180c" /><polygon points="687,480 692,485.5 687.5,491.5 684,488" fill="#595553" /><rect x="677" y="479" width="10.3" height="9" fill="#f6f6f4" /><rect x="685.3" y="479" width="2" height="9" fill="#d8d6d0" /><circle cx="688.5" cy="506.5" r="5.1" fill="none" stroke="#f7ec1d" stroke-width="2.9"/><circle cx="688.5" cy="506.5" r="3.8" fill="#18180c" /><polygon points="687,501.1 692,506.5 687.5,512.5 684,509.1" fill="#595553" /><rect x="677" y="500.1" width="10.3" height="9" fill="#f6f6f4" /><rect x="685.3" y="500.1" width="2" height="9" fill="#d8d6d0" /><circle cx="688.5" cy="527.5" r="5.1" fill="none" stroke="#f7ec1d" stroke-width="2.9"/><circle cx="688.5" cy="527.5" r="3.8" fill="#18180c" /><polygon points="687,522.2 692,527.5 687.5,533.5 684,530.2" fill="#595553" /><rect x="677" y="521.2" width="10.3" height="9" fill="#f6f6f4" /><rect x="685.3" y="521.2" width="2" height="9" fill="#d8d6d0" /><circle cx="688.5" cy="548.5" r="5.1" fill="none" stroke="#f7ec1d" stroke-width="2.9"/><circle cx="688.5" cy="548.5" r="3.8" fill="#18180c" /><polygon points="687,543.3 692,548.5 687.5,554.5 684,551.3" fill="#595553" /><rect x="677" y="542.3" width="10.3" height="9" fill="#f6f6f4" /><rect x="685.3" y="542.3" width="2" height="9" fill="#d8d6d0" /><circle cx="688.5" cy="569.5" r="5.1" fill="none" stroke="#f7ec1d" stroke-width="2.9"/><circle cx="688.5" cy="569.5" r="3.8" fill="#18180c" /><polygon points="687,564.4 692,569.5 687.5,575.5 684,572.4" fill="#595553" /><rect x="677" y="563.4" width="10.3" height="9" fill="#f6f6f4" /><rect x="685.3" y="563.4" width="2" height="9" fill="#d8d6d0" /><path d="M681,158.5 L681,581.5 L577,581.5" fill="none" stroke="#f4f4f4" stroke-width="1" /><polygon points="672.7,152.5 677.5,155 677.5,581 572,581 565,578 672.7,578" fill="#121212" /><rect x="565" y="152.5" width="107.7" height="425.5" fill="#67615f" /><polygon points="612,152.5 618,152.5 616,156" fill="#2a2826" /><text x="391" y="615.5" font-size="24.44" textLength="55" lengthAdjust="spacingAndGlyphs" stroke="#1e3a2b" stroke-width="0.49" fill="#f4f4f4">65c22</text><text x="590" y="615.5" font-size="24.44" textLength="56" lengthAdjust="spacingAndGlyphs" stroke="#1e3a2b" stroke-width="0.49" fill="#f4f4f4">65c02</text><rect x="220.2" y="565" width="8.6" height="8.5" fill="#e8e8e8" rx="2.5"/><rect x="220.2" y="580.5" width="8.6" height="8.5" fill="#e8e8e8" rx="2.5"/><rect x="219.6" y="570" width="8.2" height="14" fill="#fdfdfd" /><rect x="219.6" y="572.9" width="8.2" height="8.2" fill="#b9978a" /><rect x="226" y="570.2" width="1.8" height="13.6" fill="#2a1c18" /><text x="246.5" y="591" font-size="12.57" textLength="21.5" lengthAdjust="spacingAndGlyphs" transform="rotate(-90 246.5 591)" fill="#f4f4f4">C11</text><rect x="220.2" y="631" width="8.6" height="8.5" fill="#e8e8e8" rx="2.5"/><rect x="220.2" y="646.5" width="8.6" height="8.5" fill="#e8e8e8" rx="2.5"/><rect x="219.6" y="636" width="8.2" height="14" fill="#fdfdfd" /><rect x="219.6" y="638.9" width="8.2" height="8.2" fill="#b9978a" /><rect x="226" y="636.2" width="1.8" height="13.6" fill="#2a1c18" /><text x="246.5" y="654" font-size="12.57" textLength="22" lengthAdjust="spacingAndGlyphs" transform="rotate(-90 246.5 654)" fill="#f4f4f4">C10</text><text x="214" y="616" font-size="12.57" textLength="13.5" lengthAdjust="spacingAndGlyphs" transform="rotate(-90 214 616)" fill="#f4f4f4">Y1</text><rect x="216" y="594.5" width="17" height="28.5" fill="#e9e7e0" rx="1.5"/><rect x="217.5" y="596" width="12" height="25.5" fill="#fdfdfb" /><rect x="229.5" y="596" width="3" height="25.5" fill="#b7a98c" /><text x="267.5" y="594" font-size="12.57" textLength="23" lengthAdjust="spacingAndGlyphs" fill="#f4f4f4">U10</text><polygon points="253.7,592.8 259.3,592.8 256.5,597.2" fill="#f4f4f4" /><path d="M262,596.5 L296,596.5" fill="none" stroke="#f4f4f4" stroke-width="1" /><rect x="251" y="598.5" width="7" height="5" fill="#f4f4f4" rx="0.8"/><rect x="289" y="598.4" width="18.5" height="5.2" fill="#cfcfcf" rx="1"/><rect x="291" y="598.8" width="16" height="3.4" fill="#f8f8f8" rx="0.8"/><rect x="251" y="609.05" width="7" height="5" fill="#f4f4f4" rx="0.8"/><rect x="289" y="608.95" width="18.5" height="5.2" fill="#cfcfcf" rx="1"/><rect x="291" y="609.35" width="16" height="3.4" fill="#f8f8f8" rx="0.8"/><rect x="251" y="619.6" width="7" height="5" fill="#f4f4f4" rx="0.8"/><rect x="289" y="619.5" width="18.5" height="5.2" fill="#cfcfcf" rx="1"/><rect x="291" y="619.9" width="16" height="3.4" fill="#f8f8f8" rx="0.8"/><rect x="251" y="630.15" width="7" height="5" fill="#f4f4f4" rx="0.8"/><rect x="289" y="630.05" width="18.5" height="5.2" fill="#cfcfcf" rx="1"/><rect x="291" y="630.45" width="16" height="3.4" fill="#f8f8f8" rx="0.8"/><rect x="251" y="640.7" width="7" height="5" fill="#f4f4f4" rx="0.8"/><rect x="289" y="640.6" width="18.5" height="5.2" fill="#cfcfcf" rx="1"/><rect x="291" y="641" width="16" height="3.4" fill="#f8f8f8" rx="0.8"/><rect x="251" y="651.25" width="7" height="5" fill="#f4f4f4" rx="0.8"/><rect x="289" y="651.15" width="18.5" height="5.2" fill="#cfcfcf" rx="1"/><rect x="291" y="651.55" width="16" height="3.4" fill="#f8f8f8" rx="0.8"/><rect x="251" y="661.8" width="7" height="5" fill="#f4f4f4" rx="0.8"/><rect x="289" y="661.7" width="18.5" height="5.2" fill="#cfcfcf" rx="1"/><rect x="291" y="662.1" width="16" height="3.4" fill="#f8f8f8" rx="0.8"/><polygon points="286,599 290.5,600.5 290.5,670.5 261,670.5 257.5,669 286,669" fill="#121212" /><rect x="257.5" y="599" width="28.5" height="70" fill="#67615f" /><circle cx="262.5" cy="604.5" r="2.2" fill="#d8d2c4" /><rect x="300" y="581.2" width="8.5" height="8.6" fill="#e8e8e8" rx="2.5"/><rect x="314.5" y="581.2" width="8.5" height="8.6" fill="#e8e8e8" rx="2.5"/><rect x="304.5" y="581.5" width="14" height="8" fill="#fdfdfd" /><rect x="307.4" y="581.5" width="8.2" height="8" fill="#b9978a" /><rect x="304.7" y="581.5" width="13.6" height="1.3" fill="#4a3028" /><text x="304" y="578" font-size="12.57" textLength="15" lengthAdjust="spacingAndGlyphs" fill="#f4f4f4">C3</text><rect x="335" y="586.7" width="8.5" height="8.6" fill="#e8e8e8" rx="2.5"/><rect x="349.5" y="586.7" width="8.5" height="8.6" fill="#e8e8e8" rx="2.5"/><rect x="339.5" y="587" width="14" height="8" fill="#fdfdfd" /><rect x="342.4" y="587" width="8.2" height="8" fill="#b9978a" /><rect x="339.7" y="587" width="13.6" height="1.3" fill="#4a3028" /><text x="339.5" y="607.5" font-size="12.57" textLength="14.5" lengthAdjust="spacingAndGlyphs" fill="#f4f4f4">C1</text><text x="249.5" y="694" font-size="23.46" textLength="71.5" lengthAdjust="spacingAndGlyphs" stroke="#1e3a2b" stroke-width="0.47" fill="#f4f4f4">MCP795</text><text x="786" y="162" font-size="12.57" textLength="14.5" lengthAdjust="spacingAndGlyphs" fill="#f4f4f4">U2</text><polygon points="767.7,162.3 773.3,162.3 770.5,166.7" fill="#f4f4f4" /><rect x="813" y="150.2" width="8.5" height="8.6" fill="#e8e8e8" rx="2.5"/><rect x="828.5" y="150.2" width="8.5" height="8.6" fill="#e8e8e8" rx="2.5"/><rect x="818" y="149.7" width="14" height="8" fill="#fdfdfd" /><rect x="820.9" y="149.7" width="8.2" height="8" fill="#b9978a" /><rect x="818.2" y="156.5" width="13.6" height="1.3" fill="#4a3028" /><text x="818" y="147" font-size="12.57" textLength="14.5" lengthAdjust="spacingAndGlyphs" fill="#f4f4f4">C4</text><rect x="764.5" y="167.9" width="13.5" height="5.2" fill="#e9e9e9" rx="1.6"/><rect x="772" y="167.6" width="5.5" height="4.6" fill="#fbfbfb" /><rect x="771.4" y="170.7" width="1.5" height="2" fill="#8c8c8c" /><rect x="806.5" y="167.9" width="14.5" height="5.2" fill="#e9e9e9" rx="1.6"/><rect x="807" y="167.6" width="5.5" height="4.6" fill="#fbfbfb" /><rect x="811.7" y="170.7" width="1.5" height="2" fill="#8c8c8c" /><rect x="764.5" y="178.44" width="13.5" height="5.2" fill="#e9e9e9" rx="1.6"/><rect x="772" y="178.14" width="5.5" height="4.6" fill="#fbfbfb" /><rect x="771.4" y="181.24" width="1.5" height="2" fill="#8c8c8c" /><rect x="806.5" y="178.44" width="14.5" height="5.2" fill="#e9e9e9" rx="1.6"/><rect x="807" y="178.14" width="5.5" height="4.6" fill="#fbfbfb" /><rect x="811.7" y="181.24" width="1.5" height="2" fill="#8c8c8c" /><rect x="764.5" y="188.98" width="13.5" height="5.2" fill="#e9e9e9" rx="1.6"/><rect x="772" y="188.68" width="5.5" height="4.6" fill="#fbfbfb" /><rect x="771.4" y="191.78" width="1.5" height="2" fill="#8c8c8c" /><rect x="806.5" y="188.98" width="14.5" height="5.2" fill="#e9e9e9" rx="1.6"/><rect x="807" y="188.68" width="5.5" height="4.6" fill="#fbfbfb" /><rect x="811.7" y="191.78" width="1.5" height="2" fill="#8c8c8c" /><rect x="764.5" y="199.52" width="13.5" height="5.2" fill="#e9e9e9" rx="1.6"/><rect x="772" y="199.22" width="5.5" height="4.6" fill="#fbfbfb" /><rect x="771.4" y="202.32" width="1.5" height="2" fill="#8c8c8c" /><rect x="806.5" y="199.52" width="14.5" height="5.2" fill="#e9e9e9" rx="1.6"/><rect x="807" y="199.22" width="5.5" height="4.6" fill="#fbfbfb" /><rect x="811.7" y="202.32" width="1.5" height="2" fill="#8c8c8c" /><rect x="764.5" y="210.06" width="13.5" height="5.2" fill="#e9e9e9" rx="1.6"/><rect x="772" y="209.76" width="5.5" height="4.6" fill="#fbfbfb" /><rect x="771.4" y="212.86" width="1.5" height="2" fill="#8c8c8c" /><rect x="806.5" y="210.06" width="14.5" height="5.2" fill="#e9e9e9" rx="1.6"/><rect x="807" y="209.76" width="5.5" height="4.6" fill="#fbfbfb" /><rect x="811.7" y="212.86" width="1.5" height="2" fill="#8c8c8c" /><rect x="764.5" y="220.6" width="13.5" height="5.2" fill="#e9e9e9" rx="1.6"/><rect x="772" y="220.3" width="5.5" height="4.6" fill="#fbfbfb" /><rect x="771.4" y="223.4" width="1.5" height="2" fill="#8c8c8c" /><rect x="806.5" y="220.6" width="14.5" height="5.2" fill="#e9e9e9" rx="1.6"/><rect x="807" y="220.3" width="5.5" height="4.6" fill="#fbfbfb" /><rect x="811.7" y="223.4" width="1.5" height="2" fill="#8c8c8c" /><rect x="764.5" y="231.14" width="13.5" height="5.2" fill="#e9e9e9" rx="1.6"/><rect x="772" y="230.84" width="5.5" height="4.6" fill="#fbfbfb" /><rect x="771.4" y="233.94" width="1.5" height="2" fill="#8c8c8c" /><rect x="806.5" y="231.14" width="14.5" height="5.2" fill="#e9e9e9" rx="1.6"/><rect x="807" y="230.84" width="5.5" height="4.6" fill="#fbfbfb" /><rect x="811.7" y="233.94" width="1.5" height="2" fill="#8c8c8c" /><rect x="777" y="162.5" width="30.5" height="71.5" fill="#161616" /><rect x="777.5" y="162.5" width="29.5" height="69.3" fill="#67615f" /><circle cx="783.5" cy="168.5" r="2.2" fill="#d8d2c4" /><path d="M776,238 L809,238" fill="none" stroke="#f4f4f4" stroke-width="1" /><text x="752.5" y="264" font-size="24.44" textLength="80" lengthAdjust="spacingAndGlyphs" stroke="#1e3a2b" stroke-width="0.49" fill="#f4f4f4">74ahc08</text><text x="786" y="299" font-size="12.57" textLength="14.5" lengthAdjust="spacingAndGlyphs" fill="#f4f4f4">U6</text><polygon points="767.7,299.3 773.3,299.3 770.5,303.7" fill="#f4f4f4" /><rect x="813" y="286.7" width="8.5" height="8.6" fill="#e8e8e8" rx="2.5"/><rect x="828.5" y="286.7" width="8.5" height="8.6" fill="#e8e8e8" rx="2.5"/><rect x="818" y="286.2" width="14" height="8" fill="#fdfdfd" /><rect x="820.9" y="286.2" width="8.2" height="8" fill="#b9978a" /><rect x="818.2" y="293" width="13.6" height="1.3" fill="#4a3028" /><text x="818" y="283.5" font-size="12.57" textLength="14.5" lengthAdjust="spacingAndGlyphs" fill="#f4f4f4">C5</text><rect x="764.5" y="304.9" width="13.5" height="5.2" fill="#e9e9e9" rx="1.6"/><rect x="772" y="304.6" width="5.5" height="4.6" fill="#fbfbfb" /><rect x="771.4" y="307.7" width="1.5" height="2" fill="#8c8c8c" /><rect x="806.5" y="304.9" width="14.5" height="5.2" fill="#e9e9e9" rx="1.6"/><rect x="807" y="304.6" width="5.5" height="4.6" fill="#fbfbfb" /><rect x="811.7" y="307.7" width="1.5" height="2" fill="#8c8c8c" /><rect x="764.5" y="315.44" width="13.5" height="5.2" fill="#e9e9e9" rx="1.6"/><rect x="772" y="315.14" width="5.5" height="4.6" fill="#fbfbfb" /><rect x="771.4" y="318.24" width="1.5" height="2" fill="#8c8c8c" /><rect x="806.5" y="315.44" width="14.5" height="5.2" fill="#e9e9e9" rx="1.6"/><rect x="807" y="315.14" width="5.5" height="4.6" fill="#fbfbfb" /><rect x="811.7" y="318.24" width="1.5" height="2" fill="#8c8c8c" /><rect x="764.5" y="325.98" width="13.5" height="5.2" fill="#e9e9e9" rx="1.6"/><rect x="772" y="325.68" width="5.5" height="4.6" fill="#fbfbfb" /><rect x="771.4" y="328.78" width="1.5" height="2" fill="#8c8c8c" /><rect x="806.5" y="325.98" width="14.5" height="5.2" fill="#e9e9e9" rx="1.6"/><rect x="807" y="325.68" width="5.5" height="4.6" fill="#fbfbfb" /><rect x="811.7" y="328.78" width="1.5" height="2" fill="#8c8c8c" /><rect x="764.5" y="336.52" width="13.5" height="5.2" fill="#e9e9e9" rx="1.6"/><rect x="772" y="336.22" width="5.5" height="4.6" fill="#fbfbfb" /><rect x="771.4" y="339.32" width="1.5" height="2" fill="#8c8c8c" /><rect x="806.5" y="336.52" width="14.5" height="5.2" fill="#e9e9e9" rx="1.6"/><rect x="807" y="336.22" width="5.5" height="4.6" fill="#fbfbfb" /><rect x="811.7" y="339.32" width="1.5" height="2" fill="#8c8c8c" /><rect x="764.5" y="347.06" width="13.5" height="5.2" fill="#e9e9e9" rx="1.6"/><rect x="772" y="346.76" width="5.5" height="4.6" fill="#fbfbfb" /><rect x="771.4" y="349.86" width="1.5" height="2" fill="#8c8c8c" /><rect x="806.5" y="347.06" width="14.5" height="5.2" fill="#e9e9e9" rx="1.6"/><rect x="807" y="346.76" width="5.5" height="4.6" fill="#fbfbfb" /><rect x="811.7" y="349.86" width="1.5" height="2" fill="#8c8c8c" /><rect x="764.5" y="357.6" width="13.5" height="5.2" fill="#e9e9e9" rx="1.6"/><rect x="772" y="357.3" width="5.5" height="4.6" fill="#fbfbfb" /><rect x="771.4" y="360.4" width="1.5" height="2" fill="#8c8c8c" /><rect x="806.5" y="357.6" width="14.5" height="5.2" fill="#e9e9e9" rx="1.6"/><rect x="807" y="357.3" width="5.5" height="4.6" fill="#fbfbfb" /><rect x="811.7" y="360.4" width="1.5" height="2" fill="#8c8c8c" /><rect x="764.5" y="368.14" width="13.5" height="5.2" fill="#e9e9e9" rx="1.6"/><rect x="772" y="367.84" width="5.5" height="4.6" fill="#fbfbfb" /><rect x="771.4" y="370.94" width="1.5" height="2" fill="#8c8c8c" /><rect x="806.5" y="368.14" width="14.5" height="5.2" fill="#e9e9e9" rx="1.6"/><rect x="807" y="367.84" width="5.5" height="4.6" fill="#fbfbfb" /><rect x="811.7" y="370.94" width="1.5" height="2" fill="#8c8c8c" /><rect x="777" y="299.5" width="30.5" height="71.5" fill="#161616" /><rect x="777.5" y="299.5" width="29.5" height="69.3" fill="#67615f" /><circle cx="783.5" cy="305.5" r="2.2" fill="#d8d2c4" /><path d="M776,375 L809,375" fill="none" stroke="#f4f4f4" stroke-width="1" /><text x="753" y="400" font-size="24.44" textLength="79" lengthAdjust="spacingAndGlyphs" stroke="#1e3a2b" stroke-width="0.49" fill="#f4f4f4">74ahc04</text><text x="943.75" y="162" font-size="12.57" textLength="14.5" lengthAdjust="spacingAndGlyphs" fill="#f4f4f4">U1</text><polygon points="926.2,162.3 931.8,162.3 929,166.7" fill="#f4f4f4" /><rect x="970.5" y="150.2" width="8.5" height="8.6" fill="#e8e8e8" rx="2.5"/><rect x="986" y="150.2" width="8.5" height="8.6" fill="#e8e8e8" rx="2.5"/><rect x="975.5" y="149.7" width="14" height="8" fill="#fdfdfd" /><rect x="978.4" y="149.7" width="8.2" height="8" fill="#b9978a" /><rect x="975.7" y="156.5" width="13.6" height="1.3" fill="#4a3028" /><text x="975.5" y="147" font-size="12.57" textLength="14.5" lengthAdjust="spacingAndGlyphs" fill="#f4f4f4">C8</text><rect x="922.5" y="167.9" width="15.5" height="5.2" fill="#e9e9e9" rx="1.6"/><rect x="932" y="167.6" width="5.5" height="4.6" fill="#fbfbfb" /><rect x="931.4" y="170.7" width="1.5" height="2" fill="#8c8c8c" /><rect x="966" y="167.9" width="14" height="5.2" fill="#e9e9e9" rx="1.6"/><rect x="966.5" y="167.6" width="5.5" height="4.6" fill="#fbfbfb" /><rect x="971.2" y="170.7" width="1.5" height="2" fill="#8c8c8c" /><rect x="922.5" y="178.44" width="15.5" height="5.2" fill="#e9e9e9" rx="1.6"/><rect x="932" y="178.14" width="5.5" height="4.6" fill="#fbfbfb" /><rect x="931.4" y="181.24" width="1.5" height="2" fill="#8c8c8c" /><rect x="966" y="178.44" width="14" height="5.2" fill="#e9e9e9" rx="1.6"/><rect x="966.5" y="178.14" width="5.5" height="4.6" fill="#fbfbfb" /><rect x="971.2" y="181.24" width="1.5" height="2" fill="#8c8c8c" /><rect x="922.5" y="188.98" width="15.5" height="5.2" fill="#e9e9e9" rx="1.6"/><rect x="932" y="188.68" width="5.5" height="4.6" fill="#fbfbfb" /><rect x="931.4" y="191.78" width="1.5" height="2" fill="#8c8c8c" /><rect x="966" y="188.98" width="14" height="5.2" fill="#e9e9e9" rx="1.6"/><rect x="966.5" y="188.68" width="5.5" height="4.6" fill="#fbfbfb" /><rect x="971.2" y="191.78" width="1.5" height="2" fill="#8c8c8c" /><rect x="922.5" y="199.52" width="15.5" height="5.2" fill="#e9e9e9" rx="1.6"/><rect x="932" y="199.22" width="5.5" height="4.6" fill="#fbfbfb" /><rect x="931.4" y="202.32" width="1.5" height="2" fill="#8c8c8c" /><rect x="966" y="199.52" width="14" height="5.2" fill="#e9e9e9" rx="1.6"/><rect x="966.5" y="199.22" width="5.5" height="4.6" fill="#fbfbfb" /><rect x="971.2" y="202.32" width="1.5" height="2" fill="#8c8c8c" /><rect x="922.5" y="210.06" width="15.5" height="5.2" fill="#e9e9e9" rx="1.6"/><rect x="932" y="209.76" width="5.5" height="4.6" fill="#fbfbfb" /><rect x="931.4" y="212.86" width="1.5" height="2" fill="#8c8c8c" /><rect x="966" y="210.06" width="14" height="5.2" fill="#e9e9e9" rx="1.6"/><rect x="966.5" y="209.76" width="5.5" height="4.6" fill="#fbfbfb" /><rect x="971.2" y="212.86" width="1.5" height="2" fill="#8c8c8c" /><rect x="922.5" y="220.6" width="15.5" height="5.2" fill="#e9e9e9" rx="1.6"/><rect x="932" y="220.3" width="5.5" height="4.6" fill="#fbfbfb" /><rect x="931.4" y="223.4" width="1.5" height="2" fill="#8c8c8c" /><rect x="966" y="220.6" width="14" height="5.2" fill="#e9e9e9" rx="1.6"/><rect x="966.5" y="220.3" width="5.5" height="4.6" fill="#fbfbfb" /><rect x="971.2" y="223.4" width="1.5" height="2" fill="#8c8c8c" /><rect x="922.5" y="231.14" width="15.5" height="5.2" fill="#e9e9e9" rx="1.6"/><rect x="932" y="230.84" width="5.5" height="4.6" fill="#fbfbfb" /><rect x="931.4" y="233.94" width="1.5" height="2" fill="#8c8c8c" /><rect x="966" y="231.14" width="14" height="5.2" fill="#e9e9e9" rx="1.6"/><rect x="966.5" y="230.84" width="5.5" height="4.6" fill="#fbfbfb" /><rect x="971.2" y="233.94" width="1.5" height="2" fill="#8c8c8c" /><rect x="922.5" y="241.68" width="15.5" height="5.2" fill="#e9e9e9" rx="1.6"/><rect x="932" y="241.38" width="5.5" height="4.6" fill="#fbfbfb" /><rect x="931.4" y="244.48" width="1.5" height="2" fill="#8c8c8c" /><rect x="966" y="241.68" width="14" height="5.2" fill="#e9e9e9" rx="1.6"/><rect x="966.5" y="241.38" width="5.5" height="4.6" fill="#fbfbfb" /><rect x="971.2" y="244.48" width="1.5" height="2" fill="#8c8c8c" /><rect x="937" y="162.5" width="30" height="83.5" fill="#161616" /><rect x="937.5" y="162.5" width="29" height="81.3" fill="#67615f" /><circle cx="943.5" cy="168.5" r="2.2" fill="#d8d2c4" /><path d="M934.5,249 L968,249" fill="none" stroke="#f4f4f4" stroke-width="1" /><text x="906" y="273.75" font-size="24.44" textLength="90" lengthAdjust="spacingAndGlyphs" stroke="#1e3a2b" stroke-width="0.49" fill="#f4f4f4">74ahc138</text><text x="943" y="299" font-size="12.57" textLength="14.5" lengthAdjust="spacingAndGlyphs" fill="#f4f4f4">U5</text><polygon points="925.7,299.1 931.3,299.1 928.5,303.5" fill="#f4f4f4" /><rect x="970.5" y="286.7" width="8.5" height="8.6" fill="#e8e8e8" rx="2.5"/><rect x="986" y="286.7" width="8.5" height="8.6" fill="#e8e8e8" rx="2.5"/><rect x="975.5" y="286.2" width="14" height="8" fill="#fdfdfd" /><rect x="978.4" y="286.2" width="8.2" height="8" fill="#b9978a" /><rect x="975.7" y="293" width="13.6" height="1.3" fill="#4a3028" /><text x="975.5" y="283.75" font-size="12.57" textLength="14.5" lengthAdjust="spacingAndGlyphs" fill="#f4f4f4">C9</text><rect x="922" y="304.4" width="15.5" height="5.2" fill="#e9e9e9" rx="1.6"/><rect x="931.5" y="304.1" width="5.5" height="4.6" fill="#fbfbfb" /><rect x="930.9" y="307.2" width="1.5" height="2" fill="#8c8c8c" /><rect x="966" y="304.4" width="13" height="5.2" fill="#e9e9e9" rx="1.6"/><rect x="966.5" y="304.1" width="5.5" height="4.6" fill="#fbfbfb" /><rect x="971.2" y="307.2" width="1.5" height="2" fill="#8c8c8c" /><rect x="922" y="314.94" width="15.5" height="5.2" fill="#e9e9e9" rx="1.6"/><rect x="931.5" y="314.64" width="5.5" height="4.6" fill="#fbfbfb" /><rect x="930.9" y="317.74" width="1.5" height="2" fill="#8c8c8c" /><rect x="966" y="314.94" width="13" height="5.2" fill="#e9e9e9" rx="1.6"/><rect x="966.5" y="314.64" width="5.5" height="4.6" fill="#fbfbfb" /><rect x="971.2" y="317.74" width="1.5" height="2" fill="#8c8c8c" /><rect x="922" y="325.48" width="15.5" height="5.2" fill="#e9e9e9" rx="1.6"/><rect x="931.5" y="325.18" width="5.5" height="4.6" fill="#fbfbfb" /><rect x="930.9" y="328.28" width="1.5" height="2" fill="#8c8c8c" /><rect x="966" y="325.48" width="13" height="5.2" fill="#e9e9e9" rx="1.6"/><rect x="966.5" y="325.18" width="5.5" height="4.6" fill="#fbfbfb" /><rect x="971.2" y="328.28" width="1.5" height="2" fill="#8c8c8c" /><rect x="922" y="336.02" width="15.5" height="5.2" fill="#e9e9e9" rx="1.6"/><rect x="931.5" y="335.72" width="5.5" height="4.6" fill="#fbfbfb" /><rect x="930.9" y="338.82" width="1.5" height="2" fill="#8c8c8c" /><rect x="966" y="336.02" width="13" height="5.2" fill="#e9e9e9" rx="1.6"/><rect x="966.5" y="335.72" width="5.5" height="4.6" fill="#fbfbfb" /><rect x="971.2" y="338.82" width="1.5" height="2" fill="#8c8c8c" /><rect x="922" y="346.56" width="15.5" height="5.2" fill="#e9e9e9" rx="1.6"/><rect x="931.5" y="346.26" width="5.5" height="4.6" fill="#fbfbfb" /><rect x="930.9" y="349.36" width="1.5" height="2" fill="#8c8c8c" /><rect x="966" y="346.56" width="13" height="5.2" fill="#e9e9e9" rx="1.6"/><rect x="966.5" y="346.26" width="5.5" height="4.6" fill="#fbfbfb" /><rect x="971.2" y="349.36" width="1.5" height="2" fill="#8c8c8c" /><rect x="922" y="357.1" width="15.5" height="5.2" fill="#e9e9e9" rx="1.6"/><rect x="931.5" y="356.8" width="5.5" height="4.6" fill="#fbfbfb" /><rect x="930.9" y="359.9" width="1.5" height="2" fill="#8c8c8c" /><rect x="966" y="357.1" width="13" height="5.2" fill="#e9e9e9" rx="1.6"/><rect x="966.5" y="356.8" width="5.5" height="4.6" fill="#fbfbfb" /><rect x="971.2" y="359.9" width="1.5" height="2" fill="#8c8c8c" /><rect x="922" y="367.64" width="15.5" height="5.2" fill="#e9e9e9" rx="1.6"/><rect x="931.5" y="367.34" width="5.5" height="4.6" fill="#fbfbfb" /><rect x="930.9" y="370.44" width="1.5" height="2" fill="#8c8c8c" /><rect x="966" y="367.64" width="13" height="5.2" fill="#e9e9e9" rx="1.6"/><rect x="966.5" y="367.34" width="5.5" height="4.6" fill="#fbfbfb" /><rect x="971.2" y="370.44" width="1.5" height="2" fill="#8c8c8c" /><rect x="936.5" y="299.5" width="30.5" height="71.5" fill="#161616" /><rect x="937" y="299.5" width="29.5" height="69.3" fill="#67615f" /><circle cx="943" cy="305.5" r="2.2" fill="#d8d2c4" /><path d="M934.5,374.5 L968,374.5" fill="none" stroke="#f4f4f4" stroke-width="1" /><text x="917.5" y="400" font-size="24.44" textLength="77.5" lengthAdjust="spacingAndGlyphs" stroke="#1e3a2b" stroke-width="0.49" fill="#f4f4f4">74ahc30</text><text x="1086" y="163.75" font-size="12.57" textLength="14.5" lengthAdjust="spacingAndGlyphs" fill="#f4f4f4">U8</text><polygon points="1080.7,166.8 1086.3,166.8 1083.5,171.2" fill="#f4f4f4" /><rect x="1076" y="172.4" width="14" height="5.2" fill="#e9e9e9" rx="1"/><rect x="1101" y="172.4" width="10.5" height="5.2" fill="#e9e9e9" rx="1"/><rect x="1076" y="180.7" width="14" height="5.2" fill="#e9e9e9" rx="1"/><rect x="1101" y="180.7" width="10.5" height="5.2" fill="#e9e9e9" rx="1"/><rect x="1076" y="189" width="14" height="5.2" fill="#e9e9e9" rx="1"/><rect x="1101" y="189" width="10.5" height="5.2" fill="#e9e9e9" rx="1"/><rect x="1089" y="168" width="13" height="25" fill="#151515" /><rect x="1089.5" y="168" width="12.5" height="22.5" fill="#67615f" /><path d="M1086,197 L1102,197" fill="none" stroke="#f4f4f4" stroke-width="1" /><rect x="1118" y="175.7" width="8.5" height="8.6" fill="#e8e8e8" rx="2.5"/><rect x="1132.5" y="175.7" width="8.5" height="8.6" fill="#e8e8e8" rx="2.5"/><rect x="1122.5" y="175.2" width="14" height="8" fill="#fdfdfd" /><rect x="1125.4" y="175.2" width="8.2" height="8" fill="#b9978a" /><rect x="1122.7" y="182" width="13.6" height="1.3" fill="#4a3028" /><text x="1118" y="173.75" font-size="12.57" textLength="23" lengthAdjust="spacingAndGlyphs" fill="#f4f4f4">C13</text><text x="1086" y="216.75" font-size="12.57" textLength="14.5" lengthAdjust="spacingAndGlyphs" fill="#f4f4f4">U9</text><polygon points="1080.7,220.3 1086.3,220.3 1083.5,224.7" fill="#f4f4f4" /><rect x="1076" y="225.9" width="14" height="5.2" fill="#e9e9e9" rx="1"/><rect x="1101" y="225.9" width="10.5" height="5.2" fill="#e9e9e9" rx="1"/><rect x="1076" y="234.2" width="14" height="5.2" fill="#e9e9e9" rx="1"/><rect x="1101" y="234.2" width="10.5" height="5.2" fill="#e9e9e9" rx="1"/><rect x="1076" y="242.5" width="14" height="5.2" fill="#e9e9e9" rx="1"/><rect x="1101" y="242.5" width="10.5" height="5.2" fill="#e9e9e9" rx="1"/><rect x="1089" y="221.5" width="13" height="25" fill="#151515" /><rect x="1089.5" y="221.5" width="12.5" height="22.5" fill="#67615f" /><path d="M1086,250.5 L1102,250.5" fill="none" stroke="#f4f4f4" stroke-width="1" /><rect x="1118" y="228.7" width="8.5" height="8.6" fill="#e8e8e8" rx="2.5"/><rect x="1132.5" y="228.7" width="8.5" height="8.6" fill="#e8e8e8" rx="2.5"/><rect x="1122.5" y="228.2" width="14" height="8" fill="#fdfdfd" /><rect x="1125.4" y="228.2" width="8.2" height="8" fill="#b9978a" /><rect x="1122.7" y="235" width="13.6" height="1.3" fill="#4a3028" /><text x="1118" y="226" font-size="12.57" textLength="23" lengthAdjust="spacingAndGlyphs" fill="#f4f4f4">C17</text><text x="1032" y="153" font-size="24.44" textLength="113" lengthAdjust="spacingAndGlyphs" stroke="#1e3a2b" stroke-width="0.49" fill="#f4f4f4">74ahc1g332</text><text x="1032" y="273" font-size="24.44" textLength="113" lengthAdjust="spacingAndGlyphs" stroke="#1e3a2b" stroke-width="0.49" fill="#f4f4f4">74ahc1g332</text><text x="804" y="424" font-size="12.57" textLength="15" lengthAdjust="spacingAndGlyphs" fill="#f4f4f4">U3</text><polygon points="769.2,424.3 774.8,424.3 772,428.7" fill="#f4f4f4" /><rect x="845" y="413.2" width="8.5" height="8.6" fill="#e8e8e8" rx="2.5"/><rect x="860.5" y="413.2" width="8.5" height="8.6" fill="#e8e8e8" rx="2.5"/><rect x="850" y="412.7" width="14" height="8" fill="#fdfdfd" /><rect x="852.9" y="412.7" width="8.2" height="8" fill="#b9978a" /><rect x="850.2" y="419.5" width="13.6" height="1.3" fill="#4a3028" /><text x="849" y="410" font-size="12.57" textLength="15.5" lengthAdjust="spacingAndGlyphs" fill="#f4f4f4">C6</text><rect x="764.5" y="430.4" width="16.5" height="5.2" fill="#e9e9e9" rx="1.6"/><rect x="775" y="430.1" width="5.5" height="4.6" fill="#fbfbfb" /><rect x="774.4" y="433.2" width="1.5" height="2" fill="#8c8c8c" /><rect x="839.5" y="430.4" width="18.5" height="5.2" fill="#e9e9e9" rx="1.6"/><rect x="840" y="430.1" width="5.5" height="4.6" fill="#fbfbfb" /><rect x="844.7" y="433.2" width="1.5" height="2" fill="#8c8c8c" /><rect x="764.5" y="440.94" width="16.5" height="5.2" fill="#e9e9e9" rx="1.6"/><rect x="775" y="440.64" width="5.5" height="4.6" fill="#fbfbfb" /><rect x="774.4" y="443.74" width="1.5" height="2" fill="#8c8c8c" /><rect x="839.5" y="440.94" width="18.5" height="5.2" fill="#e9e9e9" rx="1.6"/><rect x="840" y="440.64" width="5.5" height="4.6" fill="#fbfbfb" /><rect x="844.7" y="443.74" width="1.5" height="2" fill="#8c8c8c" /><rect x="764.5" y="451.48" width="16.5" height="5.2" fill="#e9e9e9" rx="1.6"/><rect x="775" y="451.18" width="5.5" height="4.6" fill="#fbfbfb" /><rect x="774.4" y="454.28" width="1.5" height="2" fill="#8c8c8c" /><rect x="839.5" y="451.48" width="18.5" height="5.2" fill="#e9e9e9" rx="1.6"/><rect x="840" y="451.18" width="5.5" height="4.6" fill="#fbfbfb" /><rect x="844.7" y="454.28" width="1.5" height="2" fill="#8c8c8c" /><rect x="764.5" y="462.02" width="16.5" height="5.2" fill="#e9e9e9" rx="1.6"/><rect x="775" y="461.72" width="5.5" height="4.6" fill="#fbfbfb" /><rect x="774.4" y="464.82" width="1.5" height="2" fill="#8c8c8c" /><rect x="839.5" y="462.02" width="18.5" height="5.2" fill="#e9e9e9" rx="1.6"/><rect x="840" y="461.72" width="5.5" height="4.6" fill="#fbfbfb" /><rect x="844.7" y="464.82" width="1.5" height="2" fill="#8c8c8c" /><rect x="764.5" y="472.56" width="16.5" height="5.2" fill="#e9e9e9" rx="1.6"/><rect x="775" y="472.26" width="5.5" height="4.6" fill="#fbfbfb" /><rect x="774.4" y="475.36" width="1.5" height="2" fill="#8c8c8c" /><rect x="839.5" y="472.56" width="18.5" height="5.2" fill="#e9e9e9" rx="1.6"/><rect x="840" y="472.26" width="5.5" height="4.6" fill="#fbfbfb" /><rect x="844.7" y="475.36" width="1.5" height="2" fill="#8c8c8c" /><rect x="764.5" y="483.1" width="16.5" height="5.2" fill="#e9e9e9" rx="1.6"/><rect x="775" y="482.8" width="5.5" height="4.6" fill="#fbfbfb" /><rect x="774.4" y="485.9" width="1.5" height="2" fill="#8c8c8c" /><rect x="839.5" y="483.1" width="18.5" height="5.2" fill="#e9e9e9" rx="1.6"/><rect x="840" y="482.8" width="5.5" height="4.6" fill="#fbfbfb" /><rect x="844.7" y="485.9" width="1.5" height="2" fill="#8c8c8c" /><rect x="764.5" y="493.64" width="16.5" height="5.2" fill="#e9e9e9" rx="1.6"/><rect x="775" y="493.34" width="5.5" height="4.6" fill="#fbfbfb" /><rect x="774.4" y="496.44" width="1.5" height="2" fill="#8c8c8c" /><rect x="839.5" y="493.64" width="18.5" height="5.2" fill="#e9e9e9" rx="1.6"/><rect x="840" y="493.34" width="5.5" height="4.6" fill="#fbfbfb" /><rect x="844.7" y="496.44" width="1.5" height="2" fill="#8c8c8c" /><rect x="764.5" y="504.18" width="16.5" height="5.2" fill="#e9e9e9" rx="1.6"/><rect x="775" y="503.88" width="5.5" height="4.6" fill="#fbfbfb" /><rect x="774.4" y="506.98" width="1.5" height="2" fill="#8c8c8c" /><rect x="839.5" y="504.18" width="18.5" height="5.2" fill="#e9e9e9" rx="1.6"/><rect x="840" y="503.88" width="5.5" height="4.6" fill="#fbfbfb" /><rect x="844.7" y="506.98" width="1.5" height="2" fill="#8c8c8c" /><rect x="764.5" y="514.72" width="16.5" height="5.2" fill="#e9e9e9" rx="1.6"/><rect x="775" y="514.42" width="5.5" height="4.6" fill="#fbfbfb" /><rect x="774.4" y="517.52" width="1.5" height="2" fill="#8c8c8c" /><rect x="839.5" y="514.72" width="18.5" height="5.2" fill="#e9e9e9" rx="1.6"/><rect x="840" y="514.42" width="5.5" height="4.6" fill="#fbfbfb" /><rect x="844.7" y="517.52" width="1.5" height="2" fill="#8c8c8c" /><rect x="764.5" y="525.26" width="16.5" height="5.2" fill="#e9e9e9" rx="1.6"/><rect x="775" y="524.96" width="5.5" height="4.6" fill="#fbfbfb" /><rect x="774.4" y="528.06" width="1.5" height="2" fill="#8c8c8c" /><rect x="839.5" y="525.26" width="18.5" height="5.2" fill="#e9e9e9" rx="1.6"/><rect x="840" y="524.96" width="5.5" height="4.6" fill="#fbfbfb" /><rect x="844.7" y="528.06" width="1.5" height="2" fill="#8c8c8c" /><rect x="764.5" y="535.8" width="16.5" height="5.2" fill="#e9e9e9" rx="1.6"/><rect x="775" y="535.5" width="5.5" height="4.6" fill="#fbfbfb" /><rect x="774.4" y="538.6" width="1.5" height="2" fill="#8c8c8c" /><rect x="839.5" y="535.8" width="18.5" height="5.2" fill="#e9e9e9" rx="1.6"/><rect x="840" y="535.5" width="5.5" height="4.6" fill="#fbfbfb" /><rect x="844.7" y="538.6" width="1.5" height="2" fill="#8c8c8c" /><rect x="764.5" y="546.34" width="16.5" height="5.2" fill="#e9e9e9" rx="1.6"/><rect x="775" y="546.04" width="5.5" height="4.6" fill="#fbfbfb" /><rect x="774.4" y="549.14" width="1.5" height="2" fill="#8c8c8c" /><rect x="839.5" y="546.34" width="18.5" height="5.2" fill="#e9e9e9" rx="1.6"/><rect x="840" y="546.04" width="5.5" height="4.6" fill="#fbfbfb" /><rect x="844.7" y="549.14" width="1.5" height="2" fill="#8c8c8c" /><rect x="764.5" y="556.88" width="16.5" height="5.2" fill="#e9e9e9" rx="1.6"/><rect x="775" y="556.58" width="5.5" height="4.6" fill="#fbfbfb" /><rect x="774.4" y="559.68" width="1.5" height="2" fill="#8c8c8c" /><rect x="839.5" y="556.88" width="18.5" height="5.2" fill="#e9e9e9" rx="1.6"/><rect x="840" y="556.58" width="5.5" height="4.6" fill="#fbfbfb" /><rect x="844.7" y="559.68" width="1.5" height="2" fill="#8c8c8c" /><rect x="764.5" y="567.42" width="16.5" height="5.2" fill="#e9e9e9" rx="1.6"/><rect x="775" y="567.12" width="5.5" height="4.6" fill="#fbfbfb" /><rect x="774.4" y="570.22" width="1.5" height="2" fill="#8c8c8c" /><rect x="839.5" y="567.42" width="18.5" height="5.2" fill="#e9e9e9" rx="1.6"/><rect x="840" y="567.12" width="5.5" height="4.6" fill="#fbfbfb" /><rect x="844.7" y="570.22" width="1.5" height="2" fill="#8c8c8c" /><rect x="780" y="426" width="60.5" height="148.5" fill="#161616" /><rect x="780.8" y="426.5" width="58.1" height="147" fill="#67615f" /><circle cx="786.5" cy="432" r="2.2" fill="#d8d2c4" /><path d="M778.5,428 L778.5,426.5 L783,426.5" fill="none" stroke="#f4f4f4" stroke-width="1" /><path d="M779,577 L843,577" fill="none" stroke="#f4f4f4" stroke-width="1" /><text x="779.5" y="615.5" font-size="24.44" textLength="56.5" lengthAdjust="spacingAndGlyphs" stroke="#1e3a2b" stroke-width="0.49" fill="#f4f4f4">62256</text><text x="959.5" y="422.5" font-size="12.57" textLength="14.5" lengthAdjust="spacingAndGlyphs" fill="#f4f4f4">U7</text><polygon points="926.7,424.3 932.3,424.3 929.5,428.7" fill="#f4f4f4" /><rect x="1002.5" y="413.2" width="8.5" height="8.6" fill="#e8e8e8" rx="2.5"/><rect x="1018" y="413.2" width="8.5" height="8.6" fill="#e8e8e8" rx="2.5"/><rect x="1007.5" y="412.7" width="14" height="8" fill="#fdfdfd" /><rect x="1010.4" y="412.7" width="8.2" height="8" fill="#b9978a" /><rect x="1007.7" y="419.5" width="13.6" height="1.3" fill="#4a3028" /><text x="1003" y="410" font-size="12.57" textLength="23" lengthAdjust="spacingAndGlyphs" fill="#f4f4f4">C12</text><rect x="922" y="430.4" width="19" height="5.2" fill="#e9e9e9" rx="1.6"/><rect x="935" y="430.1" width="5.5" height="4.6" fill="#fbfbfb" /><rect x="934.4" y="433.2" width="1.5" height="2" fill="#8c8c8c" /><rect x="999.5" y="430.4" width="15.5" height="5.2" fill="#e9e9e9" rx="1.6"/><rect x="1000" y="430.1" width="5.5" height="4.6" fill="#fbfbfb" /><rect x="1004.7" y="433.2" width="1.5" height="2" fill="#8c8c8c" /><rect x="922" y="440.94" width="19" height="5.2" fill="#e9e9e9" rx="1.6"/><rect x="935" y="440.64" width="5.5" height="4.6" fill="#fbfbfb" /><rect x="934.4" y="443.74" width="1.5" height="2" fill="#8c8c8c" /><rect x="999.5" y="440.94" width="15.5" height="5.2" fill="#e9e9e9" rx="1.6"/><rect x="1000" y="440.64" width="5.5" height="4.6" fill="#fbfbfb" /><rect x="1004.7" y="443.74" width="1.5" height="2" fill="#8c8c8c" /><rect x="922" y="451.48" width="19" height="5.2" fill="#e9e9e9" rx="1.6"/><rect x="935" y="451.18" width="5.5" height="4.6" fill="#fbfbfb" /><rect x="934.4" y="454.28" width="1.5" height="2" fill="#8c8c8c" /><rect x="999.5" y="451.48" width="15.5" height="5.2" fill="#e9e9e9" rx="1.6"/><rect x="1000" y="451.18" width="5.5" height="4.6" fill="#fbfbfb" /><rect x="1004.7" y="454.28" width="1.5" height="2" fill="#8c8c8c" /><rect x="922" y="462.02" width="19" height="5.2" fill="#e9e9e9" rx="1.6"/><rect x="935" y="461.72" width="5.5" height="4.6" fill="#fbfbfb" /><rect x="934.4" y="464.82" width="1.5" height="2" fill="#8c8c8c" /><rect x="999.5" y="462.02" width="15.5" height="5.2" fill="#e9e9e9" rx="1.6"/><rect x="1000" y="461.72" width="5.5" height="4.6" fill="#fbfbfb" /><rect x="1004.7" y="464.82" width="1.5" height="2" fill="#8c8c8c" /><rect x="922" y="472.56" width="19" height="5.2" fill="#e9e9e9" rx="1.6"/><rect x="935" y="472.26" width="5.5" height="4.6" fill="#fbfbfb" /><rect x="934.4" y="475.36" width="1.5" height="2" fill="#8c8c8c" /><rect x="999.5" y="472.56" width="15.5" height="5.2" fill="#e9e9e9" rx="1.6"/><rect x="1000" y="472.26" width="5.5" height="4.6" fill="#fbfbfb" /><rect x="1004.7" y="475.36" width="1.5" height="2" fill="#8c8c8c" /><rect x="922" y="483.1" width="19" height="5.2" fill="#e9e9e9" rx="1.6"/><rect x="935" y="482.8" width="5.5" height="4.6" fill="#fbfbfb" /><rect x="934.4" y="485.9" width="1.5" height="2" fill="#8c8c8c" /><rect x="999.5" y="483.1" width="15.5" height="5.2" fill="#e9e9e9" rx="1.6"/><rect x="1000" y="482.8" width="5.5" height="4.6" fill="#fbfbfb" /><rect x="1004.7" y="485.9" width="1.5" height="2" fill="#8c8c8c" /><rect x="922" y="493.64" width="19" height="5.2" fill="#e9e9e9" rx="1.6"/><rect x="935" y="493.34" width="5.5" height="4.6" fill="#fbfbfb" /><rect x="934.4" y="496.44" width="1.5" height="2" fill="#8c8c8c" /><rect x="999.5" y="493.64" width="15.5" height="5.2" fill="#e9e9e9" rx="1.6"/><rect x="1000" y="493.34" width="5.5" height="4.6" fill="#fbfbfb" /><rect x="1004.7" y="496.44" width="1.5" height="2" fill="#8c8c8c" /><rect x="922" y="504.18" width="19" height="5.2" fill="#e9e9e9" rx="1.6"/><rect x="935" y="503.88" width="5.5" height="4.6" fill="#fbfbfb" /><rect x="934.4" y="506.98" width="1.5" height="2" fill="#8c8c8c" /><rect x="999.5" y="504.18" width="15.5" height="5.2" fill="#e9e9e9" rx="1.6"/><rect x="1000" y="503.88" width="5.5" height="4.6" fill="#fbfbfb" /><rect x="1004.7" y="506.98" width="1.5" height="2" fill="#8c8c8c" /><rect x="922" y="514.72" width="19" height="5.2" fill="#e9e9e9" rx="1.6"/><rect x="935" y="514.42" width="5.5" height="4.6" fill="#fbfbfb" /><rect x="934.4" y="517.52" width="1.5" height="2" fill="#8c8c8c" /><rect x="999.5" y="514.72" width="15.5" height="5.2" fill="#e9e9e9" rx="1.6"/><rect x="1000" y="514.42" width="5.5" height="4.6" fill="#fbfbfb" /><rect x="1004.7" y="517.52" width="1.5" height="2" fill="#8c8c8c" /><rect x="922" y="525.26" width="19" height="5.2" fill="#e9e9e9" rx="1.6"/><rect x="935" y="524.96" width="5.5" height="4.6" fill="#fbfbfb" /><rect x="934.4" y="528.06" width="1.5" height="2" fill="#8c8c8c" /><rect x="999.5" y="525.26" width="15.5" height="5.2" fill="#e9e9e9" rx="1.6"/><rect x="1000" y="524.96" width="5.5" height="4.6" fill="#fbfbfb" /><rect x="1004.7" y="528.06" width="1.5" height="2" fill="#8c8c8c" /><rect x="922" y="535.8" width="19" height="5.2" fill="#e9e9e9" rx="1.6"/><rect x="935" y="535.5" width="5.5" height="4.6" fill="#fbfbfb" /><rect x="934.4" y="538.6" width="1.5" height="2" fill="#8c8c8c" /><rect x="999.5" y="535.8" width="15.5" height="5.2" fill="#e9e9e9" rx="1.6"/><rect x="1000" y="535.5" width="5.5" height="4.6" fill="#fbfbfb" /><rect x="1004.7" y="538.6" width="1.5" height="2" fill="#8c8c8c" /><rect x="922" y="546.34" width="19" height="5.2" fill="#e9e9e9" rx="1.6"/><rect x="935" y="546.04" width="5.5" height="4.6" fill="#fbfbfb" /><rect x="934.4" y="549.14" width="1.5" height="2" fill="#8c8c8c" /><rect x="999.5" y="546.34" width="15.5" height="5.2" fill="#e9e9e9" rx="1.6"/><rect x="1000" y="546.04" width="5.5" height="4.6" fill="#fbfbfb" /><rect x="1004.7" y="549.14" width="1.5" height="2" fill="#8c8c8c" /><rect x="922" y="556.88" width="19" height="5.2" fill="#e9e9e9" rx="1.6"/><rect x="935" y="556.58" width="5.5" height="4.6" fill="#fbfbfb" /><rect x="934.4" y="559.68" width="1.5" height="2" fill="#8c8c8c" /><rect x="999.5" y="556.88" width="15.5" height="5.2" fill="#e9e9e9" rx="1.6"/><rect x="1000" y="556.58" width="5.5" height="4.6" fill="#fbfbfb" /><rect x="1004.7" y="559.68" width="1.5" height="2" fill="#8c8c8c" /><rect x="922" y="567.42" width="19" height="5.2" fill="#e9e9e9" rx="1.6"/><rect x="935" y="567.12" width="5.5" height="4.6" fill="#fbfbfb" /><rect x="934.4" y="570.22" width="1.5" height="2" fill="#8c8c8c" /><rect x="999.5" y="567.42" width="15.5" height="5.2" fill="#e9e9e9" rx="1.6"/><rect x="1000" y="567.12" width="5.5" height="4.6" fill="#fbfbfb" /><rect x="1004.7" y="570.22" width="1.5" height="2" fill="#8c8c8c" /><rect x="940" y="426" width="60.5" height="148.5" fill="#161616" /><rect x="942" y="426.5" width="57.9" height="147" fill="#67615f" /><circle cx="946.5" cy="432" r="2.2" fill="#d8d2c4" /><path d="M936,577 L1001,577" fill="none" stroke="#f4f4f4" stroke-width="1" /><text x="942.5" y="615.5" font-size="24.44" textLength="57" lengthAdjust="spacingAndGlyphs" stroke="#1e3a2b" stroke-width="0.49" fill="#f4f4f4">62256</text><text x="1109.5" y="466" font-size="12.57" textLength="23" lengthAdjust="spacingAndGlyphs" fill="#f4f4f4">U12</text><polygon points="1079.2,466.3 1084.8,466.3 1082,470.7" fill="#f4f4f4" /><rect x="1154.5" y="455.2" width="8.5" height="8.6" fill="#e8e8e8" rx="2.5"/><rect x="1170" y="455.2" width="8.5" height="8.6" fill="#e8e8e8" rx="2.5"/><rect x="1159.5" y="454.7" width="14" height="8" fill="#fdfdfd" /><rect x="1162.4" y="454.7" width="8.2" height="8" fill="#b9978a" /><rect x="1159.7" y="461.5" width="13.6" height="1.3" fill="#4a3028" /><text x="1155.5" y="452" font-size="12.57" textLength="22.5" lengthAdjust="spacingAndGlyphs" fill="#f4f4f4">C18</text><rect x="1074.5" y="472.4" width="20.5" height="5.2" fill="#e9e9e9" rx="1.6"/><rect x="1089" y="472.1" width="5.5" height="4.6" fill="#fbfbfb" /><rect x="1088.4" y="475.2" width="1.5" height="2" fill="#8c8c8c" /><rect x="1154.5" y="472.4" width="13" height="5.2" fill="#e9e9e9" rx="1.6"/><rect x="1155" y="472.1" width="5.5" height="4.6" fill="#fbfbfb" /><rect x="1159.7" y="475.2" width="1.5" height="2" fill="#8c8c8c" /><rect x="1074.5" y="482.94" width="20.5" height="5.2" fill="#e9e9e9" rx="1.6"/><rect x="1089" y="482.64" width="5.5" height="4.6" fill="#fbfbfb" /><rect x="1088.4" y="485.74" width="1.5" height="2" fill="#8c8c8c" /><rect x="1154.5" y="482.94" width="13" height="5.2" fill="#e9e9e9" rx="1.6"/><rect x="1155" y="482.64" width="5.5" height="4.6" fill="#fbfbfb" /><rect x="1159.7" y="485.74" width="1.5" height="2" fill="#8c8c8c" /><rect x="1074.5" y="493.48" width="20.5" height="5.2" fill="#e9e9e9" rx="1.6"/><rect x="1089" y="493.18" width="5.5" height="4.6" fill="#fbfbfb" /><rect x="1088.4" y="496.28" width="1.5" height="2" fill="#8c8c8c" /><rect x="1154.5" y="493.48" width="13" height="5.2" fill="#e9e9e9" rx="1.6"/><rect x="1155" y="493.18" width="5.5" height="4.6" fill="#fbfbfb" /><rect x="1159.7" y="496.28" width="1.5" height="2" fill="#8c8c8c" /><rect x="1074.5" y="504.02" width="20.5" height="5.2" fill="#e9e9e9" rx="1.6"/><rect x="1089" y="503.72" width="5.5" height="4.6" fill="#fbfbfb" /><rect x="1088.4" y="506.82" width="1.5" height="2" fill="#8c8c8c" /><rect x="1154.5" y="504.02" width="13" height="5.2" fill="#e9e9e9" rx="1.6"/><rect x="1155" y="503.72" width="5.5" height="4.6" fill="#fbfbfb" /><rect x="1159.7" y="506.82" width="1.5" height="2" fill="#8c8c8c" /><rect x="1074.5" y="514.56" width="20.5" height="5.2" fill="#e9e9e9" rx="1.6"/><rect x="1089" y="514.26" width="5.5" height="4.6" fill="#fbfbfb" /><rect x="1088.4" y="517.36" width="1.5" height="2" fill="#8c8c8c" /><rect x="1154.5" y="514.56" width="13" height="5.2" fill="#e9e9e9" rx="1.6"/><rect x="1155" y="514.26" width="5.5" height="4.6" fill="#fbfbfb" /><rect x="1159.7" y="517.36" width="1.5" height="2" fill="#8c8c8c" /><rect x="1074.5" y="525.1" width="20.5" height="5.2" fill="#e9e9e9" rx="1.6"/><rect x="1089" y="524.8" width="5.5" height="4.6" fill="#fbfbfb" /><rect x="1088.4" y="527.9" width="1.5" height="2" fill="#8c8c8c" /><rect x="1154.5" y="525.1" width="13" height="5.2" fill="#e9e9e9" rx="1.6"/><rect x="1155" y="524.8" width="5.5" height="4.6" fill="#fbfbfb" /><rect x="1159.7" y="527.9" width="1.5" height="2" fill="#8c8c8c" /><rect x="1074.5" y="535.64" width="20.5" height="5.2" fill="#e9e9e9" rx="1.6"/><rect x="1089" y="535.34" width="5.5" height="4.6" fill="#fbfbfb" /><rect x="1088.4" y="538.44" width="1.5" height="2" fill="#8c8c8c" /><rect x="1154.5" y="535.64" width="13" height="5.2" fill="#e9e9e9" rx="1.6"/><rect x="1155" y="535.34" width="5.5" height="4.6" fill="#fbfbfb" /><rect x="1159.7" y="538.44" width="1.5" height="2" fill="#8c8c8c" /><rect x="1074.5" y="546.18" width="20.5" height="5.2" fill="#e9e9e9" rx="1.6"/><rect x="1089" y="545.88" width="5.5" height="4.6" fill="#fbfbfb" /><rect x="1088.4" y="548.98" width="1.5" height="2" fill="#8c8c8c" /><rect x="1154.5" y="546.18" width="13" height="5.2" fill="#e9e9e9" rx="1.6"/><rect x="1155" y="545.88" width="5.5" height="4.6" fill="#fbfbfb" /><rect x="1159.7" y="548.98" width="1.5" height="2" fill="#8c8c8c" /><rect x="1074.5" y="556.72" width="20.5" height="5.2" fill="#e9e9e9" rx="1.6"/><rect x="1089" y="556.42" width="5.5" height="4.6" fill="#fbfbfb" /><rect x="1088.4" y="559.52" width="1.5" height="2" fill="#8c8c8c" /><rect x="1154.5" y="556.72" width="13" height="5.2" fill="#e9e9e9" rx="1.6"/><rect x="1155" y="556.42" width="5.5" height="4.6" fill="#fbfbfb" /><rect x="1159.7" y="559.52" width="1.5" height="2" fill="#8c8c8c" /><rect x="1074.5" y="567.26" width="20.5" height="5.2" fill="#e9e9e9" rx="1.6"/><rect x="1089" y="566.96" width="5.5" height="4.6" fill="#fbfbfb" /><rect x="1088.4" y="570.06" width="1.5" height="2" fill="#8c8c8c" /><rect x="1154.5" y="567.26" width="13" height="5.2" fill="#e9e9e9" rx="1.6"/><rect x="1155" y="566.96" width="5.5" height="4.6" fill="#fbfbfb" /><rect x="1159.7" y="570.06" width="1.5" height="2" fill="#8c8c8c" /><rect x="1094" y="469.5" width="61.5" height="105" fill="#161616" /><rect x="1096" y="470" width="58.9" height="103.5" fill="#67615f" /><circle cx="1100.5" cy="475.5" r="2.2" fill="#d8d2c4" /><path d="M1089,577 L1153,577" fill="none" stroke="#f4f4f4" stroke-width="1" /><text x="1079.5" y="615.5" font-size="24.44" textLength="90" lengthAdjust="spacingAndGlyphs" stroke="#1e3a2b" stroke-width="0.49" fill="#f4f4f4">74ahc245</text><text x="1007" y="615" font-size="12.57" textLength="15" lengthAdjust="spacingAndGlyphs" fill="#f4f4f4">C7</text><rect x="1002.5" y="618.2" width="8.5" height="8.6" fill="#e8e8e8" rx="2.5"/><rect x="1018" y="618.2" width="8.5" height="8.6" fill="#e8e8e8" rx="2.5"/><rect x="1007.5" y="618.5" width="14" height="8" fill="#fdfdfd" /><rect x="1010.4" y="618.5" width="8.2" height="8" fill="#b9978a" /><rect x="1007.7" y="618.5" width="13.6" height="1.3" fill="#4a3028" /><text x="955.5" y="627" font-size="12.57" textLength="22.5" lengthAdjust="spacingAndGlyphs" fill="#f4f4f4">U14</text><polygon points="924.7,628.3 930.3,628.3 927.5,632.7" fill="#f4f4f4" /><path d="M934,632 L998,632" fill="none" stroke="#f4f4f4" stroke-width="1" /><rect x="920" y="635.4" width="19" height="5.2" fill="#e9e9e9" rx="1.6"/><rect x="933" y="635.1" width="5.5" height="4.6" fill="#fbfbfb" /><rect x="932.4" y="638.2" width="1.5" height="2" fill="#8c8c8c" /><rect x="998" y="635.4" width="16" height="5.2" fill="#e9e9e9" rx="1.6"/><rect x="998.5" y="635.1" width="5.5" height="4.6" fill="#fbfbfb" /><rect x="1003.2" y="638.2" width="1.5" height="2" fill="#8c8c8c" /><rect x="920" y="645.94" width="19" height="5.2" fill="#e9e9e9" rx="1.6"/><rect x="933" y="645.64" width="5.5" height="4.6" fill="#fbfbfb" /><rect x="932.4" y="648.74" width="1.5" height="2" fill="#8c8c8c" /><rect x="998" y="645.94" width="16" height="5.2" fill="#e9e9e9" rx="1.6"/><rect x="998.5" y="645.64" width="5.5" height="4.6" fill="#fbfbfb" /><rect x="1003.2" y="648.74" width="1.5" height="2" fill="#8c8c8c" /><rect x="920" y="656.48" width="19" height="5.2" fill="#e9e9e9" rx="1.6"/><rect x="933" y="656.18" width="5.5" height="4.6" fill="#fbfbfb" /><rect x="932.4" y="659.28" width="1.5" height="2" fill="#8c8c8c" /><rect x="998" y="656.48" width="16" height="5.2" fill="#e9e9e9" rx="1.6"/><rect x="998.5" y="656.18" width="5.5" height="4.6" fill="#fbfbfb" /><rect x="1003.2" y="659.28" width="1.5" height="2" fill="#8c8c8c" /><rect x="920" y="667.02" width="19" height="5.2" fill="#e9e9e9" rx="1.6"/><rect x="933" y="666.72" width="5.5" height="4.6" fill="#fbfbfb" /><rect x="932.4" y="669.82" width="1.5" height="2" fill="#8c8c8c" /><rect x="998" y="667.02" width="16" height="5.2" fill="#e9e9e9" rx="1.6"/><rect x="998.5" y="666.72" width="5.5" height="4.6" fill="#fbfbfb" /><rect x="1003.2" y="669.82" width="1.5" height="2" fill="#8c8c8c" /><rect x="920" y="677.56" width="19" height="5.2" fill="#e9e9e9" rx="1.6"/><rect x="933" y="677.26" width="5.5" height="4.6" fill="#fbfbfb" /><rect x="932.4" y="680.36" width="1.5" height="2" fill="#8c8c8c" /><rect x="998" y="677.56" width="16" height="5.2" fill="#e9e9e9" rx="1.6"/><rect x="998.5" y="677.26" width="5.5" height="4.6" fill="#fbfbfb" /><rect x="1003.2" y="680.36" width="1.5" height="2" fill="#8c8c8c" /><rect x="920" y="688.1" width="19" height="5.2" fill="#e9e9e9" rx="1.6"/><rect x="933" y="687.8" width="5.5" height="4.6" fill="#fbfbfb" /><rect x="932.4" y="690.9" width="1.5" height="2" fill="#8c8c8c" /><rect x="998" y="688.1" width="16" height="5.2" fill="#e9e9e9" rx="1.6"/><rect x="998.5" y="687.8" width="5.5" height="4.6" fill="#fbfbfb" /><rect x="1003.2" y="690.9" width="1.5" height="2" fill="#8c8c8c" /><rect x="920" y="698.64" width="19" height="5.2" fill="#e9e9e9" rx="1.6"/><rect x="933" y="698.34" width="5.5" height="4.6" fill="#fbfbfb" /><rect x="932.4" y="701.44" width="1.5" height="2" fill="#8c8c8c" /><rect x="998" y="698.64" width="16" height="5.2" fill="#e9e9e9" rx="1.6"/><rect x="998.5" y="698.34" width="5.5" height="4.6" fill="#fbfbfb" /><rect x="1003.2" y="701.44" width="1.5" height="2" fill="#8c8c8c" /><rect x="920" y="709.18" width="19" height="5.2" fill="#e9e9e9" rx="1.6"/><rect x="933" y="708.88" width="5.5" height="4.6" fill="#fbfbfb" /><rect x="932.4" y="711.98" width="1.5" height="2" fill="#8c8c8c" /><rect x="998" y="709.18" width="16" height="5.2" fill="#e9e9e9" rx="1.6"/><rect x="998.5" y="708.88" width="5.5" height="4.6" fill="#fbfbfb" /><rect x="1003.2" y="711.98" width="1.5" height="2" fill="#8c8c8c" /><rect x="920" y="719.72" width="19" height="5.2" fill="#e9e9e9" rx="1.6"/><rect x="933" y="719.42" width="5.5" height="4.6" fill="#fbfbfb" /><rect x="932.4" y="722.52" width="1.5" height="2" fill="#8c8c8c" /><rect x="998" y="719.72" width="16" height="5.2" fill="#e9e9e9" rx="1.6"/><rect x="998.5" y="719.42" width="5.5" height="4.6" fill="#fbfbfb" /><rect x="1003.2" y="722.52" width="1.5" height="2" fill="#8c8c8c" /><rect x="920" y="730.26" width="19" height="5.2" fill="#e9e9e9" rx="1.6"/><rect x="933" y="729.96" width="5.5" height="4.6" fill="#fbfbfb" /><rect x="932.4" y="733.06" width="1.5" height="2" fill="#8c8c8c" /><rect x="998" y="730.26" width="16" height="5.2" fill="#e9e9e9" rx="1.6"/><rect x="998.5" y="729.96" width="5.5" height="4.6" fill="#fbfbfb" /><rect x="1003.2" y="733.06" width="1.5" height="2" fill="#8c8c8c" /><rect x="938" y="634.5" width="61" height="105.5" fill="#161616" /><rect x="938.5" y="636.5" width="60" height="103" fill="#67615f" /><circle cx="944.5" cy="640.5" r="2.2" fill="#d8d2c4" /><text x="859" y="762.5" font-size="24.44" textLength="88.5" lengthAdjust="spacingAndGlyphs" stroke="#1e3a2b" stroke-width="0.49" fill="#f4f4f4">74ahc541</text><rect x="1223" y="164" width="11" height="13.4" fill="#ffff3c" /><rect x="1406" y="164" width="8.1" height="13.4" fill="#ffff3c" /><text x="1221.5" y="167" font-size="10.61" text-anchor="end" textLength="17.5" lengthAdjust="spacingAndGlyphs" transform="rotate(-45 1221.5 167)" font-weight="700" fill="#f4f4f4">GP0</text><text x="1423" y="179.7" font-size="10.61" textLength="23.3" lengthAdjust="spacingAndGlyphs" transform="rotate(-45 1423 179.7)" font-weight="700" fill="#f4f4f4">VBUS</text><rect x="1223" y="185.01" width="11" height="13.4" fill="#ffff3c" /><rect x="1406" y="185.01" width="8.1" height="13.4" fill="#ffff3c" /><text x="1221.5" y="187.93" font-size="10.61" text-anchor="end" textLength="17.5" lengthAdjust="spacingAndGlyphs" transform="rotate(-45 1221.5 187.93)" font-weight="700" fill="#f4f4f4">GP1</text><text x="1422.9" y="200.8" font-size="10.61" textLength="23.3" lengthAdjust="spacingAndGlyphs" transform="rotate(-45 1422.9 200.8)" font-weight="700" fill="#f4f4f4">VSYS</text><rect x="1223" y="206.02" width="11" height="13.4" fill="#ffff3c" /><rect x="1406" y="206.02" width="8.1" height="13.4" fill="#ffff3c" /><text x="1221.5" y="208.86" font-size="10.61" text-anchor="end" textLength="17.5" lengthAdjust="spacingAndGlyphs" transform="rotate(-45 1221.5 208.86)" font-weight="700" fill="#f4f4f4">GND</text><text x="1422.8" y="221.9" font-size="10.61" textLength="17.5" lengthAdjust="spacingAndGlyphs" transform="rotate(-45 1422.8 221.9)" font-weight="700" fill="#f4f4f4">GND</text><rect x="1223" y="227.03" width="11" height="13.4" fill="#ffff3c" /><rect x="1406" y="227.03" width="8.1" height="13.4" fill="#ffff3c" /><text x="1221.5" y="229.79" font-size="10.61" text-anchor="end" textLength="17.5" lengthAdjust="spacingAndGlyphs" transform="rotate(-45 1221.5 229.79)" font-weight="700" fill="#f4f4f4">GP2</text><text x="1422.7" y="243" font-size="10.61" textLength="35.5" lengthAdjust="spacingAndGlyphs" transform="rotate(-45 1422.7 243)" font-weight="700" fill="#f4f4f4">3V3_EN</text><rect x="1223" y="248.04" width="11" height="13.4" fill="#ffff3c" /><rect x="1406" y="248.04" width="8.1" height="13.4" fill="#ffff3c" /><text x="1221.5" y="250.72" font-size="10.61" text-anchor="end" textLength="17.5" lengthAdjust="spacingAndGlyphs" transform="rotate(-45 1221.5 250.72)" font-weight="700" fill="#f4f4f4">GP3</text><text x="1422.6" y="264.1" font-size="10.61" textLength="17.5" lengthAdjust="spacingAndGlyphs" transform="rotate(-45 1422.6 264.1)" font-weight="700" fill="#f4f4f4">3V3</text><rect x="1223" y="269.05" width="11" height="13.4" fill="#ffff3c" /><rect x="1406" y="269.05" width="8.1" height="13.4" fill="#ffff3c" /><text x="1221.5" y="271.65" font-size="10.61" text-anchor="end" textLength="17.5" lengthAdjust="spacingAndGlyphs" transform="rotate(-45 1221.5 271.65)" font-weight="700" fill="#f4f4f4">GP4</text><text x="1422.5" y="285.2" font-size="10.61" textLength="43.5" lengthAdjust="spacingAndGlyphs" transform="rotate(-45 1422.5 285.2)" font-weight="700" fill="#f4f4f4">ADC_VREF</text><rect x="1223" y="290.06" width="11" height="13.4" fill="#ffff3c" /><rect x="1406" y="290.06" width="8.1" height="13.4" fill="#ffff3c" /><text x="1221.5" y="292.58" font-size="10.61" text-anchor="end" textLength="17.5" lengthAdjust="spacingAndGlyphs" transform="rotate(-45 1221.5 292.58)" font-weight="700" fill="#f4f4f4">GP5</text><text x="1422.4" y="306.3" font-size="10.61" textLength="23.3" lengthAdjust="spacingAndGlyphs" transform="rotate(-45 1422.4 306.3)" font-weight="700" fill="#f4f4f4">GP28</text><rect x="1223" y="311.07" width="11" height="13.4" fill="#ffff3c" /><rect x="1406" y="311.07" width="8.1" height="13.4" fill="#ffff3c" /><text x="1221.5" y="313.51" font-size="10.61" text-anchor="end" textLength="17.5" lengthAdjust="spacingAndGlyphs" transform="rotate(-45 1221.5 313.51)" font-weight="700" fill="#f4f4f4">GND</text><text x="1422.3" y="327.4" font-size="10.61" textLength="23.3" lengthAdjust="spacingAndGlyphs" transform="rotate(-45 1422.3 327.4)" font-weight="700" fill="#f4f4f4">AGND</text><rect x="1223" y="332.08" width="11" height="13.4" fill="#ffff3c" /><rect x="1406" y="332.08" width="8.1" height="13.4" fill="#ffff3c" /><text x="1221.5" y="334.44" font-size="10.61" text-anchor="end" textLength="17.5" lengthAdjust="spacingAndGlyphs" transform="rotate(-45 1221.5 334.44)" font-weight="700" fill="#f4f4f4">GP6</text><text x="1422.2" y="348.5" font-size="10.61" textLength="23.3" lengthAdjust="spacingAndGlyphs" transform="rotate(-45 1422.2 348.5)" font-weight="700" fill="#f4f4f4">GP27</text><rect x="1223" y="353.09" width="11" height="13.4" fill="#ffff3c" /><rect x="1406" y="353.09" width="8.1" height="13.4" fill="#ffff3c" /><text x="1221.5" y="355.37" font-size="10.61" text-anchor="end" textLength="17.5" lengthAdjust="spacingAndGlyphs" transform="rotate(-45 1221.5 355.37)" font-weight="700" fill="#f4f4f4">GP7</text><text x="1422.1" y="369.6" font-size="10.61" textLength="23.3" lengthAdjust="spacingAndGlyphs" transform="rotate(-45 1422.1 369.6)" font-weight="700" fill="#f4f4f4">GP26</text><rect x="1223" y="374.1" width="11" height="13.4" fill="#ffff3c" /><rect x="1406" y="374.1" width="8.1" height="13.4" fill="#ffff3c" /><text x="1221.5" y="376.3" font-size="10.61" text-anchor="end" textLength="17.5" lengthAdjust="spacingAndGlyphs" transform="rotate(-45 1221.5 376.3)" font-weight="700" fill="#f4f4f4">GP8</text><text x="1422" y="390.7" font-size="10.61" textLength="17.5" lengthAdjust="spacingAndGlyphs" transform="rotate(-45 1422 390.7)" font-weight="700" fill="#f4f4f4">RUN</text><rect x="1223" y="395.11" width="11" height="13.4" fill="#ffff3c" /><rect x="1406" y="395.11" width="8.1" height="13.4" fill="#ffff3c" /><text x="1221.5" y="397.23" font-size="10.61" text-anchor="end" textLength="17.5" lengthAdjust="spacingAndGlyphs" transform="rotate(-45 1221.5 397.23)" font-weight="700" fill="#f4f4f4">GP9</text><text x="1421.9" y="411.8" font-size="10.61" textLength="23.3" lengthAdjust="spacingAndGlyphs" transform="rotate(-45 1421.9 411.8)" font-weight="700" fill="#f4f4f4">GP22</text><rect x="1223" y="416.12" width="11" height="13.4" fill="#ffff3c" /><rect x="1406" y="416.12" width="8.1" height="13.4" fill="#ffff3c" /><text x="1221.5" y="418.16" font-size="10.61" text-anchor="end" textLength="17.5" lengthAdjust="spacingAndGlyphs" transform="rotate(-45 1221.5 418.16)" font-weight="700" fill="#f4f4f4">GND</text><text x="1421.8" y="432.9" font-size="10.61" textLength="17.5" lengthAdjust="spacingAndGlyphs" transform="rotate(-45 1421.8 432.9)" font-weight="700" fill="#f4f4f4">GND</text><rect x="1223" y="437.13" width="11" height="13.4" fill="#ffff3c" /><rect x="1406" y="437.13" width="8.1" height="13.4" fill="#ffff3c" /><text x="1221.5" y="439.09" font-size="10.61" text-anchor="end" textLength="23.3" lengthAdjust="spacingAndGlyphs" transform="rotate(-45 1221.5 439.09)" font-weight="700" fill="#f4f4f4">GP10</text><text x="1421.7" y="454" font-size="10.61" textLength="23.3" lengthAdjust="spacingAndGlyphs" transform="rotate(-45 1421.7 454)" font-weight="700" fill="#f4f4f4">GP21</text><rect x="1223" y="458.14" width="11" height="13.4" fill="#ffff3c" /><rect x="1406" y="458.14" width="8.1" height="13.4" fill="#ffff3c" /><text x="1221.5" y="460.02" font-size="10.61" text-anchor="end" textLength="23.3" lengthAdjust="spacingAndGlyphs" transform="rotate(-45 1221.5 460.02)" font-weight="700" fill="#f4f4f4">GP11</text><text x="1421.6" y="475.1" font-size="10.61" textLength="23.3" lengthAdjust="spacingAndGlyphs" transform="rotate(-45 1421.6 475.1)" font-weight="700" fill="#f4f4f4">GP20</text><rect x="1223" y="479.15" width="11" height="13.4" fill="#ffff3c" /><rect x="1406" y="479.15" width="8.1" height="13.4" fill="#ffff3c" /><text x="1221.5" y="480.95" font-size="10.61" text-anchor="end" textLength="23.3" lengthAdjust="spacingAndGlyphs" transform="rotate(-45 1221.5 480.95)" font-weight="700" fill="#f4f4f4">GP12</text><text x="1421.5" y="496.2" font-size="10.61" textLength="23.3" lengthAdjust="spacingAndGlyphs" transform="rotate(-45 1421.5 496.2)" font-weight="700" fill="#f4f4f4">GP19</text><rect x="1223" y="500.16" width="11" height="13.4" fill="#ffff3c" /><rect x="1406" y="500.16" width="8.1" height="13.4" fill="#ffff3c" /><text x="1221.5" y="501.88" font-size="10.61" text-anchor="end" textLength="23.3" lengthAdjust="spacingAndGlyphs" transform="rotate(-45 1221.5 501.88)" font-weight="700" fill="#f4f4f4">GP13</text><text x="1421.4" y="517.3" font-size="10.61" textLength="23.3" lengthAdjust="spacingAndGlyphs" transform="rotate(-45 1421.4 517.3)" font-weight="700" fill="#f4f4f4">GP18</text><rect x="1223" y="521.17" width="11" height="13.4" fill="#ffff3c" /><rect x="1406" y="521.17" width="8.1" height="13.4" fill="#ffff3c" /><text x="1221.5" y="522.81" font-size="10.61" text-anchor="end" textLength="17.5" lengthAdjust="spacingAndGlyphs" transform="rotate(-45 1221.5 522.81)" font-weight="700" fill="#f4f4f4">GND</text><text x="1421.3" y="538.4" font-size="10.61" textLength="17.5" lengthAdjust="spacingAndGlyphs" transform="rotate(-45 1421.3 538.4)" font-weight="700" fill="#f4f4f4">GND</text><rect x="1223" y="542.18" width="11" height="13.4" fill="#ffff3c" /><rect x="1406" y="542.18" width="8.1" height="13.4" fill="#ffff3c" /><text x="1221.5" y="543.74" font-size="10.61" text-anchor="end" textLength="23.3" lengthAdjust="spacingAndGlyphs" transform="rotate(-45 1221.5 543.74)" font-weight="700" fill="#f4f4f4">GP14</text><text x="1421.2" y="559.5" font-size="10.61" textLength="23.3" lengthAdjust="spacingAndGlyphs" transform="rotate(-45 1421.2 559.5)" font-weight="700" fill="#f4f4f4">GP17</text><rect x="1223" y="563.19" width="11" height="13.4" fill="#ffff3c" /><rect x="1406" y="563.19" width="8.1" height="13.4" fill="#ffff3c" /><text x="1221.5" y="564.67" font-size="10.61" text-anchor="end" textLength="23.3" lengthAdjust="spacingAndGlyphs" transform="rotate(-45 1221.5 564.67)" font-weight="700" fill="#f4f4f4">GP15</text><text x="1421.1" y="580.6" font-size="10.61" textLength="23.3" lengthAdjust="spacingAndGlyphs" transform="rotate(-45 1421.1 580.6)" font-weight="700" fill="#f4f4f4">GP16</text><rect x="1291" y="581" width="13.5" height="9.5" fill="#ffff3c" /><rect x="1312" y="581" width="13.5" height="9.5" fill="#ffff3c" /><rect x="1333" y="581" width="13.5" height="9.5" fill="#ffff3c" /><text x="1256" y="590" font-size="10.61" textLength="31.5" lengthAdjust="spacingAndGlyphs" stroke="#1e3a2b" stroke-width="0.3" font-weight="700" fill="#f4f4f4">SWCLK</text><text x="1351" y="590" font-size="10.61" textLength="29.5" lengthAdjust="spacingAndGlyphs" stroke="#1e3a2b" stroke-width="0.3" font-weight="700" fill="#f4f4f4">SWDIO</text><text x="1295" y="620" font-size="24.44" textLength="66" lengthAdjust="spacingAndGlyphs" stroke="#1e3a2b" stroke-width="0.49" fill="#f4f4f4">Pi Pico</text><rect x="1446.75" y="222.2" width="8.5" height="8.5" fill="#e8e8e8" rx="2.5"/><rect x="1446.75" y="236.7" width="8.5" height="8.5" fill="#e8e8e8" rx="2.5"/><rect x="1447.35" y="226.7" width="8.1" height="14" fill="#fdfdfd" /><rect x="1447.35" y="229.6" width="8.1" height="8.2" fill="#b9978a" /><rect x="1447.35" y="226.9" width="1.8" height="13.6" fill="#2a1c18" /><text x="1470" y="245" font-size="12.57" textLength="23" lengthAdjust="spacingAndGlyphs" transform="rotate(-90 1470 245)" fill="#f4f4f4">C19</text><rect x="1232.4" y="158" width="178" height="424" fill="#10200f" /><rect x="1235" y="156" width="175" height="424.5" fill="#5dc000" /><path d="M1235,160.5H1248A7,7 0 0 1 1248,174.5H1235Z" fill="#ffe800"/><path d="M1410,160.5H1397A7,7 0 0 0 1397,174.5H1410Z" fill="#ffe800"/><path d="M1235,162.5A5,5 0 0 1 1235,172.5Z" fill="#4a3a00"/><path d="M1232.400,165.1H1233A4,4 0 0 1 1233,173.1H1232.400Z" fill="#ffff3c"/><circle cx="1248" cy="167.5" r="4.3" fill="#4a3800" /><ellipse cx="1247.1" cy="167.8" rx="3.300" ry="3.900" fill="#060600"/><circle cx="1396" cy="167.5" r="4.3" fill="#4a3800" /><ellipse cx="1395.1" cy="167.8" rx="3.300" ry="3.900" fill="#060600"/><path d="M1410,164.8A4.300,4.300 0 0 0 1410,173.4Z" fill="#ffff55"/><path d="M1235,181.68H1248A7,7 0 0 1 1248,195.68H1235Z" fill="#ffe800"/><path d="M1410,181.68H1397A7,7 0 0 0 1397,195.68H1410Z" fill="#ffe800"/><path d="M1235,183.68A5,5 0 0 1 1235,193.68Z" fill="#4a3a00"/><path d="M1232.400,186.19H1233A4,4 0 0 1 1233,194.19H1232.400Z" fill="#ffff3c"/><circle cx="1248" cy="188.68" r="4.3" fill="#4a3800" /><ellipse cx="1247.1" cy="188.98" rx="3.300" ry="3.900" fill="#060600"/><circle cx="1396" cy="188.68" r="4.3" fill="#4a3800" /><ellipse cx="1395.1" cy="188.98" rx="3.300" ry="3.900" fill="#060600"/><path d="M1410,185.89A4.300,4.300 0 0 0 1410,194.5Z" fill="#ffff55"/><rect x="1235" y="202.86" width="20" height="14" fill="#ffe800" /><rect x="1390" y="202.86" width="20" height="14" fill="#ffe800" /><path d="M1235,204.86A5,5 0 0 1 1235,214.86Z" fill="#4a3a00"/><path d="M1232.400,207.29H1233A4,4 0 0 1 1233,215.29H1232.400Z" fill="#ffff3c"/><circle cx="1248" cy="209.86" r="4.3" fill="#4a3800" /><ellipse cx="1247.1" cy="210.16" rx="3.300" ry="3.900" fill="#060600"/><circle cx="1396" cy="209.86" r="4.3" fill="#4a3800" /><ellipse cx="1395.1" cy="210.16" rx="3.300" ry="3.900" fill="#060600"/><path d="M1410,206.99A4.300,4.300 0 0 0 1410,215.59Z" fill="#ffff55"/><path d="M1235,224.04H1248A7,7 0 0 1 1248,238.04H1235Z" fill="#ffe800"/><path d="M1410,224.04H1397A7,7 0 0 0 1397,238.04H1410Z" fill="#ffe800"/><path d="M1235,226.04A5,5 0 0 1 1235,236.04Z" fill="#4a3a00"/><path d="M1232.400,228.38H1233A4,4 0 0 1 1233,236.38H1232.400Z" fill="#ffff3c"/><circle cx="1248" cy="231.04" r="4.3" fill="#4a3800" /><ellipse cx="1247.1" cy="231.34" rx="3.300" ry="3.900" fill="#060600"/><circle cx="1396" cy="231.04" r="4.3" fill="#4a3800" /><ellipse cx="1395.1" cy="231.34" rx="3.300" ry="3.900" fill="#060600"/><path d="M1410,228.08A4.300,4.300 0 0 0 1410,236.69Z" fill="#ffff55"/><path d="M1235,245.22H1248A7,7 0 0 1 1248,259.22H1235Z" fill="#ffe800"/><path d="M1410,245.22H1397A7,7 0 0 0 1397,259.22H1410Z" fill="#ffe800"/><path d="M1235,247.22A5,5 0 0 1 1235,257.22Z" fill="#4a3a00"/><path d="M1232.400,249.48H1233A4,4 0 0 1 1233,257.48H1232.400Z" fill="#ffff3c"/><circle cx="1248" cy="252.22" r="4.3" fill="#4a3800" /><ellipse cx="1247.1" cy="252.52" rx="3.300" ry="3.900" fill="#060600"/><circle cx="1396" cy="252.22" r="4.3" fill="#4a3800" /><ellipse cx="1395.1" cy="252.52" rx="3.300" ry="3.900" fill="#060600"/><path d="M1410,249.18A4.300,4.300 0 0 0 1410,257.78Z" fill="#ffff55"/><path d="M1235,266.4H1248A7,7 0 0 1 1248,280.4H1235Z" fill="#ffe800"/><path d="M1410,266.4H1397A7,7 0 0 0 1397,280.4H1410Z" fill="#ffe800"/><path d="M1235,268.4A5,5 0 0 1 1235,278.4Z" fill="#4a3a00"/><path d="M1232.400,270.57H1233A4,4 0 0 1 1233,278.57H1232.400Z" fill="#ffff3c"/><circle cx="1248" cy="273.4" r="4.3" fill="#4a3800" /><ellipse cx="1247.1" cy="273.7" rx="3.300" ry="3.900" fill="#060600"/><circle cx="1396" cy="273.4" r="4.3" fill="#4a3800" /><ellipse cx="1395.1" cy="273.7" rx="3.300" ry="3.900" fill="#060600"/><path d="M1410,270.27A4.300,4.300 0 0 0 1410,278.88Z" fill="#ffff55"/><path d="M1235,287.58H1248A7,7 0 0 1 1248,301.58H1235Z" fill="#ffe800"/><path d="M1410,287.58H1397A7,7 0 0 0 1397,301.58H1410Z" fill="#ffe800"/><path d="M1235,289.58A5,5 0 0 1 1235,299.58Z" fill="#4a3a00"/><path d="M1232.400,291.67H1233A4,4 0 0 1 1233,299.67H1232.400Z" fill="#ffff3c"/><circle cx="1248" cy="294.58" r="4.3" fill="#4a3800" /><ellipse cx="1247.1" cy="294.88" rx="3.300" ry="3.900" fill="#060600"/><circle cx="1396" cy="294.58" r="4.3" fill="#4a3800" /><ellipse cx="1395.1" cy="294.88" rx="3.300" ry="3.900" fill="#060600"/><path d="M1410,291.37A4.300,4.300 0 0 0 1410,299.97Z" fill="#ffff55"/><rect x="1235" y="308.76" width="20" height="14" fill="#ffe800" /><rect x="1390" y="308.76" width="20" height="14" fill="#ffe800" /><path d="M1235,310.76A5,5 0 0 1 1235,320.76Z" fill="#4a3a00"/><path d="M1232.400,312.76H1233A4,4 0 0 1 1233,320.76H1232.400Z" fill="#ffff3c"/><circle cx="1248" cy="315.76" r="4.3" fill="#4a3800" /><ellipse cx="1247.1" cy="316.06" rx="3.300" ry="3.900" fill="#060600"/><circle cx="1396" cy="315.76" r="4.3" fill="#4a3800" /><ellipse cx="1395.1" cy="316.06" rx="3.300" ry="3.900" fill="#060600"/><path d="M1410,312.46A4.300,4.300 0 0 0 1410,321.06Z" fill="#ffff55"/><path d="M1235,329.94H1248A7,7 0 0 1 1248,343.94H1235Z" fill="#ffe800"/><path d="M1410,329.94H1397A7,7 0 0 0 1397,343.94H1410Z" fill="#ffe800"/><path d="M1235,331.94A5,5 0 0 1 1235,341.94Z" fill="#4a3a00"/><path d="M1232.400,333.86H1233A4,4 0 0 1 1233,341.86H1232.400Z" fill="#ffff3c"/><circle cx="1248" cy="336.94" r="4.3" fill="#4a3800" /><ellipse cx="1247.1" cy="337.24" rx="3.300" ry="3.900" fill="#060600"/><circle cx="1396" cy="336.94" r="4.3" fill="#4a3800" /><ellipse cx="1395.1" cy="337.24" rx="3.300" ry="3.900" fill="#060600"/><path d="M1410,333.56A4.300,4.300 0 0 0 1410,342.16Z" fill="#ffff55"/><path d="M1235,351.12H1248A7,7 0 0 1 1248,365.12H1235Z" fill="#ffe800"/><path d="M1410,351.12H1397A7,7 0 0 0 1397,365.12H1410Z" fill="#ffe800"/><path d="M1235,353.12A5,5 0 0 1 1235,363.12Z" fill="#4a3a00"/><path d="M1232.400,354.95H1233A4,4 0 0 1 1233,362.95H1232.400Z" fill="#ffff3c"/><circle cx="1248" cy="358.12" r="4.3" fill="#4a3800" /><ellipse cx="1247.1" cy="358.42" rx="3.300" ry="3.900" fill="#060600"/><circle cx="1396" cy="358.12" r="4.3" fill="#4a3800" /><ellipse cx="1395.1" cy="358.42" rx="3.300" ry="3.900" fill="#060600"/><path d="M1410,354.65A4.300,4.300 0 0 0 1410,363.25Z" fill="#ffff55"/><path d="M1235,372.3H1248A7,7 0 0 1 1248,386.3H1235Z" fill="#ffe800"/><path d="M1410,372.3H1397A7,7 0 0 0 1397,386.3H1410Z" fill="#ffe800"/><path d="M1235,374.3A5,5 0 0 1 1235,384.3Z" fill="#4a3a00"/><path d="M1232.400,376.05H1233A4,4 0 0 1 1233,384.05H1232.400Z" fill="#ffff3c"/><circle cx="1248" cy="379.3" r="4.3" fill="#4a3800" /><ellipse cx="1247.1" cy="379.6" rx="3.300" ry="3.900" fill="#060600"/><circle cx="1396" cy="379.3" r="4.3" fill="#4a3800" /><ellipse cx="1395.1" cy="379.6" rx="3.300" ry="3.900" fill="#060600"/><path d="M1410,375.75A4.300,4.300 0 0 0 1410,384.35Z" fill="#ffff55"/><path d="M1235,393.48H1248A7,7 0 0 1 1248,407.48H1235Z" fill="#ffe800"/><path d="M1410,393.48H1397A7,7 0 0 0 1397,407.48H1410Z" fill="#ffe800"/><path d="M1235,395.48A5,5 0 0 1 1235,405.48Z" fill="#4a3a00"/><path d="M1232.400,397.14H1233A4,4 0 0 1 1233,405.14H1232.400Z" fill="#ffff3c"/><circle cx="1248" cy="400.48" r="4.3" fill="#4a3800" /><ellipse cx="1247.1" cy="400.78" rx="3.300" ry="3.900" fill="#060600"/><circle cx="1396" cy="400.48" r="4.3" fill="#4a3800" /><ellipse cx="1395.1" cy="400.78" rx="3.300" ry="3.900" fill="#060600"/><path d="M1410,396.84A4.300,4.300 0 0 0 1410,405.44Z" fill="#ffff55"/><rect x="1235" y="414.66" width="20" height="14" fill="#ffe800" /><rect x="1390" y="414.66" width="20" height="14" fill="#ffe800" /><path d="M1235,416.66A5,5 0 0 1 1235,426.66Z" fill="#4a3a00"/><path d="M1232.400,418.24H1233A4,4 0 0 1 1233,426.24H1232.400Z" fill="#ffff3c"/><circle cx="1248" cy="421.66" r="4.3" fill="#4a3800" /><ellipse cx="1247.1" cy="421.96" rx="3.300" ry="3.900" fill="#060600"/><circle cx="1396" cy="421.66" r="4.3" fill="#4a3800" /><ellipse cx="1395.1" cy="421.96" rx="3.300" ry="3.900" fill="#060600"/><path d="M1410,417.94A4.300,4.300 0 0 0 1410,426.54Z" fill="#ffff55"/><path d="M1235,435.84H1248A7,7 0 0 1 1248,449.84H1235Z" fill="#ffe800"/><path d="M1410,435.84H1397A7,7 0 0 0 1397,449.84H1410Z" fill="#ffe800"/><path d="M1235,437.84A5,5 0 0 1 1235,447.84Z" fill="#4a3a00"/><path d="M1232.400,439.33H1233A4,4 0 0 1 1233,447.33H1232.400Z" fill="#ffff3c"/><circle cx="1248" cy="442.84" r="4.3" fill="#4a3800" /><ellipse cx="1247.1" cy="443.14" rx="3.300" ry="3.900" fill="#060600"/><circle cx="1396" cy="442.84" r="4.3" fill="#4a3800" /><ellipse cx="1395.1" cy="443.14" rx="3.300" ry="3.900" fill="#060600"/><path d="M1410,439.03A4.300,4.300 0 0 0 1410,447.63Z" fill="#ffff55"/><path d="M1235,457.02H1248A7,7 0 0 1 1248,471.02H1235Z" fill="#ffe800"/><path d="M1410,457.02H1397A7,7 0 0 0 1397,471.02H1410Z" fill="#ffe800"/><path d="M1235,459.02A5,5 0 0 1 1235,469.02Z" fill="#4a3a00"/><path d="M1232.400,460.43H1233A4,4 0 0 1 1233,468.43H1232.400Z" fill="#ffff3c"/><circle cx="1248" cy="464.02" r="4.3" fill="#4a3800" /><ellipse cx="1247.1" cy="464.32" rx="3.300" ry="3.900" fill="#060600"/><circle cx="1396" cy="464.02" r="4.3" fill="#4a3800" /><ellipse cx="1395.1" cy="464.32" rx="3.300" ry="3.900" fill="#060600"/><path d="M1410,460.13A4.300,4.300 0 0 0 1410,468.73Z" fill="#ffff55"/><path d="M1235,478.2H1248A7,7 0 0 1 1248,492.2H1235Z" fill="#ffe800"/><path d="M1410,478.2H1397A7,7 0 0 0 1397,492.2H1410Z" fill="#ffe800"/><path d="M1235,480.2A5,5 0 0 1 1235,490.2Z" fill="#4a3a00"/><path d="M1232.400,481.52H1233A4,4 0 0 1 1233,489.52H1232.400Z" fill="#ffff3c"/><circle cx="1248" cy="485.2" r="4.3" fill="#4a3800" /><ellipse cx="1247.1" cy="485.5" rx="3.300" ry="3.900" fill="#060600"/><circle cx="1396" cy="485.2" r="4.3" fill="#4a3800" /><ellipse cx="1395.1" cy="485.5" rx="3.300" ry="3.900" fill="#060600"/><path d="M1410,481.22A4.300,4.300 0 0 0 1410,489.82Z" fill="#ffff55"/><path d="M1235,499.38H1248A7,7 0 0 1 1248,513.38H1235Z" fill="#ffe800"/><path d="M1410,499.38H1397A7,7 0 0 0 1397,513.38H1410Z" fill="#ffe800"/><path d="M1235,501.38A5,5 0 0 1 1235,511.38Z" fill="#4a3a00"/><path d="M1232.400,502.62H1233A4,4 0 0 1 1233,510.62H1232.400Z" fill="#ffff3c"/><circle cx="1248" cy="506.38" r="4.3" fill="#4a3800" /><ellipse cx="1247.1" cy="506.68" rx="3.300" ry="3.900" fill="#060600"/><circle cx="1396" cy="506.38" r="4.3" fill="#4a3800" /><ellipse cx="1395.1" cy="506.68" rx="3.300" ry="3.900" fill="#060600"/><path d="M1410,502.32A4.300,4.300 0 0 0 1410,510.92Z" fill="#ffff55"/><rect x="1235" y="520.56" width="20" height="14" fill="#ffe800" /><rect x="1390" y="520.56" width="20" height="14" fill="#ffe800" /><path d="M1235,522.56A5,5 0 0 1 1235,532.56Z" fill="#4a3a00"/><path d="M1232.400,523.71H1233A4,4 0 0 1 1233,531.71H1232.400Z" fill="#ffff3c"/><circle cx="1248" cy="527.56" r="4.3" fill="#4a3800" /><ellipse cx="1247.1" cy="527.86" rx="3.300" ry="3.900" fill="#060600"/><circle cx="1396" cy="527.56" r="4.3" fill="#4a3800" /><ellipse cx="1395.1" cy="527.86" rx="3.300" ry="3.900" fill="#060600"/><path d="M1410,523.41A4.300,4.300 0 0 0 1410,532.01Z" fill="#ffff55"/><path d="M1235,541.74H1248A7,7 0 0 1 1248,555.74H1235Z" fill="#ffe800"/><path d="M1410,541.74H1397A7,7 0 0 0 1397,555.74H1410Z" fill="#ffe800"/><path d="M1235,543.74A5,5 0 0 1 1235,553.74Z" fill="#4a3a00"/><path d="M1232.400,544.81H1233A4,4 0 0 1 1233,552.81H1232.400Z" fill="#ffff3c"/><circle cx="1248" cy="548.74" r="4.3" fill="#4a3800" /><ellipse cx="1247.1" cy="549.04" rx="3.300" ry="3.900" fill="#060600"/><circle cx="1396" cy="548.74" r="4.3" fill="#4a3800" /><ellipse cx="1395.1" cy="549.04" rx="3.300" ry="3.900" fill="#060600"/><path d="M1410,544.51A4.300,4.300 0 0 0 1410,553.11Z" fill="#ffff55"/><path d="M1235,562.92H1248A7,7 0 0 1 1248,576.92H1235Z" fill="#ffe800"/><path d="M1410,562.92H1397A7,7 0 0 0 1397,576.92H1410Z" fill="#ffe800"/><path d="M1235,564.92A5,5 0 0 1 1235,574.92Z" fill="#4a3a00"/><path d="M1232.400,565.91H1233A4,4 0 0 1 1233,573.91H1232.400Z" fill="#ffff3c"/><circle cx="1248" cy="569.92" r="4.3" fill="#4a3800" /><ellipse cx="1247.1" cy="570.22" rx="3.300" ry="3.900" fill="#060600"/><circle cx="1396" cy="569.92" r="4.3" fill="#4a3800" /><ellipse cx="1395.1" cy="570.22" rx="3.300" ry="3.900" fill="#060600"/><path d="M1410,565.61A4.300,4.300 0 0 0 1410,574.21Z" fill="#ffff55"/><circle cx="1274.5" cy="172.5" r="15" fill="#bfb000" /><circle cx="1274.5" cy="172.5" r="8.8" fill="#1c3829" /><path d="M1276.5,164.1 A8.800,8.800 0 0 1 1276.5,180.9 A7,8.800 0 0 0 1276.5,164.1Z" fill="#0e1c10"/><circle cx="1370" cy="172.5" r="15" fill="#bfb000" /><circle cx="1370" cy="172.5" r="8.8" fill="#1c3829" /><path d="M1372,164.1 A8.800,8.800 0 0 1 1372,180.9 A7,8.800 0 0 0 1372,164.1Z" fill="#0e1c10"/><circle cx="1274.5" cy="564.5" r="15" fill="#bfb000" /><circle cx="1274.5" cy="564.5" r="8.8" fill="#1c3829" /><path d="M1276.5,556.1 A8.800,8.800 0 0 1 1276.5,572.9 A7,8.800 0 0 0 1276.5,556.1Z" fill="#0e1c10"/><circle cx="1370" cy="564.5" r="15" fill="#bfb000" /><circle cx="1370" cy="564.5" r="8.8" fill="#1c3829" /><path d="M1372,556.1 A8.800,8.800 0 0 1 1372,572.9 A7,8.800 0 0 0 1372,556.1Z" fill="#0e1c10"/><path d="M1294.5,580.500V567A6.500,6.500 0 0 1 1307.5,567V580.500Z" fill="#ffe800"/><circle cx="1301" cy="568" r="4.2" fill="#241c00" /><path d="M1299,576A4,4 0 0 1 1304.5,580.500H1301.5A3,3 0 0 0 1299,576Z" fill="#3a2e00"/><rect x="1315.5" y="560.5" width="13" height="20" fill="#ffe800" /><circle cx="1322" cy="568" r="4.2" fill="#241c00" /><path d="M1320,576A4,4 0 0 1 1325.5,580.500H1322.5A3,3 0 0 0 1320,576Z" fill="#3a2e00"/><path d="M1336.5,580.500V567A6.500,6.500 0 0 1 1349.5,567V580.500Z" fill="#ffe800"/><circle cx="1343" cy="568" r="4.2" fill="#241c00" /><path d="M1341,576A4,4 0 0 1 1346.5,580.500H1343.5A3,3 0 0 0 1341,576Z" fill="#3a2e00"/><polygon points="1292,146 1296,142 1305.5,144.5 1305.5,140.5 1358,140.5 1358,144.5 1362,142.5 1361.5,190 1352,194.5 1300,194.5 1291.5,194.5" fill="#a4a3bd" /><polygon points="1292,146 1296,142 1298,150 1298,190 1291.5,194.5" fill="#5f5e74" /><polygon points="1291.5,194.5 1298,188 1344,188 1352,194.5" fill="#4a4958" /><polygon points="1343,183 1361.5,183 1361.5,190 1352,194.5 1343,190" fill="#8d8ca6" /><rect x="1307" y="152.5" width="7" height="14" fill="#26262c" /><rect x="1347.5" y="152.5" width="7" height="14" fill="#26262c" /><rect x="1307" y="150.5" width="7" height="2" fill="#c2c1d6" /><rect x="1347.5" y="150.5" width="7" height="2" fill="#c2c1d6" /><rect x="1304.5" y="178.5" width="57" height="1.5" fill="#c6c5da" /><rect x="1308" y="183" width="11" height="6.5" fill="#3c3b48" /><rect x="1324.5" y="183" width="11" height="6.5" fill="#3c3b48" /><polygon points="1342,183 1356,183 1345,190 1342,190" fill="#3c3b48" /><path d="M1311,187.5 L1313,185.5 L1316,185" fill="none" stroke="#f2d000" stroke-width="1.3" /><path d="M1326.5,187 L1329,185.5 L1333,185.5" fill="none" stroke="#f2d000" stroke-width="1.3" /><rect x="1306.5" y="179.5" width="1.2" height="10" fill="#c6c5da" /><rect x="1320" y="179.5" width="1.2" height="10" fill="#c6c5da" /><rect x="1323" y="179.5" width="1.2" height="10" fill="#c6c5da" /><rect x="1336.5" y="179.5" width="1.2" height="10" fill="#c6c5da" /><rect x="1340.5" y="179.5" width="1.2" height="10" fill="#c6c5da" /><rect x="1311" y="194.5" width="2.5" height="1.5" fill="#d6b800" /><rect x="1316" y="194.5" width="2.5" height="1.5" fill="#d6b800" /><rect x="1321" y="194.5" width="2.5" height="1.5" fill="#d6b800" /><rect x="1326" y="194.5" width="2.5" height="1.5" fill="#d6b800" /><rect x="1331" y="194.5" width="2.5" height="1.5" fill="#d6b800" /><rect x="1268.5" y="189" width="13.5" height="9" fill="#c9c9b8" /><rect x="1271" y="189.5" width="9.5" height="8" fill="#ffffd2" /><circle cx="1274.4" cy="213.6" r="6.2" fill="#9b7a00" /><circle cx="1274.4" cy="213.6" r="4.3" fill="#ffe800" /><circle cx="1370" cy="534" r="6.2" fill="#9b7a00" /><circle cx="1370" cy="534" r="4.3" fill="#ffe800" /><rect x="1279.5" y="235.5" width="30" height="35" fill="#c9c9c9" /><rect x="1281" y="236.5" width="28" height="32.5" fill="#ececec" /><ellipse cx="1295" cy="252.5" rx="10" ry="13" fill="#fdfdfd" stroke="#dccfae" stroke-width="1.6"/><rect x="1296.5" y="207.8" width="9" height="3.8" fill="#d8d4cc" /><rect x="1298.48" y="207.8" width="5.04" height="3.8" fill="#7c4426" /><rect x="1296.5" y="216.7" width="9" height="3.8" fill="#d8d4cc" /><rect x="1298.48" y="216.7" width="5.04" height="3.8" fill="#7c4426" /><rect x="1348.3" y="209.1" width="9" height="3.8" fill="#d8d4cc" /><rect x="1350.28" y="209.1" width="5.04" height="3.8" fill="#7c4426" /><rect x="1338" y="218.5" width="19.2" height="11" fill="#d2d2cc" /><rect x="1343" y="218.5" width="10" height="11" fill="#ffb400" /><rect x="1338" y="260" width="19.2" height="11" fill="#d2d2cc" /><rect x="1343" y="260" width="10" height="11" fill="#ffb400" /><rect x="1334" y="234.5" width="1.8" height="20" fill="#3a3a3a" /><rect x="1335.5" y="233.4" width="23.3" height="21.6" fill="#464646" /><rect x="1362.5" y="232" width="21" height="25" fill="#74a04a" /><rect x="1363.3" y="232.5" width="19.5" height="23.7" fill="#464646" /><rect x="1371" y="193.5" width="7" height="4.5" fill="#cfcfcf" /><rect x="1371" y="220" width="7" height="5" fill="#cfcfcf" /><rect x="1367.4" y="197.4" width="13.8" height="22.6" fill="#464646" /><rect x="1357.2" y="283.4" width="6.5" height="13.8" fill="#d8d4cc" /><rect x="1357.2" y="286.5" width="6.5" height="7.5" fill="#1c8a8a" /><rect x="1370.75" y="286.2" width="4.5" height="3.6" fill="#d8d4cc" /><rect x="1371.74" y="286.2" width="2.52" height="3.6" fill="#7c4426" /><rect x="1378.9" y="283" width="3.6" height="8" fill="#d8d4cc" /><rect x="1378.9" y="284.76" width="3.6" height="4.48" fill="#7c4426" /><rect x="1283.55" y="290.7" width="4.5" height="3.6" fill="#d8d4cc" /><rect x="1284.54" y="290.7" width="2.52" height="3.6" fill="#7c4426" /><rect x="1285" y="299.5" width="15" height="27.5" fill="#464646" /><rect x="1286.5" y="298.6" width="1.4" height="1" fill="#d0d0d0" /><rect x="1286.5" y="327" width="1.4" height="1" fill="#d0d0d0" /><rect x="1289.4" y="298.6" width="1.4" height="1" fill="#d0d0d0" /><rect x="1289.4" y="327" width="1.4" height="1" fill="#d0d0d0" /><rect x="1292.3" y="298.6" width="1.4" height="1" fill="#d0d0d0" /><rect x="1292.3" y="327" width="1.4" height="1" fill="#d0d0d0" /><rect x="1295.2" y="298.6" width="1.4" height="1" fill="#d0d0d0" /><rect x="1295.2" y="327" width="1.4" height="1" fill="#d0d0d0" /><rect x="1298.1" y="298.6" width="1.4" height="1" fill="#d0d0d0" /><rect x="1298.1" y="327" width="1.4" height="1" fill="#d0d0d0" /><rect x="1275.1" y="300.5" width="3.8" height="8" fill="#d8d4cc" /><rect x="1275.1" y="302.26" width="3.8" height="4.48" fill="#7c4426" /><rect x="1275.1" y="317" width="3.8" height="8" fill="#d8d4cc" /><rect x="1275.1" y="318.76" width="3.8" height="4.48" fill="#7c4426" /><rect x="1314.7" y="326.9" width="4.6" height="3.6" fill="#d8d4cc" /><rect x="1315.71" y="326.9" width="2.58" height="3.6" fill="#7c4426" /><rect x="1320.7" y="326.9" width="4.6" height="3.6" fill="#d8d4cc" /><rect x="1321.71" y="326.9" width="2.58" height="3.6" fill="#7c4426" /><rect x="1326.7" y="326.9" width="4.6" height="3.6" fill="#d8d4cc" /><rect x="1327.71" y="326.9" width="2.58" height="3.6" fill="#7c4426" /><rect x="1332.7" y="326.9" width="4.6" height="3.6" fill="#d8d4cc" /><rect x="1333.71" y="326.9" width="2.58" height="3.6" fill="#7c4426" /><rect x="1340.5" y="324.45" width="4" height="8.5" fill="#d8d4cc" /><rect x="1340.5" y="326.32" width="4" height="4.76" fill="#7c4426" /><rect x="1347.5" y="324.45" width="4" height="8.5" fill="#d8d4cc" /><rect x="1347.5" y="326.32" width="4" height="4.76" fill="#7c4426" /><rect x="1359.5" y="324.45" width="4" height="8.5" fill="#d8d4cc" /><rect x="1359.5" y="326.32" width="4" height="4.76" fill="#7c4426" /><rect x="1375" y="324.45" width="4" height="8.5" fill="#d8d4cc" /><rect x="1375" y="326.32" width="4" height="4.76" fill="#7c4426" /><rect x="1367" y="324.45" width="4" height="8.5" fill="#d8d4cc" /><rect x="1367" y="326.32" width="4" height="4.76" fill="#1c8a8a" /><rect x="1353" y="313" width="14" height="6.5" fill="#464646" /><rect x="1359.5" y="310.5" width="1" height="2.5" fill="#464646" /><rect x="1355.5" y="319.5" width="1" height="2.5" fill="#464646" /><rect x="1363.5" y="319.5" width="1" height="2.5" fill="#464646" /><rect x="1293.7" y="342" width="60" height="57.5" fill="#464646" /><rect x="1292.700" y="341" width="62" height="59.500" fill="none" stroke="#cfd8c0" stroke-width="1" stroke-dasharray="1.2 1.6"/><rect x="1279.7" y="340.2" width="8" height="3.6" fill="#d8d4cc" /><rect x="1281.46" y="340.2" width="4.48" height="3.6" fill="#7c4426" /><rect x="1283.75" y="346.2" width="4.5" height="3.6" fill="#d8d4cc" /><rect x="1284.74" y="346.2" width="2.52" height="3.6" fill="#7c4426" /><rect x="1357.75" y="344.2" width="4.5" height="3.6" fill="#d8d4cc" /><rect x="1358.74" y="344.2" width="2.52" height="3.6" fill="#7c4426" /><rect x="1283.75" y="378.2" width="4.5" height="3.6" fill="#d8d4cc" /><rect x="1284.74" y="378.2" width="2.52" height="3.6" fill="#7c4426" /><rect x="1370" y="365.1" width="9" height="3.8" fill="#d8d4cc" /><rect x="1371.98" y="365.1" width="5.04" height="3.8" fill="#7c4426" /><rect x="1370" y="373.1" width="9" height="3.8" fill="#d8d4cc" /><rect x="1371.98" y="373.1" width="5.04" height="3.8" fill="#7c4426" /><g transform="rotate(35 1362 383)"><rect x="1359.25" y="381.2" width="5.5" height="3.6" fill="#d8d4cc" /><rect x="1360.46" y="381.2" width="3.08" height="3.6" fill="#7c4426" /></g><rect x="1321.25" y="411.2" width="4.5" height="3.6" fill="#d8d4cc" /><rect x="1322.24" y="411.2" width="2.52" height="3.6" fill="#7c4426" /><rect x="1326.75" y="411.2" width="4.5" height="3.6" fill="#d8d4cc" /><rect x="1327.74" y="411.2" width="2.52" height="3.6" fill="#7c4426" /><rect x="1303.5" y="417.1" width="9" height="3.8" fill="#d8d4cc" /><rect x="1305.48" y="417.1" width="5.04" height="3.8" fill="#7c4426" /><rect x="1309.2" y="424.8" width="9" height="3.8" fill="#d8d4cc" /><rect x="1311.18" y="424.8" width="5.04" height="3.8" fill="#7c4426" /><rect x="1289.5" y="433.5" width="29" height="18.8" fill="#9a9a8c" rx="1"/><rect x="1291.5" y="434.5" width="26.5" height="16.5" fill="#3e3a2c" /><rect x="1321.25" y="437.2" width="4.5" height="3.6" fill="#d8d4cc" /><rect x="1322.24" y="437.2" width="2.52" height="3.6" fill="#7c4426" /><rect x="1283.45" y="445.7" width="4.5" height="3.6" fill="#d8d4cc" /><rect x="1284.44" y="445.7" width="2.52" height="3.6" fill="#7c4426" /><path transform="translate(1321.2,0) scale(1,1) translate(-1321.2,0)" d="M1320.500,479.500 C1312,484 1298,482 1294.500,473 C1293,468 1293,465 1294.200,462.800 C1303,460.500 1315,462 1319.500,470 C1321.500,474 1321.500,477 1320.500,479.500Z" fill="#5dc000" stroke="#ffffff" stroke-width="2.400" stroke-linejoin="round"/><path transform="translate(1321.2,0) scale(1,1) translate(-1321.2,0)" d="M1302,468.500 C1308,471 1314,475 1319,480" fill="none" stroke="#ffffff" stroke-width="1.800"/><path transform="translate(1321.2,0) scale(-1,1) translate(-1321.2,0)" d="M1320.500,479.500 C1312,484 1298,482 1294.500,473 C1293,468 1293,465 1294.200,462.800 C1303,460.500 1315,462 1319.500,470 C1321.500,474 1321.500,477 1320.500,479.500Z" fill="#5dc000" stroke="#ffffff" stroke-width="2.400" stroke-linejoin="round"/><path transform="translate(1321.2,0) scale(-1,1) translate(-1321.2,0)" d="M1302,468.500 C1308,471 1314,475 1319,480" fill="none" stroke="#ffffff" stroke-width="1.800"/><path d="M1321.200,479.500 C1331,479 1341,482 1344.500,490 C1350,494 1352.500,502 1351.500,509 C1351,517 1346,523 1341.500,527 C1337,534 1329,539.500 1321.200,539.500 C1313.400,539.500 1305.400,534 1300.900,527 C1296.400,523 1291.400,517 1290.900,509 C1289.900,502 1292.400,494 1297.900,490 C1301.400,482 1311.400,479 1321.200,479.500Z" fill="#ffffff"/><ellipse cx="1321.2" cy="486.8" rx="7.6" ry="3.9" fill="#5dc000"/><ellipse cx="1304.6" cy="489.2" rx="5.3" ry="3.3" fill="#5dc000" transform="rotate(-35 1304.6 489.2)"/><ellipse cx="1337.8" cy="489.2" rx="5.3" ry="3.3" fill="#5dc000" transform="rotate(35 1337.8 489.2)"/><ellipse cx="1310.6" cy="501.2" rx="8" ry="8" fill="#5dc000"/><ellipse cx="1331.8" cy="501.2" rx="8" ry="8" fill="#5dc000"/><ellipse cx="1296.3" cy="505.5" rx="3.4" ry="7" fill="#5dc000" transform="rotate(10 1296.3 505.5)"/><ellipse cx="1346.1" cy="505.5" rx="3.4" ry="7" fill="#5dc000" transform="rotate(-10 1346.1 505.5)"/><ellipse cx="1321.2" cy="516.6" rx="8.6" ry="8.2" fill="#5dc000"/><ellipse cx="1303.7" cy="520" rx="5.6" ry="7.8" fill="#5dc000" transform="rotate(-35 1303.7 520)"/><ellipse cx="1338.7" cy="520" rx="5.6" ry="7.8" fill="#5dc000" transform="rotate(35 1338.7 520)"/><ellipse cx="1321.2" cy="531.6" rx="8.2" ry="3.6" fill="#5dc000"/><rect x="442.25" y="655.5" width="8.5" height="8.5" fill="#e8e8e8" rx="2"/><rect x="442.25" y="670" width="8.5" height="8.5" fill="#e8e8e8" rx="2"/><rect x="442.65" y="660.8" width="7.7" height="12.4" fill="#fbfbfb" /><rect x="442.65" y="663.2" width="7.7" height="7.6" fill="#2e2e2e" /><rect x="489.75" y="655.5" width="8.5" height="8.5" fill="#e8e8e8" rx="2"/><rect x="489.75" y="670" width="8.5" height="8.5" fill="#e8e8e8" rx="2"/><rect x="490.15" y="660.8" width="7.7" height="12.4" fill="#fbfbfb" /><rect x="490.15" y="663.2" width="7.7" height="7.6" fill="#2e2e2e" /><rect x="552.75" y="655.5" width="8.5" height="8.5" fill="#e8e8e8" rx="2"/><rect x="552.75" y="670" width="8.5" height="8.5" fill="#e8e8e8" rx="2"/><rect x="553.15" y="660.8" width="7.7" height="12.4" fill="#fbfbfb" /><rect x="553.15" y="663.2" width="7.7" height="7.6" fill="#2e2e2e" /><rect x="568.25" y="655.5" width="8.5" height="8.5" fill="#e8e8e8" rx="2"/><rect x="568.25" y="670" width="8.5" height="8.5" fill="#e8e8e8" rx="2"/><rect x="568.65" y="660.8" width="7.7" height="12.4" fill="#fbfbfb" /><rect x="568.65" y="663.2" width="7.7" height="7.6" fill="#2e2e2e" /><rect x="599.75" y="655.5" width="8.5" height="8.5" fill="#e8e8e8" rx="2"/><rect x="599.75" y="670" width="8.5" height="8.5" fill="#e8e8e8" rx="2"/><rect x="600.15" y="660.8" width="7.7" height="12.4" fill="#fbfbfb" /><rect x="600.15" y="663.2" width="7.7" height="7.6" fill="#2e2e2e" /><rect x="581.5" y="660" width="14" height="21" fill="none" stroke="#f0f0f0" stroke-width="1"/><rect x="584" y="655" width="8.5" height="23" fill="#d9d9d9" rx="1.5"/><rect x="584.8" y="656" width="6.5" height="21" fill="#f4f4f4" /><rect x="584.3" y="661" width="8" height="10" fill="#fffbe0" /><rect x="382" y="692" width="3.2" height="29" fill="#e6e6e2" /><rect x="387.3" y="692" width="3.2" height="29" fill="#e6e6e2" /><rect x="392.6" y="692" width="3.2" height="29" fill="#e6e6e2" /><rect x="397.9" y="692" width="3.2" height="29" fill="#e6e6e2" /><rect x="403.2" y="692" width="3.2" height="29" fill="#e6e6e2" /><rect x="408.5" y="692" width="3.2" height="29" fill="#e6e6e2" /><rect x="413.8" y="692" width="3.2" height="29" fill="#e6e6e2" /><rect x="419.1" y="692" width="3.2" height="29" fill="#e6e6e2" /><rect x="424.4" y="692" width="3.2" height="29" fill="#e6e6e2" /><rect x="429.7" y="692" width="3.2" height="29" fill="#e6e6e2" /><rect x="435" y="692" width="3.2" height="29" fill="#e6e6e2" /><rect x="440.3" y="692" width="3.2" height="29" fill="#e6e6e2" /><rect x="445.6" y="692" width="3.2" height="29" fill="#e6e6e2" /><rect x="450.9" y="692" width="3.2" height="29" fill="#e6e6e2" /><rect x="456.2" y="692" width="3.2" height="29" fill="#e6e6e2" /><rect x="461.5" y="692" width="3.2" height="29" fill="#e6e6e2" /><rect x="466.8" y="692" width="3.2" height="29" fill="#e6e6e2" /><rect x="472.1" y="692" width="3.2" height="29" fill="#e6e6e2" /><rect x="477.4" y="692" width="3.2" height="29" fill="#e6e6e2" /><rect x="482.7" y="692" width="3.2" height="29" fill="#e6e6e2" /><rect x="488" y="692" width="3.2" height="29" fill="#e6e6e2" /><rect x="493.3" y="692" width="3.2" height="29" fill="#e6e6e2" /><rect x="498.6" y="692" width="3.2" height="29" fill="#e6e6e2" /><rect x="503.9" y="692" width="3.2" height="29" fill="#e6e6e2" /><rect x="509.2" y="692" width="3.2" height="29" fill="#e6e6e2" /><rect x="514.5" y="692" width="3.2" height="29" fill="#e6e6e2" /><rect x="519.8" y="692" width="3.2" height="29" fill="#e6e6e2" /><rect x="525.1" y="692" width="3.2" height="29" fill="#e6e6e2" /><rect x="530.4" y="692" width="3.2" height="29" fill="#e6e6e2" /><rect x="535.7" y="692" width="3.2" height="29" fill="#e6e6e2" /><rect x="541" y="692" width="3.2" height="29" fill="#e6e6e2" /><rect x="546.3" y="692" width="3.2" height="29" fill="#e6e6e2" /><rect x="551.6" y="692" width="3.2" height="29" fill="#e6e6e2" /><rect x="556.9" y="692" width="3.2" height="29" fill="#e6e6e2" /><rect x="562.2" y="692" width="3.2" height="29" fill="#e6e6e2" /><rect x="567.5" y="692" width="3.2" height="29" fill="#e6e6e2" /><rect x="572.8" y="692" width="3.2" height="29" fill="#e6e6e2" /><rect x="578.1" y="692" width="3.2" height="29" fill="#e6e6e2" /><rect x="583.4" y="692" width="3.2" height="29" fill="#e6e6e2" /><rect x="588.7" y="692" width="3.2" height="29" fill="#e6e6e2" /><rect x="594" y="692" width="3.2" height="29" fill="#e6e6e2" /><rect x="599.3" y="692" width="3.2" height="29" fill="#e6e6e2" /><rect x="604.6" y="692" width="3.2" height="29" fill="#e6e6e2" /><rect x="609.9" y="692" width="3.2" height="29" fill="#e6e6e2" /><rect x="615.2" y="692" width="3.2" height="29" fill="#e6e6e2" /><rect x="620.5" y="692" width="3.2" height="29" fill="#e6e6e2" /><rect x="625.8" y="692" width="3.2" height="29" fill="#e6e6e2" /><rect x="631.1" y="692" width="3.2" height="29" fill="#e6e6e2" /><rect x="636.4" y="692" width="3.2" height="29" fill="#e6e6e2" /><rect x="641.7" y="692" width="3.2" height="29" fill="#e6e6e2" /><path d="M317.5,921.5 L317.5,706 L370.5,706 L370.5,715 L382,721.5 L643.5,721.5 L655,715 L655,706 L707,706 L707,921.5 L685.5,921.5 L685.5,764.5 L339,764.5 L339,921.5 L317.5,921.5" fill="none" stroke="#dcdcdc" stroke-width="1" /><linearGradient id="hg4250" x1="0" y1="0" x2="0" y2="1"><stop offset="0" stop-color="#050505"/><stop offset="0.550" stop-color="#1c1808"/><stop offset="0.850" stop-color="#8a7a18"/><stop offset="1" stop-color="#3a3208"/></linearGradient><circle cx="352.1" cy="729.3" r="10.5" fill="#c9c9c0" /><circle cx="352.1" cy="729.3" r="10" fill="url(#hg4250)" /><ellipse cx="355.5" cy="728.5" rx="6.1" ry="8.8" fill="#9a99b6"/><linearGradient id="hg4274" x1="0" y1="0" x2="0" y2="1"><stop offset="0" stop-color="#050505"/><stop offset="0.550" stop-color="#1c1808"/><stop offset="0.850" stop-color="#8a7a18"/><stop offset="1" stop-color="#3a3208"/></linearGradient><circle cx="352.1" cy="753.9" r="8" fill="#c9c9c0" /><circle cx="352.1" cy="753.9" r="7.5" fill="url(#hg4274)" /><ellipse cx="355.4" cy="753.1" rx="4.63" ry="6.61" fill="#9a99b6"/><linearGradient id="hg7456" x1="0" y1="0" x2="0" y2="1"><stop offset="0" stop-color="#050505"/><stop offset="0.550" stop-color="#1c1808"/><stop offset="0.850" stop-color="#8a7a18"/><stop offset="1" stop-color="#3a3208"/></linearGradient><circle cx="672.7" cy="729.3" r="10.5" fill="#c9c9c0" /><circle cx="672.7" cy="729.3" r="10" fill="url(#hg7456)" /><ellipse cx="674.2" cy="728.5" rx="7.61" ry="9.08" fill="#9a99b6"/><linearGradient id="hg7478" x1="0" y1="0" x2="0" y2="1"><stop offset="0" stop-color="#050505"/><stop offset="0.550" stop-color="#1c1808"/><stop offset="0.850" stop-color="#8a7a18"/><stop offset="1" stop-color="#3a3208"/></linearGradient><circle cx="672.5" cy="753.9" r="8" fill="#c9c9c0" /><circle cx="672.5" cy="753.9" r="7.5" fill="url(#hg7478)" /><ellipse cx="673.7" cy="753.1" rx="5.89" ry="6.84" fill="#9a99b6"/><rect x="305.5" y="777" width="25" height="37" fill="#e4e4e4" /><rect x="694" y="777" width="25" height="37" fill="#e4e4e4" /><rect x="303" y="859" width="25" height="38" fill="#e4e4e4" /><rect x="696" y="859" width="25" height="38" fill="#e4e4e4" /><circle cx="322" cy="907" r="3" fill="#7a6a14" /><circle cx="321.6" cy="906.6" r="2.2" fill="#151208" /><circle cx="701.5" cy="907" r="3" fill="#7a6a14" /><circle cx="701.3" cy="906.6" r="2.2" fill="#151208" /><text x="512" y="771.6" font-size="13.69" textLength="68" lengthAdjust="spacingAndGlyphs" transform="rotate(90 512 771.6)" stroke="#1e3a2b" stroke-width="0.1" fill="#d6d6d6">CF_Socket1</text><path d="M231,722 L281.5,722 L281.5,921.5 L231,921.5 L231,722" fill="none" stroke="#dcdcdc" stroke-width="1" /><path d="M231,772.5 L281.5,772.5" fill="none" stroke="#dcdcdc" stroke-width="1" /><path d="M231,871.5 L281.5,871.5" fill="none" stroke="#dcdcdc" stroke-width="1" /><circle cx="240" cy="781" r="6.2" fill="#f7ec1d" /><circle cx="240" cy="781" r="4.2" fill="#15150a" /><circle cx="273" cy="822" r="6.2" fill="#f7ec1d" /><circle cx="273" cy="822" r="4.2" fill="#15150a" /><circle cx="240" cy="863.5" r="6.2" fill="#f7ec1d" /><circle cx="240" cy="863.5" r="4.2" fill="#15150a" /><path d="M209,822 L230,822" fill="none" stroke="#f4f4f4" stroke-width="1.6" /><path d="M219.5,812 L219.5,832.5" fill="none" stroke="#f4f4f4" stroke-width="1.6" /><path d="M294,812 L294,832.5" fill="none" stroke="#f4f4f4" stroke-width="1.6" /><text x="255.5" y="811.8" font-size="13.69" textLength="20.5" lengthAdjust="spacingAndGlyphs" transform="rotate(90 255.5 811.8)" stroke="#1e3a2b" stroke-width="0.1" fill="#d6d6d6">BT1</text><text x="304" y="782" font-size="25.14" textLength="70" lengthAdjust="spacingAndGlyphs" transform="rotate(-90 304 782)" stroke="#1e3a2b" stroke-width="0.5" fill="#f4f4f4">CR2032</text><text x="741" y="791" font-size="12.29" textLength="23" lengthAdjust="spacingAndGlyphs" fill="#f4f4f4">R20</text><text x="770" y="791" font-size="12.29" textLength="23" lengthAdjust="spacingAndGlyphs" fill="#f4f4f4">R23</text><text x="799.5" y="791" font-size="12.29" textLength="23" lengthAdjust="spacingAndGlyphs" fill="#f4f4f4">R30</text><text x="829" y="791" font-size="12.29" textLength="23" lengthAdjust="spacingAndGlyphs" fill="#f4f4f4">R34</text><text x="741" y="804" font-size="12.29" textLength="23" lengthAdjust="spacingAndGlyphs" fill="#f4f4f4">R21</text><text x="770" y="804" font-size="12.29" textLength="23" lengthAdjust="spacingAndGlyphs" fill="#f4f4f4">R24</text><text x="799.5" y="804" font-size="12.29" textLength="23" lengthAdjust="spacingAndGlyphs" fill="#f4f4f4">R27</text><text x="741" y="817" font-size="12.29" textLength="23" lengthAdjust="spacingAndGlyphs" fill="#f4f4f4">R22</text><text x="770" y="817" font-size="12.29" textLength="23" lengthAdjust="spacingAndGlyphs" fill="#f4f4f4">R25</text><text x="799.5" y="817" font-size="12.29" textLength="23" lengthAdjust="spacingAndGlyphs" fill="#f4f4f4">R28</text><text x="829" y="817" font-size="12.29" textLength="23" lengthAdjust="spacingAndGlyphs" fill="#f4f4f4">R29</text><rect x="741" y="823.4" width="8.5" height="8.2" fill="#e8e8e8" rx="2"/><rect x="755.5" y="823.4" width="8.5" height="8.2" fill="#e8e8e8" rx="2"/><rect x="746.3" y="823.9" width="12.4" height="7.5" fill="#fbfbfb" /><rect x="748.7" y="823.9" width="7.6" height="7.5" fill="#2e2e2e" /><rect x="770" y="823.4" width="8.5" height="8.2" fill="#e8e8e8" rx="2"/><rect x="784.5" y="823.4" width="8.5" height="8.2" fill="#e8e8e8" rx="2"/><rect x="775.3" y="823.9" width="12.4" height="7.5" fill="#fbfbfb" /><rect x="777.7" y="823.9" width="7.6" height="7.5" fill="#2e2e2e" /><rect x="799.5" y="823.4" width="8.5" height="8.2" fill="#e8e8e8" rx="2"/><rect x="814" y="823.4" width="8.5" height="8.2" fill="#e8e8e8" rx="2"/><rect x="804.8" y="823.9" width="12.4" height="7.5" fill="#fbfbfb" /><rect x="807.2" y="823.9" width="7.6" height="7.5" fill="#2e2e2e" /><rect x="829" y="823.4" width="8.5" height="8.2" fill="#e8e8e8" rx="2"/><rect x="843.5" y="823.4" width="8.5" height="8.2" fill="#e8e8e8" rx="2"/><rect x="834.3" y="823.9" width="12.4" height="7.5" fill="#fbfbfb" /><rect x="836.7" y="823.9" width="7.6" height="7.5" fill="#2e2e2e" /><rect x="741" y="835.9" width="8.5" height="8.2" fill="#e8e8e8" rx="2"/><rect x="755.5" y="835.9" width="8.5" height="8.2" fill="#e8e8e8" rx="2"/><rect x="746.3" y="836.4" width="12.4" height="7.5" fill="#fbfbfb" /><rect x="748.7" y="836.4" width="7.6" height="7.5" fill="#2e2e2e" /><rect x="770" y="835.9" width="8.5" height="8.2" fill="#e8e8e8" rx="2"/><rect x="784.5" y="835.9" width="8.5" height="8.2" fill="#e8e8e8" rx="2"/><rect x="775.3" y="836.4" width="12.4" height="7.5" fill="#fbfbfb" /><rect x="777.7" y="836.4" width="7.6" height="7.5" fill="#2e2e2e" /><rect x="799.5" y="835.9" width="8.5" height="8.2" fill="#e8e8e8" rx="2"/><rect x="814" y="835.9" width="8.5" height="8.2" fill="#e8e8e8" rx="2"/><rect x="804.8" y="836.4" width="12.4" height="7.5" fill="#fbfbfb" /><rect x="807.2" y="836.4" width="7.6" height="7.5" fill="#2e2e2e" /><rect x="741" y="848.4" width="8.5" height="8.2" fill="#e8e8e8" rx="2"/><rect x="755.5" y="848.4" width="8.5" height="8.2" fill="#e8e8e8" rx="2"/><rect x="746.3" y="848.9" width="12.4" height="7.5" fill="#fbfbfb" /><rect x="748.7" y="848.9" width="7.6" height="7.5" fill="#2e2e2e" /><rect x="770" y="848.4" width="8.5" height="8.2" fill="#e8e8e8" rx="2"/><rect x="784.5" y="848.4" width="8.5" height="8.2" fill="#e8e8e8" rx="2"/><rect x="775.3" y="848.9" width="12.4" height="7.5" fill="#fbfbfb" /><rect x="777.7" y="848.9" width="7.6" height="7.5" fill="#2e2e2e" /><rect x="799.5" y="848.4" width="8.5" height="8.2" fill="#e8e8e8" rx="2"/><rect x="814" y="848.4" width="8.5" height="8.2" fill="#e8e8e8" rx="2"/><rect x="804.8" y="848.9" width="12.4" height="7.5" fill="#fbfbfb" /><rect x="807.2" y="848.9" width="7.6" height="7.5" fill="#2e2e2e" /><rect x="829" y="848.4" width="8.5" height="8.2" fill="#e8e8e8" rx="2"/><rect x="843.5" y="848.4" width="8.5" height="8.2" fill="#e8e8e8" rx="2"/><rect x="834.3" y="848.9" width="12.4" height="7.5" fill="#fbfbfb" /><rect x="836.7" y="848.9" width="7.6" height="7.5" fill="#2e2e2e" /><rect x="829" y="863.4" width="8.5" height="8.2" fill="#e8e8e8" rx="2"/><rect x="843.5" y="863.4" width="8.5" height="8.2" fill="#e8e8e8" rx="2"/><rect x="834.3" y="863.9" width="12.4" height="7.5" fill="#fbfbfb" /><rect x="836.7" y="863.9" width="7.6" height="7.5" fill="#2e2e2e" /><text x="798" y="871" font-size="12.29" textLength="23" lengthAdjust="spacingAndGlyphs" fill="#f4f4f4">R35</text><rect x="875.8" y="823.4" width="8.5" height="8.2" fill="#e8e8e8" rx="2"/><rect x="890.3" y="823.4" width="8.5" height="8.2" fill="#e8e8e8" rx="2"/><rect x="881.1" y="823.9" width="12.4" height="7.5" fill="#fbfbfb" /><rect x="883.5" y="823.9" width="7.6" height="7.5" fill="#2e2e2e" /><rect x="875.8" y="835.9" width="8.5" height="8.2" fill="#e8e8e8" rx="2"/><rect x="890.3" y="835.9" width="8.5" height="8.2" fill="#e8e8e8" rx="2"/><rect x="881.1" y="836.4" width="12.4" height="7.5" fill="#fbfbfb" /><rect x="883.5" y="836.4" width="7.6" height="7.5" fill="#2e2e2e" /><rect x="875.8" y="848.4" width="8.5" height="8.2" fill="#e8e8e8" rx="2"/><rect x="890.3" y="848.4" width="8.5" height="8.2" fill="#e8e8e8" rx="2"/><rect x="881.1" y="848.9" width="12.4" height="7.5" fill="#fbfbfb" /><rect x="883.5" y="848.9" width="7.6" height="7.5" fill="#2e2e2e" /><text x="877" y="819" font-size="12.29" textLength="23" lengthAdjust="spacingAndGlyphs" fill="#f4f4f4">R31</text><text x="846" y="844" font-size="12.29" textLength="23" lengthAdjust="spacingAndGlyphs" fill="#f4f4f4">R32</text><text x="903" y="857" font-size="12.29" textLength="23" lengthAdjust="spacingAndGlyphs" fill="#f4f4f4">R26</text><rect x="875.8" y="891.9" width="8.5" height="8.2" fill="#e8e8e8" rx="2"/><rect x="890.3" y="891.9" width="8.5" height="8.2" fill="#e8e8e8" rx="2"/><rect x="881.1" y="892.4" width="12.4" height="7.5" fill="#fbfbfb" /><rect x="883.5" y="892.4" width="7.6" height="7.5" fill="#2e2e2e" /><text x="875.5" y="915.5" font-size="12.29" textLength="23" lengthAdjust="spacingAndGlyphs" fill="#f4f4f4">R33</text><rect x="844.5" y="891.7" width="8.5" height="8.6" fill="#e8e8e8" rx="2.5"/><rect x="860" y="891.7" width="8.5" height="8.6" fill="#e8e8e8" rx="2.5"/><rect x="849.5" y="892" width="14" height="8" fill="#fdfdfd" /><rect x="852.4" y="892" width="8.2" height="8" fill="#b9978a" /><rect x="849.7" y="892" width="13.6" height="1.3" fill="#4a3028" /><text x="845.5" y="912" font-size="12.29" textLength="22.5" lengthAdjust="spacingAndGlyphs" fill="#f4f4f4">C14</text><path d="M876,862 L890,862" fill="none" stroke="#f4f4f4" stroke-width="1" /><rect x="868" y="865" width="9" height="5" fill="#e6e6e6" rx="0.8"/><rect x="868" y="879.5" width="9" height="5" fill="#e6e6e6" rx="0.8"/><rect x="889" y="865" width="9" height="5" fill="#e6e6e6" rx="0.8"/><rect x="889" y="872.5" width="9" height="5" fill="#e6e6e6" rx="0.8"/><rect x="889" y="880" width="9" height="5" fill="#e6e6e6" rx="0.8"/><rect x="876" y="865" width="13.5" height="24" fill="#161616" /><rect x="876.5" y="865.5" width="12.5" height="22" fill="#67615f" /><polygon points="891.5,886.5 896,889 891.5,891.5" fill="#f4f4f4" /><text x="899" y="869.5" font-size="12.29" textLength="23" lengthAdjust="spacingAndGlyphs" fill="#f4f4f4">U15</text><text x="934" y="869.5" font-size="12.29" textLength="23" lengthAdjust="spacingAndGlyphs" fill="#f4f4f4">C16</text><text x="924" y="807" font-size="12.29" textLength="23" lengthAdjust="spacingAndGlyphs" fill="#f4f4f4">C15</text><rect x="955" y="757.5" width="8" height="8.5" fill="#e8e8e8" rx="2"/><rect x="955" y="772" width="8" height="8.5" fill="#e8e8e8" rx="2"/><rect x="955.4" y="762.8" width="7.2" height="12.4" fill="#fbfbfb" /><rect x="955.4" y="765.2" width="7.2" height="7.6" fill="#2e2e2e" /><text x="963.4" y="806" font-size="12.29" textLength="22" lengthAdjust="spacingAndGlyphs" transform="rotate(-90 963.4 806)" fill="#f4f4f4">R14</text><rect x="968" y="757.5" width="8" height="8.5" fill="#e8e8e8" rx="2"/><rect x="968" y="772" width="8" height="8.5" fill="#e8e8e8" rx="2"/><rect x="968.4" y="762.8" width="7.2" height="12.4" fill="#fbfbfb" /><rect x="968.4" y="765.2" width="7.2" height="7.6" fill="#2e2e2e" /><text x="976.4" y="806" font-size="12.29" textLength="22" lengthAdjust="spacingAndGlyphs" transform="rotate(-90 976.4 806)" fill="#f4f4f4">R16</text><rect x="980.5" y="757.5" width="8" height="8.5" fill="#e8e8e8" rx="2"/><rect x="980.5" y="772" width="8" height="8.5" fill="#e8e8e8" rx="2"/><rect x="980.9" y="762.8" width="7.2" height="12.4" fill="#fbfbfb" /><rect x="980.9" y="765.2" width="7.2" height="7.6" fill="#2e2e2e" /><text x="988.9" y="806" font-size="12.29" textLength="22" lengthAdjust="spacingAndGlyphs" transform="rotate(-90 988.9 806)" fill="#f4f4f4">R18</text><text x="992" y="807" font-size="12.29" textLength="13" lengthAdjust="spacingAndGlyphs" fill="#f4f4f4">J6</text><text x="1013" y="807" font-size="12.29" textLength="13.5" lengthAdjust="spacingAndGlyphs" fill="#f4f4f4">J4</text><text x="1034" y="807" font-size="12.29" textLength="13.5" lengthAdjust="spacingAndGlyphs" fill="#f4f4f4">J7</text><path d="M987,812 L987,862" fill="none" stroke="#f4f4f4" stroke-width="1" /><rect x="988.5" y="811" width="67" height="74.5" fill="#0c0c0c" /><rect x="991" y="817" width="64" height="68" fill="#67615f" /><polygon points="1008.5,817 1014.5,817 1011.5,820" fill="#0c0c0c" /><polygon points="1030,817 1036,817 1033,820" fill="#0c0c0c" /><polygon points="998,825.5 1002.5,824.5 1008.5,836.5 1005,838.5" fill="#6a5636" /><polygon points="998,825.5 1005,838.5 1002.5,840 996.5,828.5" fill="#46391f" /><rect x="1004.5" y="836.5" width="5.5" height="5.5" fill="#f3dca6" /><rect x="1004.5" y="836.5" width="5.5" height="5.5" fill="none" stroke="#b89a60" stroke-width="0.8"/><polygon points="1010,836.5 1013.5,839 1010,842" fill="#1a1a18" /><polygon points="1020.3,825.5 1024.8,824.5 1030.8,836.5 1027.3,838.5" fill="#6a5636" /><polygon points="1020.3,825.5 1027.3,838.5 1024.8,840 1018.8,828.5" fill="#46391f" /><rect x="1026.8" y="836.5" width="5.5" height="5.5" fill="#f3dca6" /><rect x="1026.8" y="836.5" width="5.5" height="5.5" fill="none" stroke="#b89a60" stroke-width="0.8"/><polygon points="1032.3,836.5 1035.8,839 1032.3,842" fill="#1a1a18" /><polygon points="1042.6,825.5 1047.1,824.5 1053.1,836.5 1049.6,838.5" fill="#6a5636" /><polygon points="1042.6,825.5 1049.6,838.5 1047.1,840 1041.1,828.5" fill="#46391f" /><rect x="1049.1" y="836.5" width="5.5" height="5.5" fill="#f3dca6" /><rect x="1049.1" y="836.5" width="5.5" height="5.5" fill="none" stroke="#b89a60" stroke-width="0.8"/><polygon points="1054.6,836.5 1058.1,839 1054.6,842" fill="#1a1a18" /><polygon points="998,847.8 1002.5,846.8 1008.5,858.8 1005,860.8" fill="#6a5636" /><polygon points="998,847.8 1005,860.8 1002.5,862.3 996.5,850.8" fill="#46391f" /><rect x="1004.5" y="858.8" width="5.5" height="5.5" fill="#f3dca6" /><rect x="1004.5" y="858.8" width="5.5" height="5.5" fill="none" stroke="#b89a60" stroke-width="0.8"/><polygon points="1010,858.8 1013.5,861.3 1010,864.3" fill="#1a1a18" /><polygon points="1020.3,847.8 1024.8,846.8 1030.8,858.8 1027.3,860.8" fill="#6a5636" /><polygon points="1020.3,847.8 1027.3,860.8 1024.8,862.3 1018.8,850.8" fill="#46391f" /><rect x="1026.8" y="858.8" width="5.5" height="5.5" fill="#f3dca6" /><rect x="1026.8" y="858.8" width="5.5" height="5.5" fill="none" stroke="#b89a60" stroke-width="0.8"/><polygon points="1032.3,858.8 1035.8,861.3 1032.3,864.3" fill="#1a1a18" /><polygon points="1042.6,847.8 1047.1,846.8 1053.1,858.8 1049.6,860.8" fill="#6a5636" /><polygon points="1042.6,847.8 1049.6,860.8 1047.1,862.3 1041.1,850.8" fill="#46391f" /><rect x="1049.1" y="858.8" width="5.5" height="5.5" fill="#f3dca6" /><rect x="1049.1" y="858.8" width="5.5" height="5.5" fill="none" stroke="#b89a60" stroke-width="0.8"/><polygon points="1054.6,858.8 1058.1,861.3 1054.6,864.3" fill="#1a1a18" /><polygon points="998,870.1 1002.5,869.1 1008.5,881.1 1005,883.1" fill="#6a5636" /><polygon points="998,870.1 1005,883.1 1002.5,884.6 996.5,873.1" fill="#46391f" /><rect x="1004.5" y="881.1" width="5.5" height="5.5" fill="#f3dca6" /><rect x="1004.5" y="881.1" width="5.5" height="5.5" fill="none" stroke="#b89a60" stroke-width="0.8"/><polygon points="1010,881.1 1013.5,883.6 1010,886.6" fill="#1a1a18" /><polygon points="1020.3,870.1 1024.8,869.1 1030.8,881.1 1027.3,883.1" fill="#6a5636" /><polygon points="1020.3,870.1 1027.3,883.1 1024.8,884.6 1018.8,873.1" fill="#46391f" /><rect x="1026.8" y="881.1" width="5.5" height="5.5" fill="#f3dca6" /><rect x="1026.8" y="881.1" width="5.5" height="5.5" fill="none" stroke="#b89a60" stroke-width="0.8"/><polygon points="1032.3,881.1 1035.8,883.6 1032.3,886.6" fill="#1a1a18" /><polygon points="1042.6,870.1 1047.1,869.1 1053.1,881.1 1049.6,883.1" fill="#6a5636" /><polygon points="1042.6,870.1 1049.6,883.1 1047.1,884.6 1041.1,873.1" fill="#46391f" /><rect x="1049.1" y="881.1" width="5.5" height="5.5" fill="#f3dca6" /><rect x="1049.1" y="881.1" width="5.5" height="5.5" fill="none" stroke="#b89a60" stroke-width="0.8"/><polygon points="1054.6,881.1 1058.1,883.6 1054.6,886.6" fill="#1a1a18" /><rect x="994" y="884.2" width="8" height="8.5" fill="#e8e8e8" rx="2"/><rect x="994" y="898.7" width="8" height="8.5" fill="#e8e8e8" rx="2"/><rect x="994.4" y="889.5" width="7.2" height="12.4" fill="#fbfbfb" /><rect x="994.4" y="891.9" width="7.2" height="7.6" fill="#2e2e2e" /><text x="1002.4" y="933" font-size="12.29" textLength="22" lengthAdjust="spacingAndGlyphs" transform="rotate(-90 1002.4 933)" fill="#f4f4f4">R19</text><rect x="1015" y="884.2" width="8" height="8.5" fill="#e8e8e8" rx="2"/><rect x="1015" y="898.7" width="8" height="8.5" fill="#e8e8e8" rx="2"/><rect x="1015.4" y="889.5" width="7.2" height="12.4" fill="#fbfbfb" /><rect x="1015.4" y="891.9" width="7.2" height="7.6" fill="#2e2e2e" /><text x="1023.4" y="933" font-size="12.29" textLength="22" lengthAdjust="spacingAndGlyphs" transform="rotate(-90 1023.4 933)" fill="#f4f4f4">R17</text><rect x="1036.5" y="884.2" width="8" height="8.5" fill="#e8e8e8" rx="2"/><rect x="1036.5" y="898.7" width="8" height="8.5" fill="#e8e8e8" rx="2"/><rect x="1036.9" y="889.5" width="7.2" height="12.4" fill="#fbfbfb" /><rect x="1036.9" y="891.9" width="7.2" height="7.6" fill="#2e2e2e" /><text x="1044.9" y="933" font-size="12.29" textLength="22" lengthAdjust="spacingAndGlyphs" transform="rotate(-90 1044.9 933)" fill="#f4f4f4">R15</text><text x="745" y="924" font-size="12.29" textLength="23" lengthAdjust="spacingAndGlyphs" fill="#f4f4f4">C20</text><rect x="914.5" y="825.7" width="11" height="13" fill="#e2e2e2" rx="1.5"/><rect x="917.5" y="828.7" width="6" height="7" fill="#fbfbfb" /><rect x="965" y="825.7" width="11" height="13" fill="#e2e2e2" rx="1.5"/><rect x="967" y="828.7" width="6" height="7" fill="#fbfbfb" /><polygon points="931.01,810.7 967.2,810.7 967.2,854.3 931.01,854.3 923.6,846.89 923.6,818.11" fill="#5d5856" /><path d="M922.4,822.11 L922.4,817.61 L930.51,809.5 L968.4,809.5 L968.4,820.11" fill="none" stroke="#d6d6d6" stroke-width="0.9" /><path d="M968.4,842.96 L968.4,849.94" fill="none" stroke="#d6d6d6" stroke-width="0.9" /><circle cx="948.3" cy="833.54" r="20.65" fill="#242120" /><path d="M927.27,832.14 A22.7,22.7 0 0 1 969.93,832.14" fill="none" stroke="#bdb7b2" stroke-width="1.1"/><circle cx="948.6" cy="842.1" r="21.4" fill="#6b6563" /><path d="M955.45,821.83 A21.4,21.4 0 1 0 955.45,862.37Z" fill="#fffffc"/><text x="915.3" y="821.6" font-size="8.38" textLength="6.5" lengthAdjust="spacingAndGlyphs" fill="#f4f4f4">+</text><rect x="757.5" y="893.5" width="11" height="13" fill="#e2e2e2" rx="1.5"/><rect x="760.5" y="896.5" width="6" height="7" fill="#fbfbfb" /><rect x="808.5" y="893.5" width="11" height="13" fill="#e2e2e2" rx="1.5"/><rect x="810.5" y="896.5" width="6" height="7" fill="#fbfbfb" /><polygon points="773.15,877.5 810.5,877.5 810.5,922.5 773.15,922.5 765.5,914.85 765.5,885.15" fill="#5d5856" /><path d="M764.3,889.15 L764.3,884.65 L772.65,876.3 L811.7,876.3 L811.7,887.15" fill="none" stroke="#d6d6d6" stroke-width="0.9" /><path d="M811.7,910.8 L811.7,918" fill="none" stroke="#d6d6d6" stroke-width="0.9" /><circle cx="786.2" cy="903.74" r="20.65" fill="#242120" /><path d="M765.17,902.34 A22.7,22.7 0 0 1 807.83,902.34" fill="none" stroke="#bdb7b2" stroke-width="1.1"/><circle cx="786.5" cy="912.3" r="21.4" fill="#6b6563" /><path d="M793.35,892.03 A21.4,21.4 0 1 0 793.35,932.57Z" fill="#fffffc"/><text x="757.5" y="889.5" font-size="8.38" textLength="6.5" lengthAdjust="spacingAndGlyphs" fill="#f4f4f4">+</text><rect x="907.5" y="893.55" width="11" height="13.5" fill="#e2e2e2" rx="1.5"/><rect x="910.5" y="896.55" width="6" height="7.5" fill="#fbfbfb" /><rect x="972.3" y="893.55" width="11" height="13.5" fill="#e2e2e2" rx="1.5"/><rect x="974.3" y="896.55" width="6" height="7.5" fill="#fbfbfb" /><polygon points="927.49,872.9 974.3,872.9 974.3,929.3 927.49,929.3 917.9,919.71 917.9,882.49" fill="#5d5856" /><path d="M916.7,886.49 L916.7,881.99 L926.99,871.7 L975.5,871.7 L975.5,884.49" fill="none" stroke="#d6d6d6" stroke-width="0.9" /><path d="M975.5,914.64 L975.5,923.66" fill="none" stroke="#d6d6d6" stroke-width="0.9" /><circle cx="948" cy="901.98" r="25.86" fill="#242120" /><path d="M921.89,900.89 A28.1,28.1 0 0 1 974.71,900.89" fill="none" stroke="#bdb7b2" stroke-width="1.1"/><circle cx="948.3" cy="912.7" r="26.8" fill="#6b6563" /><path d="M956.88,887.31 A26.8,26.8 0 1 0 956.88,938.09Z" fill="#fffffc"/><text x="909.6" y="888.3" font-size="8.38" textLength="6.5" lengthAdjust="spacingAndGlyphs" fill="#f4f4f4">+</text><rect x="1436" y="800" width="8" height="8.5" fill="#e8e8e8" rx="2"/><rect x="1436" y="814.5" width="8" height="8.5" fill="#e8e8e8" rx="2"/><rect x="1436.4" y="805.3" width="7.2" height="12.4" fill="#fbfbfb" /><rect x="1436.4" y="807.7" width="7.2" height="7.6" fill="#2e2e2e" /><text x="1444.4" y="796" font-size="12.29" textLength="22" lengthAdjust="spacingAndGlyphs" transform="rotate(-90 1444.4 796)" fill="#f4f4f4">R12</text><rect x="1457" y="800" width="8" height="8.5" fill="#e8e8e8" rx="2"/><rect x="1457" y="814.5" width="8" height="8.5" fill="#e8e8e8" rx="2"/><rect x="1457.4" y="805.3" width="7.2" height="12.4" fill="#fbfbfb" /><rect x="1457.4" y="807.7" width="7.2" height="7.6" fill="#2e2e2e" /><text x="1465.4" y="796" font-size="12.29" textLength="22" lengthAdjust="spacingAndGlyphs" transform="rotate(-90 1465.4 796)" fill="#f4f4f4">R13</text><rect x="1371" y="827" width="116.5" height="103.5" fill="none" stroke="#dcdcdc" stroke-width="1"/><circle cx="1401" cy="840.5" r="6.4" fill="#f7ec1d" /><circle cx="1401" cy="840.5" r="4" fill="#0e0e06" /><circle cx="1457" cy="840.5" r="6.4" fill="#f7ec1d" /><circle cx="1457" cy="840.5" r="4" fill="#0e0e06" /><circle cx="1401" cy="860" r="6.4" fill="#f7ec1d" /><circle cx="1401" cy="860" r="4" fill="#0e0e06" /><circle cx="1418" cy="860" r="6.4" fill="#f7ec1d" /><circle cx="1418" cy="860" r="4" fill="#0e0e06" /><circle cx="1439.5" cy="860" r="6.4" fill="#f7ec1d" /><circle cx="1439.5" cy="860" r="4" fill="#0e0e06" /><circle cx="1457" cy="860" r="6.4" fill="#f7ec1d" /><circle cx="1457" cy="860" r="4" fill="#0e0e06" /><circle cx="1371.5" cy="884.5" r="14.5" fill="#f7ec1d" /><circle cx="1371.5" cy="884.5" r="10.3" fill="#0d0d08" /><ellipse cx="1369.7" cy="882.7" rx="8.300" ry="8.300" fill="#9a99b6"/><circle cx="1487" cy="884.5" r="14.5" fill="#f7ec1d" /><circle cx="1487" cy="884.5" r="10.3" fill="#0d0d08" /><ellipse cx="1485.2" cy="882.7" rx="8.300" ry="8.300" fill="#9a99b6"/><circle cx="1429" cy="891.5" r="10.3" fill="#1c1808" /><ellipse cx="1427.300" cy="889.700" rx="8.400" ry="8.400" fill="#9a99b6"/><text x="1423" y="927.2" font-size="12.99" textLength="13" lengthAdjust="spacingAndGlyphs" stroke="#1e3a2b" stroke-width="0.1" fill="#d6d6d6">J3</text><path d="M1086,932 L1086,817 L1344,817" fill="none" stroke="#f4f4f4" stroke-width="1" /><polygon points="1248.5,810.5 1252.5,810.5 1250.5,814" fill="none" stroke="#f0f0f0" stroke-width="0.7"/><polygon points="1090,819 1343,819 1354,823.5 1354,844 1162.5,844 1162.5,952 1122,952 1090,930" fill="#0c0c0c" /><rect x="1094" y="823" width="46.5" height="100" fill="#67615f" /><rect x="1105" y="838.500" width="27.500" height="39" rx="13" fill="#1d3a2b"/><path d="M1107,848 A13,13 0 0 1 1128,842" stroke="#8c8ba5" stroke-width="5" fill="none" stroke-dasharray="2.5 2"/><path d="M1124.500,840.500 A12,12 0 0 1 1128.500,853" stroke="#f7ec1d" stroke-width="2.200" fill="none"/><path d="M1105.500,855 L1110.500,857" stroke="#f7ec1d" stroke-width="2" fill="none"/><rect x="1111" y="853" width="17" height="69.5" fill="#ffffff" /><polygon points="1111,922.5 1128,922.5 1131,928 1114,928" fill="#c8c8c8" /><polygon points="1343.5,923 1360,923 1390,950.5 1390,953 1343.5,953" fill="#0c0c0c" /><ellipse cx="1352" cy="934.500" rx="10" ry="5.200" fill="#f1f1ec"/><ellipse cx="1353" cy="935.500" rx="7.500" ry="3.500" fill="#dcdcd4"/><polygon points="1307.5,823.5 1354,823.5 1354,923 1343.75,923 1343.75,971 1162.5,971 1162.5,844 1342.5,844" fill="#67615f" /><ellipse cx="1126" cy="933.800" rx="18" ry="7.300" fill="#f6f6f0"/><ellipse cx="1126.500" cy="935" rx="14.500" ry="5" fill="#deded6"/><ellipse cx="1127" cy="935.800" rx="12" ry="3.800" fill="#fbfbf6"/><polygon points="1114,928 1131,928 1128,922.5 1111,922.5" fill="#d0d0d0" /><linearGradient id="fl" x1="0" y1="0" x2="1" y2="0"><stop offset="0" stop-color="#111"/><stop offset="0.040" stop-color="#3a3735"/><stop offset="0.080" stop-color="#67615f"/><stop offset="0.960" stop-color="#67615f"/><stop offset="1" stop-color="#222"/></linearGradient><polygon points="1122,952 1390,952 1390,967 1386,971 1120,971 1112,962" fill="url(#fl)" /><polygon points="1090,930 1122,952 1112,962 1090,934" fill="#0c0c0c" /><rect x="1162.5" y="940" width="181.25" height="31" fill="#67615f" /><path d="M1118,971.5 L1388,971.5" fill="none" stroke="#f4f4f0" stroke-width="1.4" /><linearGradient id="ds" x1="0" y1="0" x2="1" y2="0"><stop offset="0" stop-color="#b9b9ae"/><stop offset="0.060" stop-color="#fffffa"/><stop offset="1" stop-color="#fffffa"/></linearGradient><path d="M1165,972 H1315.500 V1014 Q1315.500,1020.500 1309,1020.500 H1184 Q1176,1020.500 1173.500,1013 L1165,990Z" fill="url(#ds)"/><path d="M1165,972 L1165,990 L1173.500,1013 Q1176,1020.500 1184,1020.500 L1180,1016 L1171,992 L1171,972Z" fill="#9c9c92"/><linearGradient id="ag" x1="0" y1="0" x2="1" y2="0"><stop offset="0" stop-color="#00b000"/><stop offset="0.45" stop-color="#00ff00"/><stop offset="1" stop-color="#00a000"/></linearGradient><linearGradient id="ar" x1="0" y1="0" x2="0" y2="1"><stop offset="0" stop-color="#b00000"/><stop offset="0.45" stop-color="#ff1010"/><stop offset="1" stop-color="#a00000"/></linearGradient><rect x="57" y="936" width="12" height="18" fill="url(#ag)" /><polygon points="63,913.3 74.5,936.5 63,938.5 51.5,936.5" fill="url(#ag)" /><ellipse cx="63" cy="936.500" rx="11.500" ry="2" fill="#00c000"/><rect x="74" y="958" width="17" height="12" fill="url(#ar)" /><polygon points="113,964 91,975.5 89.5,964 91,952.5" fill="url(#ar)" /><ellipse cx="91" cy="964" rx="2" ry="11.500" fill="#b00000"/><circle cx="63" cy="964" r="14.3" fill="#0000a4" />
</g></svg></body></html>
